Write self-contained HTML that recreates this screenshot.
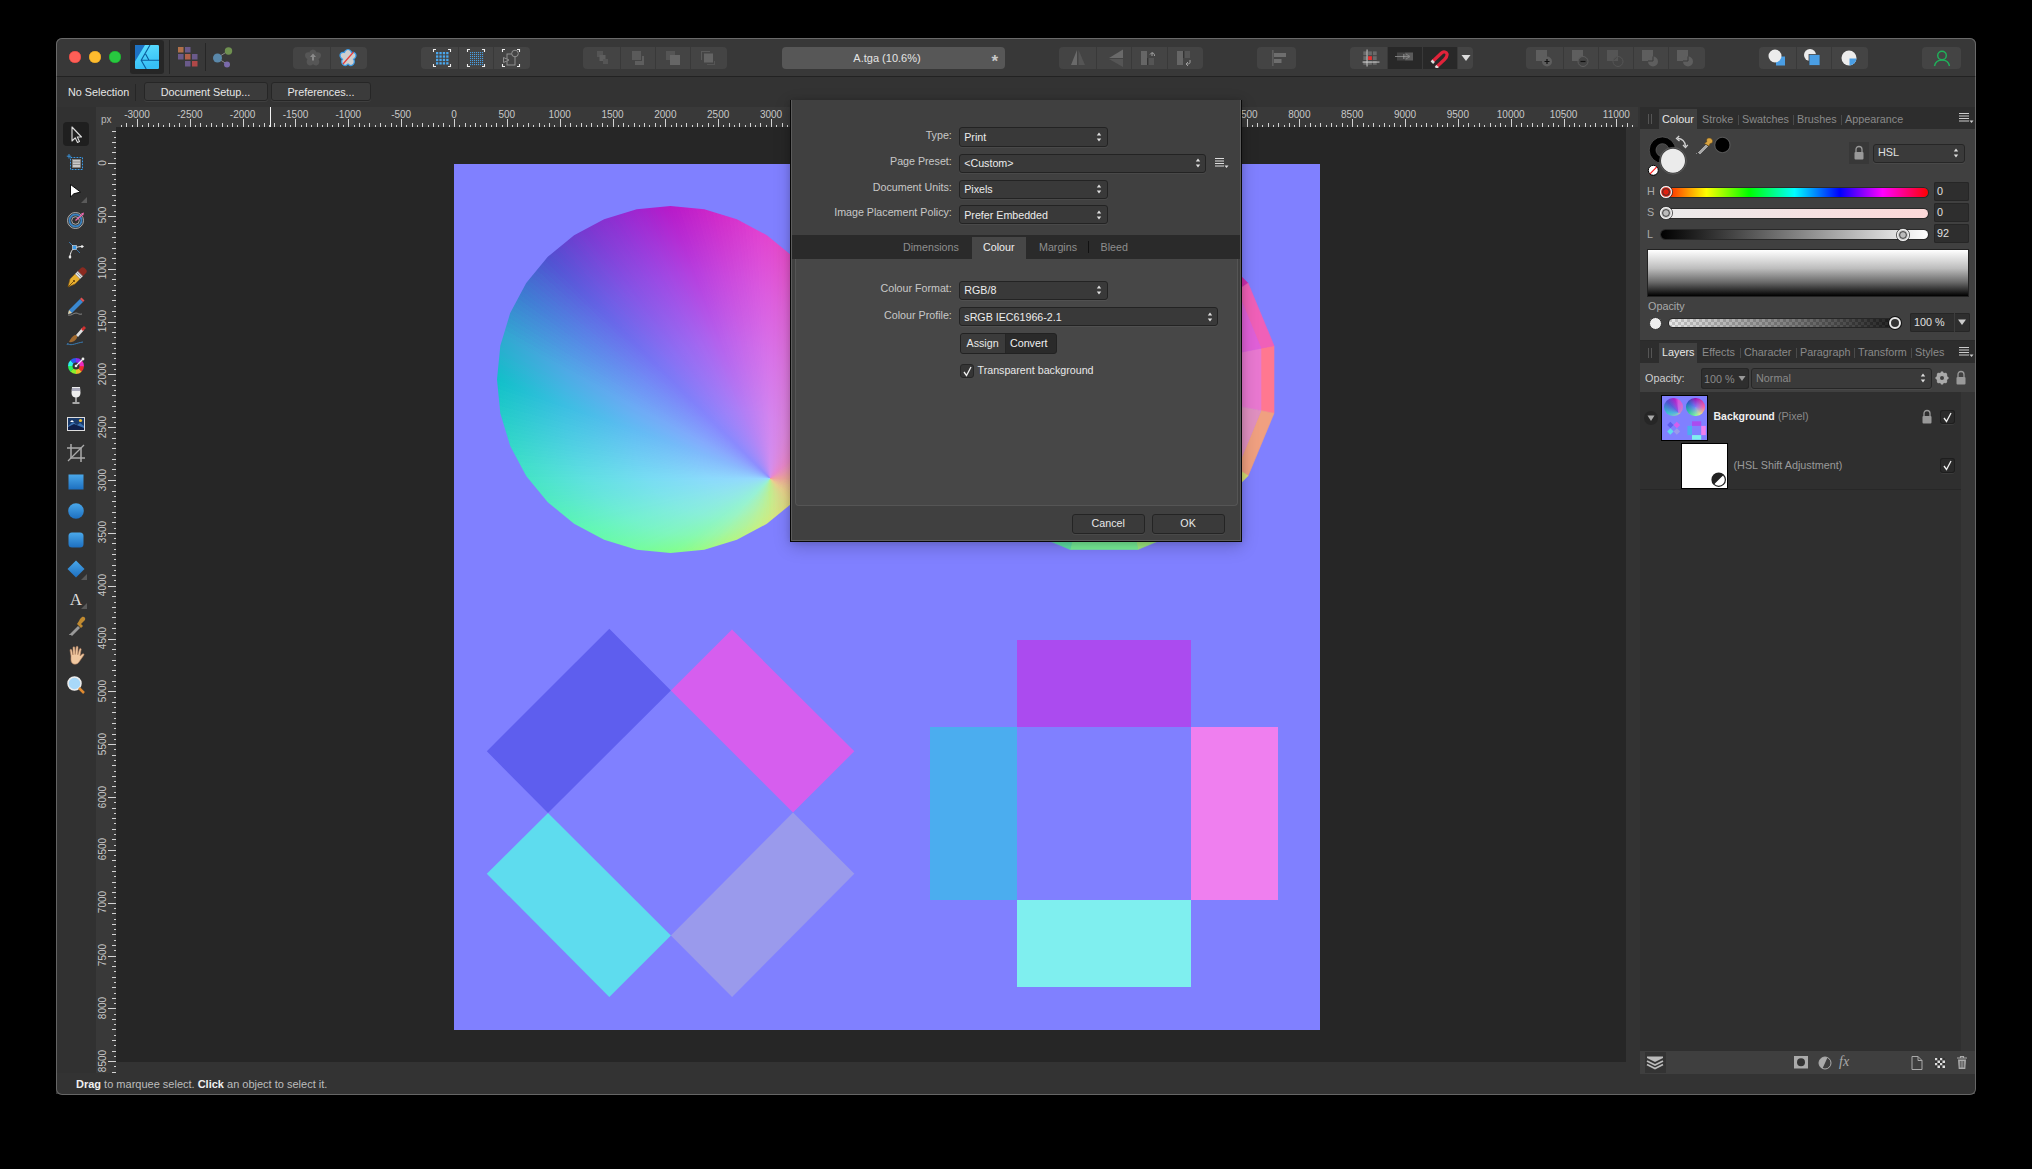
<!DOCTYPE html><html><head><meta charset="utf-8"><style>*{margin:0;padding:0;box-sizing:border-box}
html,body{width:2032px;height:1169px;background:#000;overflow:hidden;font-family:"Liberation Sans",sans-serif;color:#ddd;position:relative}
.a{position:absolute}
#win{position:absolute;left:56px;top:38px;width:1920px;height:1057px;background:#333;border-radius:6px}
#winb{position:absolute;left:56px;top:38px;width:1920px;height:1057px;border-radius:6px;box-shadow:inset 0 0 0 1px rgba(255,255,255,0.25);pointer-events:none;z-index:50}
.t{position:absolute;white-space:nowrap;font-size:11px;line-height:1}
</style></head><body>
<div id="win"></div>
<div class="a" style="left:56px;top:38px;width:1920px;height:38px;background:#383838;border-radius:6px 6px 0 0"></div>
<div class="a" style="left:56px;top:76px;width:1920px;height:1px;background:#222"></div>
<div class="a" style="left:69px;top:51px;width:12px;height:12px;border-radius:6px;background:#fe5f57;box-shadow:inset 0 0 0 0.5px #e0443e"></div>
<div class="a" style="left:89px;top:51px;width:12px;height:12px;border-radius:6px;background:#febc2e;box-shadow:inset 0 0 0 0.5px #dea123"></div>
<div class="a" style="left:109px;top:51px;width:12px;height:12px;border-radius:6px;background:#28c840;box-shadow:inset 0 0 0 0.5px #1aab29"></div>
<div class="a" style="left:130px;top:40px;width:34px;height:34px;background:#262626;border-radius:3px"></div>
<svg class="a" style="left:135px;top:45px" width="24" height="24" viewBox="0 0 24 24"><defs><linearGradient id="ap" x1="0" y1="0" x2="0.3" y2="1"><stop offset="0" stop-color="#5ee0ff"/><stop offset="1" stop-color="#36bff6"/></linearGradient></defs><rect x="0" y="0" width="24" height="24" rx="1.2" fill="url(#ap)"/><path d="M0,0 L10,0 L0,16.5Z" fill="#1e72c4"/><path d="M15,0 L6.2,15.3 L11.2,24 M6.2,15.3 L24,15.3 M10.6,9 L14,15.3" stroke="#0b5c9c" stroke-width="1.1" fill="none"/></svg>
<div class="a" style="left:169px;top:40px;width:1px;height:34px;background:#262626"></div>
<svg class="a" style="left:178px;top:47px" width="22" height="22"><rect x="0" y="0" width="5.5" height="5.5" fill="#b0704a"/><rect x="7" y="0" width="5.5" height="5.5" fill="#6a5a8a"/><rect x="0" y="7" width="5.5" height="5.5" fill="#6a5a8a"/><rect x="7" y="7" width="5.5" height="5.5" fill="#b0604a"/><rect x="14" y="7" width="5.5" height="5.5" fill="#6a5a8a"/><rect x="7" y="14" width="5.5" height="5.5" fill="#6a5a8a"/><rect x="14" y="14" width="5.5" height="5.5" fill="#b04848"/></svg>
<div class="a" style="left:205px;top:43px;width:1px;height:28px;background:#262626"></div>
<svg class="a" style="left:212px;top:46px" width="24" height="24"><line x1="5" y1="12" x2="16" y2="5" stroke="#888" stroke-width="1"/><line x1="5" y1="12" x2="15" y2="18" stroke="#888" stroke-width="1"/><circle cx="5.5" cy="12" r="4.5" fill="#5a88aa"/><circle cx="16.5" cy="5" r="3.7" fill="#6f9050"/><circle cx="15" cy="18.5" r="3" fill="#7a6aaa"/></svg>
<div class="a" style="left:293px;top:47px;width:74px;height:22px;background:#444;border-radius:4px;overflow:hidden">
<div class="a" style="left:37px;top:0;width:1px;height:22px;background:#393939"></div>
</div>
<svg class="a" style="left:300.5px;top:47.5px" width="24" height="20" viewBox="0 0 24 20"><path d="M12,1.5 C14.5,1.5 15.5,4 15.5,4.5 C17,4 19.8,4.5 20,7 C20.2,9.5 18,11 17.5,11.2 C18.5,12.5 19,15.5 16.5,17 C14,18.5 12.5,16.5 12,16 C11.5,16.5 10,18.5 7.5,17 C5,15.5 5.5,12.5 6.5,11.2 C6,11 3.8,9.5 4,7 C4.2,4.5 7,4 8.5,4.5 C8.5,4 9.5,1.5 12,1.5Z" fill="#565656"/><path d="M12,5.5 L9,9 L11,9 L11,12.5 L13,12.5 L13,9 L15,9Z" fill="#8a8a8a"/></svg>
<svg class="a" style="left:336.0px;top:47.5px" width="24" height="20" viewBox="0 0 24 20"><path d="M12,1.5 C14.5,1.5 15.5,4 15.5,4.5 C17,4 19.8,4.5 20,7 C20.2,9.5 18,11 17.5,11.2 C18.5,12.5 19,15.5 16.5,17 C14,18.5 12.5,16.5 12,16 C11.5,16.5 10,18.5 7.5,17 C5,15.5 5.5,12.5 6.5,11.2 C6,11 3.8,9.5 4,7 C4.2,4.5 7,4 8.5,4.5 C8.5,4 9.5,1.5 12,1.5Z" fill="#cfcfcf" stroke="#3a9be8" stroke-width="1.2"/><line x1="7" y1="16" x2="17.5" y2="4" stroke="#e83a3a" stroke-width="1.2"/></svg>
<div class="a" style="left:421px;top:47px;width:109px;height:22px;background:#444;border-radius:4px;overflow:hidden">
<div class="a" style="left:37px;top:0;width:1px;height:22px;background:#393939"></div>
<div class="a" style="left:72px;top:0;width:1px;height:22px;background:#393939"></div>
</div>
<svg class="a" style="left:429.5px;top:47.5px" width="24" height="20" viewBox="0 0 24 20"><path d="M3.5,4.0 L3.5,1.5 L6.0,1.5 M18.0,1.5 L20.5,1.5 L20.5,4.0 M3.5,16.0 L3.5,18.5 L6.0,18.5 M18.0,18.5 L20.5,18.5 L20.5,16.0" stroke="#eee" stroke-width="1.1" fill="none"/><rect x="6.0" y="4.0" width="2.3" height="2.3" fill="#4aa8ee"/><rect x="6.0" y="7.4" width="2.3" height="2.3" fill="#4aa8ee"/><rect x="6.0" y="10.8" width="2.3" height="2.3" fill="#4aa8ee"/><rect x="6.0" y="14.2" width="2.3" height="2.3" fill="#4aa8ee"/><rect x="9.4" y="4.0" width="2.3" height="2.3" fill="#4aa8ee"/><rect x="9.4" y="7.4" width="2.3" height="2.3" fill="#4aa8ee"/><rect x="9.4" y="10.8" width="2.3" height="2.3" fill="#4aa8ee"/><rect x="9.4" y="14.2" width="2.3" height="2.3" fill="#4aa8ee"/><rect x="12.8" y="4.0" width="2.3" height="2.3" fill="#4aa8ee"/><rect x="12.8" y="7.4" width="2.3" height="2.3" fill="#4aa8ee"/><rect x="12.8" y="10.8" width="2.3" height="2.3" fill="#4aa8ee"/><rect x="12.8" y="14.2" width="2.3" height="2.3" fill="#4aa8ee"/><rect x="16.2" y="4.0" width="2.3" height="2.3" fill="#4aa8ee"/><rect x="16.2" y="7.4" width="2.3" height="2.3" fill="#4aa8ee"/><rect x="16.2" y="10.8" width="2.3" height="2.3" fill="#4aa8ee"/><rect x="16.2" y="14.2" width="2.3" height="2.3" fill="#4aa8ee"/></svg>
<svg class="a" style="left:464.0px;top:47.5px" width="24" height="20" viewBox="0 0 24 20"><path d="M3.5,4.0 L3.5,1.5 L6.0,1.5 M18.0,1.5 L20.5,1.5 L20.5,4.0 M3.5,16.0 L3.5,18.5 L6.0,18.5 M18.0,18.5 L20.5,18.5 L20.5,16.0" stroke="#eee" stroke-width="1.1" fill="none"/><rect x="6" y="4" width="1.1" height="1.1" fill="#4a9ee0"/><rect x="6" y="6" width="1.1" height="1.1" fill="#4a9ee0"/><rect x="6" y="8" width="1.1" height="1.1" fill="#4a9ee0"/><rect x="6" y="10" width="1.1" height="1.1" fill="#4a9ee0"/><rect x="6" y="12" width="1.1" height="1.1" fill="#4a9ee0"/><rect x="6" y="14" width="1.1" height="1.1" fill="#4a9ee0"/><rect x="6" y="16" width="1.1" height="1.1" fill="#4a9ee0"/><rect x="8" y="4" width="1.1" height="1.1" fill="#4a9ee0"/><rect x="8" y="6" width="1.1" height="1.1" fill="#4a9ee0"/><rect x="8" y="8" width="1.1" height="1.1" fill="#4a9ee0"/><rect x="8" y="10" width="1.1" height="1.1" fill="#4a9ee0"/><rect x="8" y="12" width="1.1" height="1.1" fill="#4a9ee0"/><rect x="8" y="14" width="1.1" height="1.1" fill="#4a9ee0"/><rect x="8" y="16" width="1.1" height="1.1" fill="#4a9ee0"/><rect x="10" y="4" width="1.1" height="1.1" fill="#4a9ee0"/><rect x="10" y="6" width="1.1" height="1.1" fill="#4a9ee0"/><rect x="10" y="8" width="1.1" height="1.1" fill="#4a9ee0"/><rect x="10" y="10" width="1.1" height="1.1" fill="#4a9ee0"/><rect x="10" y="12" width="1.1" height="1.1" fill="#4a9ee0"/><rect x="10" y="14" width="1.1" height="1.1" fill="#4a9ee0"/><rect x="10" y="16" width="1.1" height="1.1" fill="#4a9ee0"/><rect x="12" y="4" width="1.1" height="1.1" fill="#4a9ee0"/><rect x="12" y="6" width="1.1" height="1.1" fill="#4a9ee0"/><rect x="12" y="8" width="1.1" height="1.1" fill="#4a9ee0"/><rect x="12" y="10" width="1.1" height="1.1" fill="#4a9ee0"/><rect x="12" y="12" width="1.1" height="1.1" fill="#4a9ee0"/><rect x="12" y="14" width="1.1" height="1.1" fill="#4a9ee0"/><rect x="12" y="16" width="1.1" height="1.1" fill="#4a9ee0"/><rect x="14" y="4" width="1.1" height="1.1" fill="#4a9ee0"/><rect x="14" y="6" width="1.1" height="1.1" fill="#4a9ee0"/><rect x="14" y="8" width="1.1" height="1.1" fill="#4a9ee0"/><rect x="14" y="10" width="1.1" height="1.1" fill="#4a9ee0"/><rect x="14" y="12" width="1.1" height="1.1" fill="#4a9ee0"/><rect x="14" y="14" width="1.1" height="1.1" fill="#4a9ee0"/><rect x="14" y="16" width="1.1" height="1.1" fill="#4a9ee0"/><rect x="16" y="4" width="1.1" height="1.1" fill="#4a9ee0"/><rect x="16" y="6" width="1.1" height="1.1" fill="#4a9ee0"/><rect x="16" y="8" width="1.1" height="1.1" fill="#4a9ee0"/><rect x="16" y="10" width="1.1" height="1.1" fill="#4a9ee0"/><rect x="16" y="12" width="1.1" height="1.1" fill="#4a9ee0"/><rect x="16" y="14" width="1.1" height="1.1" fill="#4a9ee0"/><rect x="16" y="16" width="1.1" height="1.1" fill="#4a9ee0"/><rect x="18" y="4" width="1.1" height="1.1" fill="#4a9ee0"/><rect x="18" y="6" width="1.1" height="1.1" fill="#4a9ee0"/><rect x="18" y="8" width="1.1" height="1.1" fill="#4a9ee0"/><rect x="18" y="10" width="1.1" height="1.1" fill="#4a9ee0"/><rect x="18" y="12" width="1.1" height="1.1" fill="#4a9ee0"/><rect x="18" y="14" width="1.1" height="1.1" fill="#4a9ee0"/><rect x="18" y="16" width="1.1" height="1.1" fill="#4a9ee0"/></svg>
<svg class="a" style="left:499.0px;top:47.5px" width="24" height="20" viewBox="0 0 24 20"><path d="M3.5,4.0 L3.5,1.5 L6.0,1.5 M18.0,1.5 L20.5,1.5 L20.5,4.0 M3.5,16.0 L3.5,18.5 L6.0,18.5 M18.0,18.5 L20.5,18.5 L20.5,16.0" stroke="#eee" stroke-width="1.1" fill="none"/><rect x="8" y="6" width="8" height="11" fill="none" stroke="#999" stroke-width="0.9"/><circle cx="16" cy="5.5" r="3.3" fill="#444" stroke="#999" stroke-width="0.9"/><path d="M4.5,9.5 L10,12 L4.5,14.5Z" fill="#444" stroke="#999" stroke-width="0.9"/></svg>
<div class="a" style="left:583px;top:47px;width:144px;height:22px;background:#444;border-radius:4px;overflow:hidden">
<div class="a" style="left:37px;top:0;width:1px;height:22px;background:#393939"></div>
<div class="a" style="left:72px;top:0;width:1px;height:22px;background:#393939"></div>
<div class="a" style="left:107px;top:0;width:1px;height:22px;background:#393939"></div>
</div>
<svg class="a" style="left:589.5px;top:47.5px" width="24" height="20" viewBox="0 0 24 20"><rect x="7" y="3" width="6" height="6" fill="#555"/><rect x="9.5" y="7" width="6" height="6" fill="#5e5e5e"/><rect x="13" y="11" width="5" height="5" fill="#555"/></svg>
<svg class="a" style="left:625.5px;top:47.5px" width="24" height="20" viewBox="0 0 24 20"><rect x="6" y="3" width="9" height="9" fill="#5a5a5a"/><path d="M16,8 L18,8 L18,17 L9,17 L9,13 L16,13Z" fill="#5e5e5e"/></svg>
<svg class="a" style="left:660.5px;top:47.5px" width="24" height="20" viewBox="0 0 24 20"><rect x="5" y="3" width="9" height="9" fill="#555"/><rect x="9" y="7" width="10" height="10" fill="#666"/></svg>
<svg class="a" style="left:696.0px;top:47.5px" width="24" height="20" viewBox="0 0 24 20"><path d="M5,3 L14,3 L14,4 L6,4 L6,12 L5,12Z" fill="#5a5a5a"/><rect x="8" y="5.5" width="9" height="9" fill="#646464"/><path d="M18,13 L19,13 L19,17 L11,17 L11,16 L18,16Z" fill="#555"/></svg>
<div class="a" style="left:782px;top:47px;width:223px;height:22px;background:#575757;border-radius:4px"></div>
<div class="t" style="left:782px;top:52.5px;width:210px;text-align:center;font-size:11px;color:#e4e4e4">A.tga (10.6%)</div>
<div class="t" style="left:991.5px;top:53px;font-size:17px;color:#c8c8c8;font-weight:bold">*</div>
<div class="a" style="left:1059px;top:47px;width:144px;height:22px;background:#444;border-radius:4px;overflow:hidden">
<div class="a" style="left:37px;top:0;width:1px;height:22px;background:#393939"></div>
<div class="a" style="left:72px;top:0;width:1px;height:22px;background:#393939"></div>
<div class="a" style="left:108px;top:0;width:1px;height:22px;background:#393939"></div>
</div>
<svg class="a" style="left:1065.5px;top:47.5px" width="24" height="20" viewBox="0 0 24 20"><path d="M11,2 L11,17 L5,17Z" fill="#6a6a6a"/><path d="M12.5,2 L12.5,17 L19,17Z" fill="#555"/></svg>
<svg class="a" style="left:1101.5px;top:47.5px" width="24" height="20" viewBox="0 0 24 20"><path d="M21,1.5 L7,10 L21,10Z" fill="#6a6a6a"/><path d="M21,11 L7,11 L21,19Z" fill="#555"/></svg>
<svg class="a" style="left:1137.0px;top:47.5px" width="24" height="20" viewBox="0 0 24 20"><rect x="4" y="3" width="6" height="14" fill="#666"/><rect x="10.5" y="10" width="0.8" height="7" fill="#222"/><rect x="11.5" y="10" width="5.5" height="7" fill="#555"/><path d="M13,6.5 L15,4.5 L15,8 M15,5 C17,5 17.5,6 17.5,8" stroke="#aaa" stroke-width="0.9" fill="none"/></svg>
<svg class="a" style="left:1172.5px;top:47.5px" width="24" height="20" viewBox="0 0 24 20"><rect x="4" y="3" width="6" height="14" fill="#666"/><rect x="10.5" y="3" width="0.8" height="7" fill="#222"/><rect x="11.5" y="3" width="5.5" height="7" fill="#555"/><path d="M17,12 L17,14.5 C17,15.5 16,16 14,16 M15,14 L13,16 L15,18" stroke="#aaa" stroke-width="0.9" fill="none"/></svg>
<div class="a" style="left:1257px;top:47px;width:39px;height:22px;background:#444;border-radius:4px;overflow:hidden">
</div>
<svg class="a" style="left:1264.5px;top:47.5px" width="24" height="20" viewBox="0 0 24 20"><rect x="7.5" y="2" width="0.8" height="16" fill="#777"/><rect x="9" y="5" width="12" height="4" fill="#6e6e6e"/><rect x="9" y="11" width="7.5" height="4" fill="#6e6e6e"/></svg>
<div class="a" style="left:1350px;top:47px;width:123px;height:22px;background:#444;border-radius:4px;overflow:hidden">
<div class="a" style="left:37px;top:0;width:35px;height:22px;background:#282828"></div>
<div class="a" style="left:72px;top:0;width:35px;height:22px;background:#282828"></div>
<div class="a" style="left:37px;top:0;width:1px;height:22px;background:#393939"></div>
<div class="a" style="left:72px;top:0;width:1px;height:22px;background:#393939"></div>
<div class="a" style="left:107px;top:0;width:1px;height:22px;background:#393939"></div>
</div>
<svg class="a" style="left:1356.5px;top:47.5px" width="24" height="20" viewBox="0 0 24 20"><rect x="6.3" y="3.4" width="3.8" height="3.8" fill="#6a6a6a"/><rect x="6.3" y="8.2" width="3.8" height="3.8" fill="#6a6a6a"/><rect x="6.3" y="13.0" width="3.8" height="3.8" fill="#6a6a6a"/><rect x="11.1" y="3.4" width="3.8" height="3.8" fill="#6a6a6a"/><rect x="11.1" y="8.2" width="3.8" height="3.8" fill="#e83030"/><rect x="11.1" y="13.0" width="3.8" height="3.8" fill="#6a6a6a"/><rect x="15.899999999999999" y="3.4" width="3.8" height="3.8" fill="#6a6a6a"/><rect x="15.899999999999999" y="8.2" width="3.8" height="3.8" fill="#6a6a6a"/><rect x="15.899999999999999" y="13.0" width="3.8" height="3.8" fill="#6a6a6a"/><rect x="9.6" y="1.5" width="0.9" height="17" fill="#d8d8d8"/><rect x="5.5" y="13.6" width="17" height="0.9" fill="#d8d8d8"/></svg>
<svg class="a" style="left:1392.5px;top:47.5px" width="24" height="20" viewBox="0 0 24 20"><rect x="12" y="4.5" width="8" height="8" fill="#5a5a5a"/><rect x="4" y="4.5" width="8" height="8" fill="#444"/><path d="M2,8.5 L16,8.5 M13,6 L17,8.5 L13,11" stroke="#888" stroke-width="0.9" fill="none"/><rect x="10.5" y="6" width="0.8" height="5" fill="#aaa"/></svg>
<svg class="a" style="left:1427.5px;top:47.5px" width="24" height="20" viewBox="0 0 24 20"><path d="M4.5,13.5 L13.5,5 C15.5,3 18.5,4 19,6 C19.5,8 18,10 16.5,11.5 L8.5,19" stroke="#e0233a" stroke-width="3.2" fill="none" stroke-linecap="butt"/><path d="M3.5,12.5 L6,15" stroke="#ddd" stroke-width="2.5"/><path d="M7.5,18 L10,20" stroke="#ddd" stroke-width="2.5"/></svg>
<svg class="a" style="left:1459.5px;top:47.5px" width="12" height="20" viewBox="0 0 12 20"><path d="M1.5,7 L10.5,7 L6,13Z" fill="#ddd"/></svg>
<div class="a" style="left:1526px;top:47px;width:179px;height:22px;background:#444;border-radius:4px;overflow:hidden">
<div class="a" style="left:37px;top:0;width:1px;height:22px;background:#393939"></div>
<div class="a" style="left:72px;top:0;width:1px;height:22px;background:#393939"></div>
<div class="a" style="left:107px;top:0;width:1px;height:22px;background:#393939"></div>
<div class="a" style="left:142px;top:0;width:1px;height:22px;background:#393939"></div>
</div>
<svg class="a" style="left:1533.0px;top:47.5px" width="24" height="20" viewBox="0 0 24 20"><rect x="3" y="2" width="11" height="11" fill="#5e5e5e"/><circle cx="14" cy="13.5" r="5" fill="#5e5e5e"/><path d="M11.5,13.5 L16.5,13.5 M14,11 L14,16" stroke="#111" stroke-width="1.2"/></svg>
<svg class="a" style="left:1568.5px;top:47.5px" width="24" height="20" viewBox="0 0 24 20"><rect x="3" y="2" width="11" height="11" fill="#5e5e5e"/><circle cx="14" cy="13.5" r="5" fill="#444" stroke="#5e5e5e" stroke-width="1"/><path d="M11.5,13.5 L16.5,13.5" stroke="#111" stroke-width="1.2"/></svg>
<svg class="a" style="left:1604.0px;top:47.5px" width="24" height="20" viewBox="0 0 24 20"><rect x="3" y="2" width="11" height="11" fill="#555"/><circle cx="14" cy="13.5" r="5" fill="#444" stroke="#555" stroke-width="1"/><path d="M14,8.5 L14,13 L9,13" fill="#555"/></svg>
<svg class="a" style="left:1639.0px;top:47.5px" width="24" height="20" viewBox="0 0 24 20"><rect x="3" y="2" width="11" height="11" fill="#5e5e5e"/><circle cx="14" cy="13.5" r="5" fill="#5e5e5e"/><path d="M9,13 L14,13 L14,8.5" stroke="#3a3a3a" stroke-width="1" fill="none"/></svg>
<svg class="a" style="left:1674.0px;top:47.5px" width="24" height="20" viewBox="0 0 24 20"><rect x="3" y="2" width="11" height="11" fill="#5e5e5e"/><circle cx="14" cy="13.5" r="5" fill="#5e5e5e"/><path d="M9,13 L14,13 L14,8.5" stroke="#3a3a3a" stroke-width="1" fill="none"/></svg>
<div class="a" style="left:1759px;top:47px;width:109px;height:22px;background:#444;border-radius:4px;overflow:hidden">
<div class="a" style="left:37px;top:0;width:1px;height:22px;background:#393939"></div>
<div class="a" style="left:72px;top:0;width:1px;height:22px;background:#393939"></div>
</div>
<svg class="a" style="left:1765.5px;top:47.5px" width="24" height="20" viewBox="0 0 24 20"><rect x="10" y="8.5" width="9" height="9" fill="#4a9ee4"/><circle cx="9" cy="8" r="6.5" fill="#ececec"/></svg>
<svg class="a" style="left:1801.0px;top:47.5px" width="24" height="20" viewBox="0 0 24 20"><circle cx="9" cy="7" r="6" fill="#ececec"/><rect x="8" y="6.5" width="11" height="11" fill="#4a9ee4" stroke="#444" stroke-width="0.8"/></svg>
<svg class="a" style="left:1837.0px;top:47.5px" width="24" height="20" viewBox="0 0 24 20"><circle cx="12" cy="10" r="7.5" fill="#ececec"/><path d="M12.5,10.5 L19.5,10.5 A7.5,7.5 0 0 1 12.5,17.5Z" fill="#4a9ee4"/></svg>
<div class="a" style="left:1922px;top:47px;width:39px;height:22px;background:#444;border-radius:4px;overflow:hidden">
</div>
<svg class="a" style="left:1929.5px;top:47.5px" width="24" height="20" viewBox="0 0 24 20"><circle cx="12" cy="7.5" r="4.3" fill="none" stroke="#1fb25a" stroke-width="1.4"/><path d="M4.5,18 C5.5,13.5 8.5,12 12,12 C15.5,12 18.5,13.5 19.5,18" fill="none" stroke="#1fb25a" stroke-width="1.4"/></svg>

<div class="a" style="left:56px;top:77px;width:1920px;height:30px;background:#333"></div>
<div class="t" style="left:68px;top:86.5px;font-size:10.8px;color:#e6e6e6">No Selection</div>
<div class="a" style="left:135px;top:84px;width:1px;height:17px;background:#262626"></div>
<div class="a" style="left:143.5px;top:82px;width:124.0px;height:19px;background:#3b3b3b;border:1px solid #262626;border-radius:3px;box-shadow:0 1px 0 rgba(255,255,255,0.06)"></div>
<div class="t" style="left:143.5px;top:86.9px;width:124.0px;text-align:center;font-size:10.8px;color:#e6e6e6">Document Setup...</div>
<div class="a" style="left:271px;top:82px;width:100px;height:19px;background:#3b3b3b;border:1px solid #262626;border-radius:3px;box-shadow:0 1px 0 rgba(255,255,255,0.06)"></div>
<div class="t" style="left:271px;top:86.9px;width:100px;text-align:center;font-size:10.8px;color:#e6e6e6">Preferences...</div>
<div class="a" style="left:56px;top:107px;width:40px;height:966px;background:#313131"></div>
<div class="a" style="left:63px;top:122px;width:26px;height:24px;background:#1f1f1f;border-radius:4px"></div>
<svg class="a" style="left:63.5px;top:122.0px" width="24" height="24" viewBox="0 0 24 24"><path d="M8,5 L8,19 L11.2,15.8 L13.5,20.5 L15.5,19.5 L13.3,15 L17.5,15Z" fill="none" stroke="#ddd" stroke-width="1.1" stroke-linejoin="round"/></svg>
<svg class="a" style="left:63.5px;top:151.0px" width="24" height="24" viewBox="0 0 24 24"><rect x="6.5" y="6.5" width="12" height="12" fill="none" stroke="#3a9ae8" stroke-width="1" stroke-dasharray="1.8,1.2"/><rect x="8.5" y="8.5" width="8" height="8" fill="#c8c8c8" stroke="#888" stroke-width="0.6"/><path d="M8.5,11 L16.5,11 M8.5,13.5 L16.5,13.5" stroke="#777" stroke-width="0.7"/><path d="M5,3 L5,7.5 M2.8,5.2 L7.2,5.2" stroke="#3a9ae8" stroke-width="0.9"/></svg>
<svg class="a" style="left:63.5px;top:180.0px" width="24" height="24" viewBox="0 0 24 24"><path d="M6.5,4.5 L6.5,17 L9.8,13.8 L16.5,12Z" fill="#fff" stroke="#000" stroke-width="0.9" stroke-linejoin="round"/><path d="M23,17 L23,23 L17,23Z" fill="#5a5a5a"/></svg>
<svg class="a" style="left:63.5px;top:208.0px" width="24" height="24" viewBox="0 0 24 24"><circle cx="11.5" cy="12.5" r="8" fill="none" stroke="#bbb" stroke-width="0.9"/><circle cx="11.5" cy="12.5" r="6" fill="none" stroke="#3a82c0" stroke-width="1.8"/><circle cx="11.5" cy="12.5" r="3.8" fill="none" stroke="#bbb" stroke-width="0.9"/><path d="M11.5,12.5 L19,6" stroke="#f06ab0" stroke-width="1.3"/><path d="M17,5.5 L20,4.5 L19.2,7.5Z" fill="#f06ab0"/></svg>
<svg class="a" style="left:63.5px;top:237.0px" width="24" height="24" viewBox="0 0 24 24"><path d="M6,21 C6,16 8,12 11,11 C13,10 15,9.5 19,9.5" stroke="#eee" stroke-width="1" fill="none"/><path d="M5,5 L16,16" stroke="#3a82c0" stroke-width="0.8"/><rect x="8.5" y="8.5" width="4" height="4" fill="#3a9ae8" stroke="#ddd" stroke-width="0.6"/><path d="M18,8 L20,9.5 L18,11 L16,9.5Z M6,18 L7.5,20 L6,22 L4.5,20Z" fill="#eee"/></svg>
<svg class="a" style="left:63.5px;top:266.0px" width="24" height="24" viewBox="0 0 24 24"><path d="M4,21 L6,13 L11,8 L16,13 L11,18Z" fill="#e8b030" stroke="#8a5a10" stroke-width="0.6"/><path d="M4,21 L9.5,15.5" stroke="#5a3a08" stroke-width="0.8"/><circle cx="10" cy="15" r="1" fill="#5a3a08"/><path d="M11,8 L14,5 L19,10 L16,13Z" fill="#ddd"/><path d="M12.5,6.5 L17.5,11.5 M13.8,5.5 L18.5,10.2" stroke="#777" stroke-width="0.7"/><path d="M14,5 L17,2 C18,1 19.5,1 20.5,2 L22,3.5 C23,4.5 23,6 22,7 L19,10Z" fill="#8a2a20"/></svg>
<svg class="a" style="left:63.5px;top:295.0px" width="24" height="24" viewBox="0 0 24 24"><path d="M4,19 L5,15 L16,4 L19,7 L8,18Z" fill="#3a88d0"/><path d="M16,4 L17.5,2.5 L20.5,5.5 L19,7Z" fill="#e05050"/><path d="M4,19 L5,15 L8,18Z" fill="#e8d0a0"/><path d="M4,20 C8,21 9,18 12,18 C14,18 15,20 18,19" stroke="#999" stroke-width="0.8" fill="none"/></svg>
<svg class="a" style="left:63.5px;top:324.0px" width="24" height="24" viewBox="0 0 24 24"><path d="M6,16 C9,11 12,10 13,12 C14,14 10,19 5,18Z" fill="#a06a30"/><path d="M12,11 L18,4 L20,6 L14,13Z" fill="#e0e0e0"/><path d="M17,5 L20,2 L22,4 L19,7Z" fill="#d03030"/><path d="M4,19 L3,21 M4,20 C8,22 12,19 19,18" stroke="#3a82c0" stroke-width="0.9" fill="none"/></svg>
<svg class="a" style="left:63.5px;top:354.0px" width="24" height="24" viewBox="0 0 24 24"><path d="M12,12 L20.0,12.0 A8,8 0 0 1 17.557266963671978,17.75471840270921Z" fill="hsl(0,85%,55%)"/><path d="M12,12 L17.65685424949238,17.65685424949238 A8,8 0 0 1 11.860380748501733,19.99878156125113Z" fill="hsl(45,85%,55%)"/><path d="M12,12 L12.0,20.0 A8,8 0 0 1 6.2452815972907905,17.557266963671978Z" fill="hsl(90,85%,55%)"/><path d="M12,12 L6.34314575050762,17.65685424949238 A8,8 0 0 1 4.00121843874887,11.860380748501731Z" fill="hsl(135,85%,55%)"/><path d="M12,12 L4.0,12.000000000000002 A8,8 0 0 1 6.442733036328022,6.2452815972907905Z" fill="hsl(180,85%,55%)"/><path d="M12,12 L6.3431457505076185,6.34314575050762 A8,8 0 0 1 12.139619251498265,4.00121843874887Z" fill="hsl(225,85%,55%)"/><path d="M12,12 L11.999999999999998,4.0 A8,8 0 0 1 17.75471840270921,6.442733036328019Z" fill="hsl(270,85%,55%)"/><path d="M12,12 L17.65685424949238,6.3431457505076185 A8,8 0 0 1 19.99878156125113,12.139619251498264Z" fill="hsl(315,85%,55%)"/><circle cx="12" cy="12" r="3.5" fill="#333"/><path d="M12,12 L19,5" stroke="#eee" stroke-width="1.1"/><circle cx="19" cy="5" r="1.4" fill="#eee"/><circle cx="12" cy="12" r="1.3" fill="#eee"/></svg>
<svg class="a" style="left:63.5px;top:383.0px" width="24" height="24" viewBox="0 0 24 24"><path d="M8,4 L16,4 L16.5,10 C16.5,13 14.5,14.5 12,14.5 C9.5,14.5 7.5,13 7.5,10Z" fill="#eee"/><path d="M8,5 L16,5 L16.2,8 L7.8,8Z" fill="#aab"/><rect x="11.4" y="14" width="1.2" height="5" fill="#ddd"/><path d="M8.5,20 L15.5,20" stroke="#ddd" stroke-width="1.4"/></svg>
<svg class="a" style="left:63.5px;top:412.0px" width="24" height="24" viewBox="0 0 24 24"><rect x="3.5" y="5.5" width="17" height="13" fill="#1a3a6a" stroke="#ddd" stroke-width="1"/><path d="M4,14 L9,10 L13,13 L16,11 L20,14 L20,18 L4,18Z" fill="#3a70b0"/><path d="M4,15 L10,12 L20,16 L20,18 L4,18Z" fill="#10204a"/><circle cx="16.5" cy="8.5" r="1.6" fill="#f0c030"/><path d="M6,10 L8,8 L10,10Z" fill="#fff"/></svg>
<svg class="a" style="left:63.5px;top:441.0px" width="24" height="24" viewBox="0 0 24 24"><path d="M7,3 L7,17 L21,17 M3,7 L17,7 L17,21" stroke="#aaa" stroke-width="1.5" fill="none"/><path d="M4,20 L20,4" stroke="#aaa" stroke-width="1.3"/></svg>
<svg class="a" style="left:63.5px;top:470.0px" width="24" height="24" viewBox="0 0 24 24"><defs><linearGradient id="tb" x1="0" y1="0" x2="0" y2="1"><stop offset="0" stop-color="#4aa8ea"/><stop offset="1" stop-color="#1d6fc0"/></linearGradient></defs><rect x="4.5" y="4.5" width="15" height="15" fill="url(#tb)"/></svg>
<svg class="a" style="left:63.5px;top:499.0px" width="24" height="24" viewBox="0 0 24 24"><circle cx="12" cy="12" r="7.8" fill="url(#tb)"/></svg>
<svg class="a" style="left:63.5px;top:528.0px" width="24" height="24" viewBox="0 0 24 24"><rect x="4.5" y="4.5" width="15" height="15" rx="3.5" fill="url(#tb)"/></svg>
<svg class="a" style="left:63.5px;top:557.0px" width="24" height="24" viewBox="0 0 24 24"><path d="M12,3.5 L20.5,12 L12,20.5 L3.5,12Z" fill="url(#tb)"/><path d="M23,17 L23,23 L17,23Z" fill="#5a5a5a"/></svg>
<svg class="a" style="left:63.5px;top:586.0px" width="24" height="24" viewBox="0 0 24 24"><text x="12" y="19" text-anchor="middle" font-family="Liberation Serif" font-size="17" fill="#ddd">A</text><path d="M23,17 L23,23 L17,23Z" fill="#5a5a5a"/></svg>
<svg class="a" style="left:63.5px;top:615.0px" width="24" height="24" viewBox="0 0 24 24"><path d="M6,19 L14,11 L16,13 L8,21Z" fill="#999"/><path d="M5,20 L6,19 L7,20Z" fill="#ccc"/><path d="M13,9 L15,11 L17,13 L19,11 L17,9 L19,7 L21,5 C22,3 20,1 18,2 L16,4 L15,6Z" fill="#c08a30"/></svg>
<svg class="a" style="left:63.5px;top:644.0px" width="24" height="24" viewBox="0 0 24 24"><path d="M7,12 L6,6 C6,5 7.5,5 7.8,6 L9,11 L9,3.5 C9,2.5 10.8,2.5 10.8,3.5 L11.2,10.5 L12.2,3 C12.3,2 14,2 14,3 L13.8,10.8 L15.5,5 C15.8,4 17.3,4.3 17.2,5.3 L16,12 L18.5,10 C19.5,9.2 20.5,10.3 19.8,11.2 L15,18 C13.5,20.5 10,21 8,19 C6.5,17.5 7,14 7,12Z" fill="#f0c8a0" stroke="#b08060" stroke-width="0.6"/></svg>
<svg class="a" style="left:63.5px;top:673.0px" width="24" height="24" viewBox="0 0 24 24"><circle cx="10.5" cy="10.5" r="6.5" fill="#a8d8f8" stroke="#eee" stroke-width="1.5"/><path d="M15,15 L20,20" stroke="#e08a30" stroke-width="2.5"/></svg>
<div class="a" style="left:116px;top:127px;width:1510px;height:935px;background:#262626;overflow:hidden">
<div class="a" style="left:338px;top:37px;width:866px;height:866px;background:#8080ff;overflow:hidden">
<svg class="a" style="left:0;top:0" width="866" height="866"><defs><linearGradient id="f0" gradientUnits="userSpaceOnUse" x1="316.0" y1="314.5" x2="307.6" y2="399.6"><stop offset="0" stop-color="#98ecdf"/><stop offset="0.25" stop-color="#94efdb"/><stop offset="0.5" stop-color="#8ef3cc"/><stop offset="0.75" stop-color="#87f9b1"/><stop offset="1" stop-color="#7fff89"/></linearGradient><linearGradient id="f1" gradientUnits="userSpaceOnUse" x1="316.0" y1="314.5" x2="307.6" y2="399.6"><stop offset="0" stop-color="#98ebe0"/><stop offset="0.25" stop-color="#94eedc"/><stop offset="0.5" stop-color="#8ef3ce"/><stop offset="0.75" stop-color="#86f8b3"/><stop offset="1" stop-color="#7eff8b"/></linearGradient><linearGradient id="f2" gradientUnits="userSpaceOnUse" x1="316.0" y1="314.5" x2="307.6" y2="399.6"><stop offset="0" stop-color="#98eae1"/><stop offset="0.25" stop-color="#94eddd"/><stop offset="0.5" stop-color="#8df2cf"/><stop offset="0.75" stop-color="#85f8b5"/><stop offset="1" stop-color="#7cfe8e"/></linearGradient><linearGradient id="f3" gradientUnits="userSpaceOnUse" x1="316.0" y1="314.5" x2="307.6" y2="399.6"><stop offset="0" stop-color="#98eae2"/><stop offset="0.25" stop-color="#93edde"/><stop offset="0.5" stop-color="#8df2d0"/><stop offset="0.75" stop-color="#84f7b7"/><stop offset="1" stop-color="#7bfe90"/></linearGradient><linearGradient id="f4" gradientUnits="userSpaceOnUse" x1="316.0" y1="314.5" x2="307.6" y2="399.6"><stop offset="0" stop-color="#98e9e3"/><stop offset="0.25" stop-color="#93ecdf"/><stop offset="0.5" stop-color="#8cf1d2"/><stop offset="0.75" stop-color="#83f7b8"/><stop offset="1" stop-color="#79fe92"/></linearGradient><linearGradient id="f5" gradientUnits="userSpaceOnUse" x1="316.0" y1="314.5" x2="307.6" y2="399.6"><stop offset="0" stop-color="#98e9e4"/><stop offset="0.25" stop-color="#93ece0"/><stop offset="0.5" stop-color="#8bf1d3"/><stop offset="0.75" stop-color="#82f7ba"/><stop offset="1" stop-color="#78fd94"/></linearGradient><linearGradient id="f6" gradientUnits="userSpaceOnUse" x1="316.0" y1="314.5" x2="307.6" y2="399.6"><stop offset="0" stop-color="#98e8e5"/><stop offset="0.25" stop-color="#93ebe1"/><stop offset="0.5" stop-color="#8bf0d4"/><stop offset="0.75" stop-color="#81f6bb"/><stop offset="1" stop-color="#76fd97"/></linearGradient><linearGradient id="f7" gradientUnits="userSpaceOnUse" x1="316.0" y1="314.5" x2="307.6" y2="399.6"><stop offset="0" stop-color="#98e7e6"/><stop offset="0.25" stop-color="#93ebe2"/><stop offset="0.5" stop-color="#8af0d5"/><stop offset="0.75" stop-color="#80f6bd"/><stop offset="1" stop-color="#75fd99"/></linearGradient><linearGradient id="f8" gradientUnits="userSpaceOnUse" x1="316.0" y1="314.5" x2="284.5" y2="418.2"><stop offset="0" stop-color="#98e7e7"/><stop offset="0.25" stop-color="#92eae3"/><stop offset="0.5" stop-color="#8aefd6"/><stop offset="0.75" stop-color="#7ff6bf"/><stop offset="1" stop-color="#73fd9b"/></linearGradient><linearGradient id="f9" gradientUnits="userSpaceOnUse" x1="316.0" y1="314.5" x2="284.5" y2="418.2"><stop offset="0" stop-color="#98e6e8"/><stop offset="0.25" stop-color="#92eae4"/><stop offset="0.5" stop-color="#89efd8"/><stop offset="0.75" stop-color="#7ef5c0"/><stop offset="1" stop-color="#72fc9d"/></linearGradient><linearGradient id="f10" gradientUnits="userSpaceOnUse" x1="316.0" y1="314.5" x2="284.5" y2="418.2"><stop offset="0" stop-color="#98e6e9"/><stop offset="0.25" stop-color="#92e9e5"/><stop offset="0.5" stop-color="#88efd9"/><stop offset="0.75" stop-color="#7df5c2"/><stop offset="1" stop-color="#70fca0"/></linearGradient><linearGradient id="f11" gradientUnits="userSpaceOnUse" x1="316.0" y1="314.5" x2="284.5" y2="418.2"><stop offset="0" stop-color="#98e5ea"/><stop offset="0.25" stop-color="#92e9e6"/><stop offset="0.5" stop-color="#88eeda"/><stop offset="0.75" stop-color="#7cf4c3"/><stop offset="1" stop-color="#6ffca1"/></linearGradient><linearGradient id="f12" gradientUnits="userSpaceOnUse" x1="316.0" y1="314.5" x2="284.5" y2="418.2"><stop offset="0" stop-color="#98e5ea"/><stop offset="0.25" stop-color="#91e8e7"/><stop offset="0.5" stop-color="#87eedb"/><stop offset="0.75" stop-color="#7bf4c4"/><stop offset="1" stop-color="#6dfba3"/></linearGradient><linearGradient id="f13" gradientUnits="userSpaceOnUse" x1="316.0" y1="314.5" x2="284.5" y2="418.2"><stop offset="0" stop-color="#98e4eb"/><stop offset="0.25" stop-color="#91e8e8"/><stop offset="0.5" stop-color="#87eddc"/><stop offset="0.75" stop-color="#7af4c6"/><stop offset="1" stop-color="#6cfba4"/></linearGradient><linearGradient id="f14" gradientUnits="userSpaceOnUse" x1="316.0" y1="314.5" x2="284.5" y2="418.2"><stop offset="0" stop-color="#98e4ec"/><stop offset="0.25" stop-color="#91e7e9"/><stop offset="0.5" stop-color="#86eddd"/><stop offset="0.75" stop-color="#79f3c7"/><stop offset="1" stop-color="#6afba6"/></linearGradient><linearGradient id="f15" gradientUnits="userSpaceOnUse" x1="316.0" y1="314.5" x2="284.5" y2="418.2"><stop offset="0" stop-color="#98e3ed"/><stop offset="0.25" stop-color="#91e7e9"/><stop offset="0.5" stop-color="#85ecde"/><stop offset="0.75" stop-color="#78f3c8"/><stop offset="1" stop-color="#69faa7"/></linearGradient><linearGradient id="f16" gradientUnits="userSpaceOnUse" x1="316.0" y1="314.5" x2="252.9" y2="432.5"><stop offset="0" stop-color="#98e3ee"/><stop offset="0.25" stop-color="#90e6ea"/><stop offset="0.5" stop-color="#85ecdf"/><stop offset="0.75" stop-color="#77f2c9"/><stop offset="1" stop-color="#67faa9"/></linearGradient><linearGradient id="f17" gradientUnits="userSpaceOnUse" x1="316.0" y1="314.5" x2="252.9" y2="432.5"><stop offset="0" stop-color="#98e2ee"/><stop offset="0.25" stop-color="#90e6eb"/><stop offset="0.5" stop-color="#84ebe0"/><stop offset="0.75" stop-color="#76f2ca"/><stop offset="1" stop-color="#66f9aa"/></linearGradient><linearGradient id="f18" gradientUnits="userSpaceOnUse" x1="316.0" y1="314.5" x2="252.9" y2="432.5"><stop offset="0" stop-color="#98e2ef"/><stop offset="0.25" stop-color="#90e5ec"/><stop offset="0.5" stop-color="#84ebe1"/><stop offset="0.75" stop-color="#75f2cb"/><stop offset="1" stop-color="#64f9ac"/></linearGradient><linearGradient id="f19" gradientUnits="userSpaceOnUse" x1="316.0" y1="314.5" x2="252.9" y2="432.5"><stop offset="0" stop-color="#98e1f0"/><stop offset="0.25" stop-color="#90e5ed"/><stop offset="0.5" stop-color="#83eae2"/><stop offset="0.75" stop-color="#74f1cd"/><stop offset="1" stop-color="#63f9ad"/></linearGradient><linearGradient id="f20" gradientUnits="userSpaceOnUse" x1="316.0" y1="314.5" x2="252.9" y2="432.5"><stop offset="0" stop-color="#98e1f1"/><stop offset="0.25" stop-color="#90e4ee"/><stop offset="0.5" stop-color="#83eae2"/><stop offset="0.75" stop-color="#73f1ce"/><stop offset="1" stop-color="#61f8af"/></linearGradient><linearGradient id="f21" gradientUnits="userSpaceOnUse" x1="316.0" y1="314.5" x2="252.9" y2="432.5"><stop offset="0" stop-color="#98e0f2"/><stop offset="0.25" stop-color="#8fe4ef"/><stop offset="0.5" stop-color="#82e9e3"/><stop offset="0.75" stop-color="#72f0cf"/><stop offset="1" stop-color="#60f8b0"/></linearGradient><linearGradient id="f22" gradientUnits="userSpaceOnUse" x1="316.0" y1="314.5" x2="252.9" y2="432.5"><stop offset="0" stop-color="#98e0f2"/><stop offset="0.25" stop-color="#8fe3ef"/><stop offset="0.5" stop-color="#81e9e4"/><stop offset="0.75" stop-color="#71efd0"/><stop offset="1" stop-color="#5ef7b2"/></linearGradient><linearGradient id="f23" gradientUnits="userSpaceOnUse" x1="316.0" y1="314.5" x2="252.9" y2="432.5"><stop offset="0" stop-color="#98dff3"/><stop offset="0.25" stop-color="#8fe3f0"/><stop offset="0.5" stop-color="#81e8e5"/><stop offset="0.75" stop-color="#70eed1"/><stop offset="1" stop-color="#5df6b3"/></linearGradient><linearGradient id="f24" gradientUnits="userSpaceOnUse" x1="316.0" y1="314.5" x2="214.0" y2="438.8"><stop offset="0" stop-color="#98dff4"/><stop offset="0.25" stop-color="#8fe2f1"/><stop offset="0.5" stop-color="#80e7e6"/><stop offset="0.75" stop-color="#6fedd2"/><stop offset="1" stop-color="#5bf4b5"/></linearGradient><linearGradient id="f25" gradientUnits="userSpaceOnUse" x1="316.0" y1="314.5" x2="214.0" y2="438.8"><stop offset="0" stop-color="#98def5"/><stop offset="0.25" stop-color="#8ee2f2"/><stop offset="0.5" stop-color="#80e7e7"/><stop offset="0.75" stop-color="#6eedd4"/><stop offset="1" stop-color="#5af3b6"/></linearGradient><linearGradient id="f26" gradientUnits="userSpaceOnUse" x1="316.0" y1="314.5" x2="214.0" y2="438.8"><stop offset="0" stop-color="#98def5"/><stop offset="0.25" stop-color="#8ee1f3"/><stop offset="0.5" stop-color="#7fe6e8"/><stop offset="0.75" stop-color="#6decd5"/><stop offset="1" stop-color="#58f2b8"/></linearGradient><linearGradient id="f27" gradientUnits="userSpaceOnUse" x1="316.0" y1="314.5" x2="214.0" y2="438.8"><stop offset="0" stop-color="#98ddf6"/><stop offset="0.25" stop-color="#8ee0f3"/><stop offset="0.5" stop-color="#7ee5e9"/><stop offset="0.75" stop-color="#6cebd6"/><stop offset="1" stop-color="#57f1b9"/></linearGradient><linearGradient id="f28" gradientUnits="userSpaceOnUse" x1="316.0" y1="314.5" x2="214.0" y2="438.8"><stop offset="0" stop-color="#98ddf7"/><stop offset="0.25" stop-color="#8ee0f4"/><stop offset="0.5" stop-color="#7ee4ea"/><stop offset="0.75" stop-color="#6bead7"/><stop offset="1" stop-color="#55f0bb"/></linearGradient><linearGradient id="f29" gradientUnits="userSpaceOnUse" x1="316.0" y1="314.5" x2="214.0" y2="438.8"><stop offset="0" stop-color="#98dcf8"/><stop offset="0.25" stop-color="#8ddff5"/><stop offset="0.5" stop-color="#7de4eb"/><stop offset="0.75" stop-color="#6ae9d8"/><stop offset="1" stop-color="#54efbc"/></linearGradient><linearGradient id="f30" gradientUnits="userSpaceOnUse" x1="316.0" y1="314.5" x2="214.0" y2="438.8"><stop offset="0" stop-color="#98dcf8"/><stop offset="0.25" stop-color="#8ddff6"/><stop offset="0.5" stop-color="#7de3ec"/><stop offset="0.75" stop-color="#69e8d9"/><stop offset="1" stop-color="#52eebe"/></linearGradient><linearGradient id="f31" gradientUnits="userSpaceOnUse" x1="316.0" y1="314.5" x2="214.0" y2="438.8"><stop offset="0" stop-color="#98dcf9"/><stop offset="0.25" stop-color="#8ddef6"/><stop offset="0.5" stop-color="#7ce2ed"/><stop offset="0.75" stop-color="#68e7da"/><stop offset="1" stop-color="#51edbf"/></linearGradient><linearGradient id="f32" gradientUnits="userSpaceOnUse" x1="316.0" y1="314.5" x2="170.4" y2="434.0"><stop offset="0" stop-color="#98dbfa"/><stop offset="0.25" stop-color="#8ddef7"/><stop offset="0.5" stop-color="#7be2ed"/><stop offset="0.75" stop-color="#67e6db"/><stop offset="1" stop-color="#4febc0"/></linearGradient><linearGradient id="f33" gradientUnits="userSpaceOnUse" x1="316.0" y1="314.5" x2="170.4" y2="434.0"><stop offset="0" stop-color="#98dbfb"/><stop offset="0.25" stop-color="#8dddf8"/><stop offset="0.5" stop-color="#7be1ee"/><stop offset="0.75" stop-color="#66e5dc"/><stop offset="1" stop-color="#4eeac1"/></linearGradient><linearGradient id="f34" gradientUnits="userSpaceOnUse" x1="316.0" y1="314.5" x2="170.4" y2="434.0"><stop offset="0" stop-color="#98dafb"/><stop offset="0.25" stop-color="#8cdcf9"/><stop offset="0.5" stop-color="#7ae0ef"/><stop offset="0.75" stop-color="#65e4dd"/><stop offset="1" stop-color="#4ce9c2"/></linearGradient><linearGradient id="f35" gradientUnits="userSpaceOnUse" x1="316.0" y1="314.5" x2="170.4" y2="434.0"><stop offset="0" stop-color="#98dafc"/><stop offset="0.25" stop-color="#8cdcf9"/><stop offset="0.5" stop-color="#7adff0"/><stop offset="0.75" stop-color="#64e3de"/><stop offset="1" stop-color="#4be8c3"/></linearGradient><linearGradient id="f36" gradientUnits="userSpaceOnUse" x1="316.0" y1="314.5" x2="170.4" y2="434.0"><stop offset="0" stop-color="#98d9fd"/><stop offset="0.25" stop-color="#8cdbfa"/><stop offset="0.5" stop-color="#79dff0"/><stop offset="0.75" stop-color="#63e3de"/><stop offset="1" stop-color="#49e7c3"/></linearGradient><linearGradient id="f37" gradientUnits="userSpaceOnUse" x1="316.0" y1="314.5" x2="170.4" y2="434.0"><stop offset="0" stop-color="#98d9fe"/><stop offset="0.25" stop-color="#8cdbfb"/><stop offset="0.5" stop-color="#79def1"/><stop offset="0.75" stop-color="#62e2df"/><stop offset="1" stop-color="#48e6c4"/></linearGradient><linearGradient id="f38" gradientUnits="userSpaceOnUse" x1="316.0" y1="314.5" x2="170.4" y2="434.0"><stop offset="0" stop-color="#98d8fe"/><stop offset="0.25" stop-color="#8bdafc"/><stop offset="0.5" stop-color="#78ddf2"/><stop offset="0.75" stop-color="#61e1e0"/><stop offset="1" stop-color="#46e5c5"/></linearGradient><linearGradient id="f39" gradientUnits="userSpaceOnUse" x1="316.0" y1="314.5" x2="170.4" y2="434.0"><stop offset="0" stop-color="#98d8ff"/><stop offset="0.25" stop-color="#8bdafc"/><stop offset="0.5" stop-color="#77ddf3"/><stop offset="0.75" stop-color="#60e0e1"/><stop offset="1" stop-color="#45e4c6"/></linearGradient><linearGradient id="f40" gradientUnits="userSpaceOnUse" x1="316.0" y1="314.5" x2="126.1" y2="416.0"><stop offset="0" stop-color="#98d7ff"/><stop offset="0.25" stop-color="#8bd8fc"/><stop offset="0.5" stop-color="#77dbf3"/><stop offset="0.75" stop-color="#5edfe1"/><stop offset="1" stop-color="#43e2c6"/></linearGradient><linearGradient id="f41" gradientUnits="userSpaceOnUse" x1="316.0" y1="314.5" x2="126.1" y2="416.0"><stop offset="0" stop-color="#98d5ff"/><stop offset="0.25" stop-color="#8ad7fc"/><stop offset="0.5" stop-color="#76daf3"/><stop offset="0.75" stop-color="#5ddde1"/><stop offset="1" stop-color="#42e1c7"/></linearGradient><linearGradient id="f42" gradientUnits="userSpaceOnUse" x1="316.0" y1="314.5" x2="126.1" y2="416.0"><stop offset="0" stop-color="#98d4ff"/><stop offset="0.25" stop-color="#8ad6fc"/><stop offset="0.5" stop-color="#75d9f3"/><stop offset="0.75" stop-color="#5cdce2"/><stop offset="1" stop-color="#40e0c8"/></linearGradient><linearGradient id="f43" gradientUnits="userSpaceOnUse" x1="316.0" y1="314.5" x2="126.1" y2="416.0"><stop offset="0" stop-color="#97d3ff"/><stop offset="0.25" stop-color="#8ad4fc"/><stop offset="0.5" stop-color="#74d7f3"/><stop offset="0.75" stop-color="#5bdbe2"/><stop offset="1" stop-color="#3edfc8"/></linearGradient><linearGradient id="f44" gradientUnits="userSpaceOnUse" x1="316.0" y1="314.5" x2="126.1" y2="416.0"><stop offset="0" stop-color="#97d1ff"/><stop offset="0.25" stop-color="#89d3fc"/><stop offset="0.5" stop-color="#73d6f3"/><stop offset="0.75" stop-color="#59d9e2"/><stop offset="1" stop-color="#3cddc8"/></linearGradient><linearGradient id="f45" gradientUnits="userSpaceOnUse" x1="316.0" y1="314.5" x2="126.1" y2="416.0"><stop offset="0" stop-color="#97d0ff"/><stop offset="0.25" stop-color="#89d2fc"/><stop offset="0.5" stop-color="#72d5f3"/><stop offset="0.75" stop-color="#58d8e2"/><stop offset="1" stop-color="#3adcc8"/></linearGradient><linearGradient id="f46" gradientUnits="userSpaceOnUse" x1="316.0" y1="314.5" x2="126.1" y2="416.0"><stop offset="0" stop-color="#97cfff"/><stop offset="0.25" stop-color="#88d0fc"/><stop offset="0.5" stop-color="#71d3f3"/><stop offset="0.75" stop-color="#56d7e2"/><stop offset="1" stop-color="#37dac8"/></linearGradient><linearGradient id="f47" gradientUnits="userSpaceOnUse" x1="316.0" y1="314.5" x2="126.1" y2="416.0"><stop offset="0" stop-color="#97cdff"/><stop offset="0.25" stop-color="#88cffc"/><stop offset="0.5" stop-color="#70d2f3"/><stop offset="0.75" stop-color="#55d5e2"/><stop offset="1" stop-color="#35d9c8"/></linearGradient><linearGradient id="f48" gradientUnits="userSpaceOnUse" x1="316.0" y1="314.5" x2="85.6" y2="384.4"><stop offset="0" stop-color="#97ccff"/><stop offset="0.25" stop-color="#87cefc"/><stop offset="0.5" stop-color="#70d1f3"/><stop offset="0.75" stop-color="#53d4e2"/><stop offset="1" stop-color="#33d7c8"/></linearGradient><linearGradient id="f49" gradientUnits="userSpaceOnUse" x1="316.0" y1="314.5" x2="85.6" y2="384.4"><stop offset="0" stop-color="#97cbff"/><stop offset="0.25" stop-color="#87ccfc"/><stop offset="0.5" stop-color="#6fcff3"/><stop offset="0.75" stop-color="#51d2e2"/><stop offset="1" stop-color="#31d6c8"/></linearGradient><linearGradient id="f50" gradientUnits="userSpaceOnUse" x1="316.0" y1="314.5" x2="85.6" y2="384.4"><stop offset="0" stop-color="#96c9ff"/><stop offset="0.25" stop-color="#86cbfc"/><stop offset="0.5" stop-color="#6ecef3"/><stop offset="0.75" stop-color="#50d1e2"/><stop offset="1" stop-color="#2ed4c8"/></linearGradient><linearGradient id="f51" gradientUnits="userSpaceOnUse" x1="316.0" y1="314.5" x2="85.6" y2="384.4"><stop offset="0" stop-color="#96c8ff"/><stop offset="0.25" stop-color="#86cafc"/><stop offset="0.5" stop-color="#6dccf3"/><stop offset="0.75" stop-color="#4ecfe2"/><stop offset="1" stop-color="#2cd3c8"/></linearGradient><linearGradient id="f52" gradientUnits="userSpaceOnUse" x1="316.0" y1="314.5" x2="85.6" y2="384.4"><stop offset="0" stop-color="#96c7ff"/><stop offset="0.25" stop-color="#85c8fc"/><stop offset="0.5" stop-color="#6ccbf3"/><stop offset="0.75" stop-color="#4dcee2"/><stop offset="1" stop-color="#2ad1c8"/></linearGradient><linearGradient id="f53" gradientUnits="userSpaceOnUse" x1="316.0" y1="314.5" x2="85.6" y2="384.4"><stop offset="0" stop-color="#96c6ff"/><stop offset="0.25" stop-color="#85c7fc"/><stop offset="0.5" stop-color="#6bcaf3"/><stop offset="0.75" stop-color="#4bcce2"/><stop offset="1" stop-color="#28d0c8"/></linearGradient><linearGradient id="f54" gradientUnits="userSpaceOnUse" x1="316.0" y1="314.5" x2="85.6" y2="384.4"><stop offset="0" stop-color="#96c4ff"/><stop offset="0.25" stop-color="#85c6fc"/><stop offset="0.5" stop-color="#6ac8f3"/><stop offset="0.75" stop-color="#4acbe2"/><stop offset="1" stop-color="#25cec8"/></linearGradient><linearGradient id="f55" gradientUnits="userSpaceOnUse" x1="316.0" y1="314.5" x2="85.6" y2="384.4"><stop offset="0" stop-color="#96c3ff"/><stop offset="0.25" stop-color="#84c5fc"/><stop offset="0.5" stop-color="#69c7f3"/><stop offset="0.75" stop-color="#48cae2"/><stop offset="1" stop-color="#23cdc8"/></linearGradient><linearGradient id="f56" gradientUnits="userSpaceOnUse" x1="316.0" y1="314.5" x2="53.7" y2="340.3"><stop offset="0" stop-color="#96c2ff"/><stop offset="0.25" stop-color="#84c3fc"/><stop offset="0.5" stop-color="#68c6f3"/><stop offset="0.75" stop-color="#46c8e2"/><stop offset="1" stop-color="#21cbc8"/></linearGradient><linearGradient id="f57" gradientUnits="userSpaceOnUse" x1="316.0" y1="314.5" x2="53.7" y2="340.3"><stop offset="0" stop-color="#95c1ff"/><stop offset="0.25" stop-color="#83c2fc"/><stop offset="0.5" stop-color="#67c4f3"/><stop offset="0.75" stop-color="#45c7e2"/><stop offset="1" stop-color="#1fcac8"/></linearGradient><linearGradient id="f58" gradientUnits="userSpaceOnUse" x1="316.0" y1="314.5" x2="53.7" y2="340.3"><stop offset="0" stop-color="#95bfff"/><stop offset="0.25" stop-color="#83c1fc"/><stop offset="0.5" stop-color="#66c3f3"/><stop offset="0.75" stop-color="#43c5e2"/><stop offset="1" stop-color="#1cc8c8"/></linearGradient><linearGradient id="f59" gradientUnits="userSpaceOnUse" x1="316.0" y1="314.5" x2="53.7" y2="340.3"><stop offset="0" stop-color="#95beff"/><stop offset="0.25" stop-color="#82bffc"/><stop offset="0.5" stop-color="#65c1f3"/><stop offset="0.75" stop-color="#42c4e2"/><stop offset="1" stop-color="#1ac7c8"/></linearGradient><linearGradient id="f60" gradientUnits="userSpaceOnUse" x1="316.0" y1="314.5" x2="53.7" y2="340.3"><stop offset="0" stop-color="#95bdff"/><stop offset="0.25" stop-color="#82befc"/><stop offset="0.5" stop-color="#64c0f3"/><stop offset="0.75" stop-color="#40c2e2"/><stop offset="1" stop-color="#18c5c8"/></linearGradient><linearGradient id="f61" gradientUnits="userSpaceOnUse" x1="316.0" y1="314.5" x2="53.7" y2="340.3"><stop offset="0" stop-color="#95bbff"/><stop offset="0.25" stop-color="#81bdfc"/><stop offset="0.5" stop-color="#63bff3"/><stop offset="0.75" stop-color="#3fc1e2"/><stop offset="1" stop-color="#16c4c8"/></linearGradient><linearGradient id="f62" gradientUnits="userSpaceOnUse" x1="316.0" y1="314.5" x2="53.7" y2="340.3"><stop offset="0" stop-color="#95baff"/><stop offset="0.25" stop-color="#81bbfc"/><stop offset="0.5" stop-color="#62bdf3"/><stop offset="0.75" stop-color="#3dc0e2"/><stop offset="1" stop-color="#13c2c8"/></linearGradient><linearGradient id="f63" gradientUnits="userSpaceOnUse" x1="316.0" y1="314.5" x2="53.7" y2="340.3"><stop offset="0" stop-color="#95b9ff"/><stop offset="0.25" stop-color="#80bafc"/><stop offset="0.5" stop-color="#61bcf3"/><stop offset="0.75" stop-color="#3bbee2"/><stop offset="1" stop-color="#11c1c8"/></linearGradient><linearGradient id="f64" gradientUnits="userSpaceOnUse" x1="316.0" y1="314.5" x2="34.4" y2="286.8"><stop offset="0" stop-color="#94b8ff"/><stop offset="0.25" stop-color="#80b9fc"/><stop offset="0.5" stop-color="#61baf3"/><stop offset="0.75" stop-color="#3cbde2"/><stop offset="1" stop-color="#11bfc8"/></linearGradient><linearGradient id="f65" gradientUnits="userSpaceOnUse" x1="316.0" y1="314.5" x2="34.4" y2="286.8"><stop offset="0" stop-color="#94b6ff"/><stop offset="0.25" stop-color="#81b7fc"/><stop offset="0.5" stop-color="#62b9f3"/><stop offset="0.75" stop-color="#3ebbe2"/><stop offset="1" stop-color="#14bdc9"/></linearGradient><linearGradient id="f66" gradientUnits="userSpaceOnUse" x1="316.0" y1="314.5" x2="34.4" y2="286.8"><stop offset="0" stop-color="#94b5ff"/><stop offset="0.25" stop-color="#81b6fc"/><stop offset="0.5" stop-color="#63b7f3"/><stop offset="0.75" stop-color="#40b9e3"/><stop offset="1" stop-color="#17baca"/></linearGradient><linearGradient id="f67" gradientUnits="userSpaceOnUse" x1="316.0" y1="314.5" x2="34.4" y2="286.8"><stop offset="0" stop-color="#94b4ff"/><stop offset="0.25" stop-color="#81b4fd"/><stop offset="0.5" stop-color="#64b5f4"/><stop offset="0.75" stop-color="#42b7e3"/><stop offset="1" stop-color="#1ab8cb"/></linearGradient><linearGradient id="f68" gradientUnits="userSpaceOnUse" x1="316.0" y1="314.5" x2="34.4" y2="286.8"><stop offset="0" stop-color="#94b3ff"/><stop offset="0.25" stop-color="#82b3fd"/><stop offset="0.5" stop-color="#65b4f4"/><stop offset="0.75" stop-color="#44b5e4"/><stop offset="1" stop-color="#1eb6cb"/></linearGradient><linearGradient id="f69" gradientUnits="userSpaceOnUse" x1="316.0" y1="314.5" x2="34.4" y2="286.8"><stop offset="0" stop-color="#94b1ff"/><stop offset="0.25" stop-color="#82b2fd"/><stop offset="0.5" stop-color="#67b2f4"/><stop offset="0.75" stop-color="#46b3e4"/><stop offset="1" stop-color="#21b4cc"/></linearGradient><linearGradient id="f70" gradientUnits="userSpaceOnUse" x1="316.0" y1="314.5" x2="34.4" y2="286.8"><stop offset="0" stop-color="#94b0ff"/><stop offset="0.25" stop-color="#82b0fd"/><stop offset="0.5" stop-color="#68b1f4"/><stop offset="0.75" stop-color="#48b1e4"/><stop offset="1" stop-color="#24b1cd"/></linearGradient><linearGradient id="f71" gradientUnits="userSpaceOnUse" x1="316.0" y1="314.5" x2="34.4" y2="286.8"><stop offset="0" stop-color="#93afff"/><stop offset="0.25" stop-color="#83affd"/><stop offset="0.5" stop-color="#69aff4"/><stop offset="0.75" stop-color="#4aafe5"/><stop offset="1" stop-color="#27afce"/></linearGradient><linearGradient id="f72" gradientUnits="userSpaceOnUse" x1="316.0" y1="314.5" x2="30.6" y2="227.9"><stop offset="0" stop-color="#93aeff"/><stop offset="0.25" stop-color="#83adfd"/><stop offset="0.5" stop-color="#6aadf4"/><stop offset="0.75" stop-color="#4cade5"/><stop offset="1" stop-color="#29adce"/></linearGradient><linearGradient id="f73" gradientUnits="userSpaceOnUse" x1="316.0" y1="314.5" x2="30.6" y2="227.9"><stop offset="0" stop-color="#93acff"/><stop offset="0.25" stop-color="#83acfd"/><stop offset="0.5" stop-color="#6bacf5"/><stop offset="0.75" stop-color="#4eabe6"/><stop offset="1" stop-color="#2cabcf"/></linearGradient><linearGradient id="f74" gradientUnits="userSpaceOnUse" x1="316.0" y1="314.5" x2="30.6" y2="227.9"><stop offset="0" stop-color="#93abff"/><stop offset="0.25" stop-color="#84abfd"/><stop offset="0.5" stop-color="#6caaf5"/><stop offset="0.75" stop-color="#50a9e6"/><stop offset="1" stop-color="#2fa8d0"/></linearGradient><linearGradient id="f75" gradientUnits="userSpaceOnUse" x1="316.0" y1="314.5" x2="30.6" y2="227.9"><stop offset="0" stop-color="#93aaff"/><stop offset="0.25" stop-color="#84a9fd"/><stop offset="0.5" stop-color="#6ca8f5"/><stop offset="0.75" stop-color="#50a6e6"/><stop offset="1" stop-color="#31a5d0"/></linearGradient><linearGradient id="f76" gradientUnits="userSpaceOnUse" x1="316.0" y1="314.5" x2="30.6" y2="227.9"><stop offset="0" stop-color="#93a8ff"/><stop offset="0.25" stop-color="#84a7fd"/><stop offset="0.5" stop-color="#6da5f5"/><stop offset="0.75" stop-color="#51a3e6"/><stop offset="1" stop-color="#32a0d0"/></linearGradient><linearGradient id="f77" gradientUnits="userSpaceOnUse" x1="316.0" y1="314.5" x2="30.6" y2="227.9"><stop offset="0" stop-color="#93a7ff"/><stop offset="0.25" stop-color="#84a6fd"/><stop offset="0.5" stop-color="#6da3f5"/><stop offset="0.75" stop-color="#52a0e6"/><stop offset="1" stop-color="#339cd0"/></linearGradient><linearGradient id="f78" gradientUnits="userSpaceOnUse" x1="316.0" y1="314.5" x2="30.6" y2="227.9"><stop offset="0" stop-color="#92a6ff"/><stop offset="0.25" stop-color="#84a4fd"/><stop offset="0.5" stop-color="#6ea1f5"/><stop offset="0.75" stop-color="#539de6"/><stop offset="1" stop-color="#3498d0"/></linearGradient><linearGradient id="f79" gradientUnits="userSpaceOnUse" x1="316.0" y1="314.5" x2="30.6" y2="227.9"><stop offset="0" stop-color="#92a5ff"/><stop offset="0.25" stop-color="#84a2fd"/><stop offset="0.5" stop-color="#6e9ef5"/><stop offset="0.75" stop-color="#5399e6"/><stop offset="1" stop-color="#3594d0"/></linearGradient><linearGradient id="f80" gradientUnits="userSpaceOnUse" x1="316.0" y1="314.5" x2="43.8" y2="169.0"><stop offset="0" stop-color="#92a3ff"/><stop offset="0.25" stop-color="#84a0fd"/><stop offset="0.5" stop-color="#6e9cf5"/><stop offset="0.75" stop-color="#5496e6"/><stop offset="1" stop-color="#3790d0"/></linearGradient><linearGradient id="f81" gradientUnits="userSpaceOnUse" x1="316.0" y1="314.5" x2="43.8" y2="169.0"><stop offset="0" stop-color="#92a2ff"/><stop offset="0.25" stop-color="#849ffd"/><stop offset="0.5" stop-color="#6f99f5"/><stop offset="0.75" stop-color="#5593e6"/><stop offset="1" stop-color="#388cd0"/></linearGradient><linearGradient id="f82" gradientUnits="userSpaceOnUse" x1="316.0" y1="314.5" x2="43.8" y2="169.0"><stop offset="0" stop-color="#92a1ff"/><stop offset="0.25" stop-color="#849dfd"/><stop offset="0.5" stop-color="#6f97f5"/><stop offset="0.75" stop-color="#5590e6"/><stop offset="1" stop-color="#3988d0"/></linearGradient><linearGradient id="f83" gradientUnits="userSpaceOnUse" x1="316.0" y1="314.5" x2="43.8" y2="169.0"><stop offset="0" stop-color="#92a0ff"/><stop offset="0.25" stop-color="#849bfd"/><stop offset="0.5" stop-color="#6f95f5"/><stop offset="0.75" stop-color="#568de6"/><stop offset="1" stop-color="#3a84d0"/></linearGradient><linearGradient id="f84" gradientUnits="userSpaceOnUse" x1="316.0" y1="314.5" x2="43.8" y2="169.0"><stop offset="0" stop-color="#929eff"/><stop offset="0.25" stop-color="#849afd"/><stop offset="0.5" stop-color="#7092f5"/><stop offset="0.75" stop-color="#5789e6"/><stop offset="1" stop-color="#3b7fd0"/></linearGradient><linearGradient id="f85" gradientUnits="userSpaceOnUse" x1="316.0" y1="314.5" x2="43.8" y2="169.0"><stop offset="0" stop-color="#919dff"/><stop offset="0.25" stop-color="#8498fd"/><stop offset="0.5" stop-color="#7090f5"/><stop offset="0.75" stop-color="#5886e6"/><stop offset="1" stop-color="#3c7bd0"/></linearGradient><linearGradient id="f86" gradientUnits="userSpaceOnUse" x1="316.0" y1="314.5" x2="43.8" y2="169.0"><stop offset="0" stop-color="#919cff"/><stop offset="0.25" stop-color="#8596fd"/><stop offset="0.5" stop-color="#718ef5"/><stop offset="0.75" stop-color="#5983e6"/><stop offset="1" stop-color="#3e77d0"/></linearGradient><linearGradient id="f87" gradientUnits="userSpaceOnUse" x1="316.0" y1="314.5" x2="43.8" y2="169.0"><stop offset="0" stop-color="#919bff"/><stop offset="0.25" stop-color="#8595fd"/><stop offset="0.5" stop-color="#718bf5"/><stop offset="0.75" stop-color="#5a80e6"/><stop offset="1" stop-color="#4073d0"/></linearGradient><linearGradient id="f88" gradientUnits="userSpaceOnUse" x1="316.0" y1="314.5" x2="73.3" y2="115.3"><stop offset="0" stop-color="#9199ff"/><stop offset="0.25" stop-color="#8593fd"/><stop offset="0.5" stop-color="#7289f5"/><stop offset="0.75" stop-color="#5b7de6"/><stop offset="1" stop-color="#426fd0"/></linearGradient><linearGradient id="f89" gradientUnits="userSpaceOnUse" x1="316.0" y1="314.5" x2="73.3" y2="115.3"><stop offset="0" stop-color="#9198ff"/><stop offset="0.25" stop-color="#8591fd"/><stop offset="0.5" stop-color="#7386f5"/><stop offset="0.75" stop-color="#5d79e6"/><stop offset="1" stop-color="#446bd0"/></linearGradient><linearGradient id="f90" gradientUnits="userSpaceOnUse" x1="316.0" y1="314.5" x2="73.3" y2="115.3"><stop offset="0" stop-color="#9197ff"/><stop offset="0.25" stop-color="#8590fd"/><stop offset="0.5" stop-color="#7384f5"/><stop offset="0.75" stop-color="#5e76e6"/><stop offset="1" stop-color="#4667d0"/></linearGradient><linearGradient id="f91" gradientUnits="userSpaceOnUse" x1="316.0" y1="314.5" x2="73.3" y2="115.3"><stop offset="0" stop-color="#9196ff"/><stop offset="0.25" stop-color="#858efd"/><stop offset="0.5" stop-color="#7482f5"/><stop offset="0.75" stop-color="#5f73e6"/><stop offset="1" stop-color="#4863d0"/></linearGradient><linearGradient id="f92" gradientUnits="userSpaceOnUse" x1="316.0" y1="314.5" x2="73.3" y2="115.3"><stop offset="0" stop-color="#9094ff"/><stop offset="0.25" stop-color="#868cfd"/><stop offset="0.5" stop-color="#757ff5"/><stop offset="0.75" stop-color="#6070e6"/><stop offset="1" stop-color="#495ed0"/></linearGradient><linearGradient id="f93" gradientUnits="userSpaceOnUse" x1="316.0" y1="314.5" x2="73.3" y2="115.3"><stop offset="0" stop-color="#9093ff"/><stop offset="0.25" stop-color="#868afd"/><stop offset="0.5" stop-color="#757df5"/><stop offset="0.75" stop-color="#626de6"/><stop offset="1" stop-color="#4b5ad0"/></linearGradient><linearGradient id="f94" gradientUnits="userSpaceOnUse" x1="316.0" y1="314.5" x2="73.3" y2="115.3"><stop offset="0" stop-color="#9092ff"/><stop offset="0.25" stop-color="#8689fd"/><stop offset="0.5" stop-color="#767bf5"/><stop offset="0.75" stop-color="#6369e6"/><stop offset="1" stop-color="#4d56d0"/></linearGradient><linearGradient id="f95" gradientUnits="userSpaceOnUse" x1="316.0" y1="314.5" x2="73.3" y2="115.3"><stop offset="0" stop-color="#9091ff"/><stop offset="0.25" stop-color="#8687fd"/><stop offset="0.5" stop-color="#7778f5"/><stop offset="0.75" stop-color="#6466e6"/><stop offset="1" stop-color="#4f52d0"/></linearGradient><linearGradient id="f96" gradientUnits="userSpaceOnUse" x1="316.0" y1="314.5" x2="116.9" y2="71.8"><stop offset="0" stop-color="#9090ff"/><stop offset="0.25" stop-color="#8786fd"/><stop offset="0.5" stop-color="#7876f5"/><stop offset="0.75" stop-color="#6664e6"/><stop offset="1" stop-color="#524fd0"/></linearGradient><linearGradient id="f97" gradientUnits="userSpaceOnUse" x1="316.0" y1="314.5" x2="116.9" y2="71.8"><stop offset="0" stop-color="#9290ff"/><stop offset="0.25" stop-color="#8886fc"/><stop offset="0.5" stop-color="#7a76f4"/><stop offset="0.75" stop-color="#6962e6"/><stop offset="1" stop-color="#564dd0"/></linearGradient><linearGradient id="f98" gradientUnits="userSpaceOnUse" x1="316.0" y1="314.5" x2="116.9" y2="71.8"><stop offset="0" stop-color="#9390fe"/><stop offset="0.25" stop-color="#8a85fc"/><stop offset="0.5" stop-color="#7c75f4"/><stop offset="0.75" stop-color="#6c61e6"/><stop offset="1" stop-color="#594ad0"/></linearGradient><linearGradient id="f99" gradientUnits="userSpaceOnUse" x1="316.0" y1="314.5" x2="116.9" y2="71.8"><stop offset="0" stop-color="#9490fe"/><stop offset="0.25" stop-color="#8b85fc"/><stop offset="0.5" stop-color="#7e74f4"/><stop offset="0.75" stop-color="#6f5fe6"/><stop offset="1" stop-color="#5d48d0"/></linearGradient><linearGradient id="f100" gradientUnits="userSpaceOnUse" x1="316.0" y1="314.5" x2="116.9" y2="71.8"><stop offset="0" stop-color="#9590fe"/><stop offset="0.25" stop-color="#8d85fc"/><stop offset="0.5" stop-color="#8073f4"/><stop offset="0.75" stop-color="#725ee6"/><stop offset="1" stop-color="#6146d0"/></linearGradient><linearGradient id="f101" gradientUnits="userSpaceOnUse" x1="316.0" y1="314.5" x2="116.9" y2="71.8"><stop offset="0" stop-color="#9690fe"/><stop offset="0.25" stop-color="#8e84fb"/><stop offset="0.5" stop-color="#8372f4"/><stop offset="0.75" stop-color="#755ce5"/><stop offset="1" stop-color="#6544d0"/></linearGradient><linearGradient id="f102" gradientUnits="userSpaceOnUse" x1="316.0" y1="314.5" x2="116.9" y2="71.8"><stop offset="0" stop-color="#9790fd"/><stop offset="0.25" stop-color="#9084fb"/><stop offset="0.5" stop-color="#8571f3"/><stop offset="0.75" stop-color="#775be5"/><stop offset="1" stop-color="#6841d0"/></linearGradient><linearGradient id="f103" gradientUnits="userSpaceOnUse" x1="316.0" y1="314.5" x2="116.9" y2="71.8"><stop offset="0" stop-color="#9890fd"/><stop offset="0.25" stop-color="#9184fb"/><stop offset="0.5" stop-color="#8770f3"/><stop offset="0.75" stop-color="#7a59e5"/><stop offset="1" stop-color="#6c3fd0"/></linearGradient><linearGradient id="f104" gradientUnits="userSpaceOnUse" x1="316.0" y1="314.5" x2="170.6" y2="42.5"><stop offset="0" stop-color="#9990fd"/><stop offset="0.25" stop-color="#9383fb"/><stop offset="0.5" stop-color="#896ff3"/><stop offset="0.75" stop-color="#7d58e5"/><stop offset="1" stop-color="#703dd0"/></linearGradient><linearGradient id="f105" gradientUnits="userSpaceOnUse" x1="316.0" y1="314.5" x2="170.6" y2="42.5"><stop offset="0" stop-color="#9a90fd"/><stop offset="0.25" stop-color="#9483fa"/><stop offset="0.5" stop-color="#8b6ff3"/><stop offset="0.75" stop-color="#8056e5"/><stop offset="1" stop-color="#743bd0"/></linearGradient><linearGradient id="f106" gradientUnits="userSpaceOnUse" x1="316.0" y1="314.5" x2="170.6" y2="42.5"><stop offset="0" stop-color="#9c90fc"/><stop offset="0.25" stop-color="#9683fa"/><stop offset="0.5" stop-color="#8d6ef3"/><stop offset="0.75" stop-color="#8355e5"/><stop offset="1" stop-color="#7738d0"/></linearGradient><linearGradient id="f107" gradientUnits="userSpaceOnUse" x1="316.0" y1="314.5" x2="170.6" y2="42.5"><stop offset="0" stop-color="#9d90fc"/><stop offset="0.25" stop-color="#9782fa"/><stop offset="0.5" stop-color="#8f6df2"/><stop offset="0.75" stop-color="#8553e5"/><stop offset="1" stop-color="#7a37d0"/></linearGradient><linearGradient id="f108" gradientUnits="userSpaceOnUse" x1="316.0" y1="314.5" x2="170.6" y2="42.5"><stop offset="0" stop-color="#9e90fc"/><stop offset="0.25" stop-color="#9982fa"/><stop offset="0.5" stop-color="#916cf2"/><stop offset="0.75" stop-color="#8852e5"/><stop offset="1" stop-color="#7e35d0"/></linearGradient><linearGradient id="f109" gradientUnits="userSpaceOnUse" x1="316.0" y1="314.5" x2="170.6" y2="42.5"><stop offset="0" stop-color="#9f90fc"/><stop offset="0.25" stop-color="#9a82f9"/><stop offset="0.5" stop-color="#936cf2"/><stop offset="0.75" stop-color="#8a51e4"/><stop offset="1" stop-color="#8134d0"/></linearGradient><linearGradient id="f110" gradientUnits="userSpaceOnUse" x1="316.0" y1="314.5" x2="170.6" y2="42.5"><stop offset="0" stop-color="#a090fb"/><stop offset="0.25" stop-color="#9c82f9"/><stop offset="0.5" stop-color="#956bf2"/><stop offset="0.75" stop-color="#8d50e4"/><stop offset="1" stop-color="#8432d0"/></linearGradient><linearGradient id="f111" gradientUnits="userSpaceOnUse" x1="316.0" y1="314.5" x2="170.6" y2="42.5"><stop offset="0" stop-color="#a190fb"/><stop offset="0.25" stop-color="#9d81f9"/><stop offset="0.5" stop-color="#976bf2"/><stop offset="0.75" stop-color="#8f4fe4"/><stop offset="1" stop-color="#8731d0"/></linearGradient><linearGradient id="f112" gradientUnits="userSpaceOnUse" x1="316.0" y1="314.5" x2="229.5" y2="29.4"><stop offset="0" stop-color="#a290fb"/><stop offset="0.25" stop-color="#9e81f9"/><stop offset="0.5" stop-color="#996af1"/><stop offset="0.75" stop-color="#914ee4"/><stop offset="1" stop-color="#892fd0"/></linearGradient><linearGradient id="f113" gradientUnits="userSpaceOnUse" x1="316.0" y1="314.5" x2="229.5" y2="29.4"><stop offset="0" stop-color="#a390fa"/><stop offset="0.25" stop-color="#a081f8"/><stop offset="0.5" stop-color="#9a69f1"/><stop offset="0.75" stop-color="#944de4"/><stop offset="1" stop-color="#8c2ed0"/></linearGradient><linearGradient id="f114" gradientUnits="userSpaceOnUse" x1="316.0" y1="314.5" x2="229.5" y2="29.4"><stop offset="0" stop-color="#a490fa"/><stop offset="0.25" stop-color="#a181f8"/><stop offset="0.5" stop-color="#9c69f1"/><stop offset="0.75" stop-color="#964ce4"/><stop offset="1" stop-color="#8f2cd0"/></linearGradient><linearGradient id="f115" gradientUnits="userSpaceOnUse" x1="316.0" y1="314.5" x2="229.5" y2="29.4"><stop offset="0" stop-color="#a690fa"/><stop offset="0.25" stop-color="#a380f8"/><stop offset="0.5" stop-color="#9e68f1"/><stop offset="0.75" stop-color="#994be4"/><stop offset="1" stop-color="#922bd0"/></linearGradient><linearGradient id="f116" gradientUnits="userSpaceOnUse" x1="316.0" y1="314.5" x2="229.5" y2="29.4"><stop offset="0" stop-color="#a790fa"/><stop offset="0.25" stop-color="#a480f8"/><stop offset="0.5" stop-color="#a068f1"/><stop offset="0.75" stop-color="#9b4ae4"/><stop offset="1" stop-color="#9629d0"/></linearGradient><linearGradient id="f117" gradientUnits="userSpaceOnUse" x1="316.0" y1="314.5" x2="229.5" y2="29.4"><stop offset="0" stop-color="#a890f9"/><stop offset="0.25" stop-color="#a580f7"/><stop offset="0.5" stop-color="#a267f0"/><stop offset="0.75" stop-color="#9d49e3"/><stop offset="1" stop-color="#9928d0"/></linearGradient><linearGradient id="f118" gradientUnits="userSpaceOnUse" x1="316.0" y1="314.5" x2="229.5" y2="29.4"><stop offset="0" stop-color="#a990f9"/><stop offset="0.25" stop-color="#a780f7"/><stop offset="0.5" stop-color="#a467f0"/><stop offset="0.75" stop-color="#a048e3"/><stop offset="1" stop-color="#9c26cf"/></linearGradient><linearGradient id="f119" gradientUnits="userSpaceOnUse" x1="316.0" y1="314.5" x2="229.5" y2="29.4"><stop offset="0" stop-color="#aa90f9"/><stop offset="0.25" stop-color="#a87ff7"/><stop offset="0.5" stop-color="#a666f0"/><stop offset="0.75" stop-color="#a247e2"/><stop offset="1" stop-color="#9f25ce"/></linearGradient><linearGradient id="f120" gradientUnits="userSpaceOnUse" x1="316.0" y1="314.5" x2="288.3" y2="33.3"><stop offset="0" stop-color="#ab90f9"/><stop offset="0.25" stop-color="#aa7ff7"/><stop offset="0.5" stop-color="#a765ef"/><stop offset="0.75" stop-color="#a546e2"/><stop offset="1" stop-color="#a123ce"/></linearGradient><linearGradient id="f121" gradientUnits="userSpaceOnUse" x1="316.0" y1="314.5" x2="288.3" y2="33.3"><stop offset="0" stop-color="#ac90f8"/><stop offset="0.25" stop-color="#ab7ff6"/><stop offset="0.5" stop-color="#a965ef"/><stop offset="0.75" stop-color="#a745e1"/><stop offset="1" stop-color="#a422cd"/></linearGradient><linearGradient id="f122" gradientUnits="userSpaceOnUse" x1="316.0" y1="314.5" x2="288.3" y2="33.3"><stop offset="0" stop-color="#ad90f8"/><stop offset="0.25" stop-color="#ac7ff6"/><stop offset="0.5" stop-color="#ab64ef"/><stop offset="0.75" stop-color="#a944e1"/><stop offset="1" stop-color="#a720cc"/></linearGradient><linearGradient id="f123" gradientUnits="userSpaceOnUse" x1="316.0" y1="314.5" x2="288.3" y2="33.3"><stop offset="0" stop-color="#ae90f8"/><stop offset="0.25" stop-color="#ae7ff6"/><stop offset="0.5" stop-color="#ad64ee"/><stop offset="0.75" stop-color="#ac43e0"/><stop offset="1" stop-color="#aa1fcb"/></linearGradient><linearGradient id="f124" gradientUnits="userSpaceOnUse" x1="316.0" y1="314.5" x2="288.3" y2="33.3"><stop offset="0" stop-color="#b090f8"/><stop offset="0.25" stop-color="#af7ef5"/><stop offset="0.5" stop-color="#af63ee"/><stop offset="0.75" stop-color="#ae42e0"/><stop offset="1" stop-color="#ae1dcb"/></linearGradient><linearGradient id="f125" gradientUnits="userSpaceOnUse" x1="316.0" y1="314.5" x2="288.3" y2="33.3"><stop offset="0" stop-color="#b190f7"/><stop offset="0.25" stop-color="#b17ef5"/><stop offset="0.5" stop-color="#b162ed"/><stop offset="0.75" stop-color="#b141df"/><stop offset="1" stop-color="#b11cca"/></linearGradient><linearGradient id="f126" gradientUnits="userSpaceOnUse" x1="316.0" y1="314.5" x2="288.3" y2="33.3"><stop offset="0" stop-color="#b290f7"/><stop offset="0.25" stop-color="#b27ef5"/><stop offset="0.5" stop-color="#b362ed"/><stop offset="0.75" stop-color="#b340df"/><stop offset="1" stop-color="#b41ac9"/></linearGradient><linearGradient id="f127" gradientUnits="userSpaceOnUse" x1="316.0" y1="314.5" x2="288.3" y2="33.3"><stop offset="0" stop-color="#b390f7"/><stop offset="0.25" stop-color="#b47ef5"/><stop offset="0.5" stop-color="#b461ed"/><stop offset="0.75" stop-color="#b53fde"/><stop offset="1" stop-color="#b719c8"/></linearGradient><linearGradient id="f128" gradientUnits="userSpaceOnUse" x1="316.0" y1="314.5" x2="341.8" y2="52.7"><stop offset="0" stop-color="#b490f7"/><stop offset="0.25" stop-color="#b57ef4"/><stop offset="0.5" stop-color="#b661ec"/><stop offset="0.75" stop-color="#b83fde"/><stop offset="1" stop-color="#b919c8"/></linearGradient><linearGradient id="f129" gradientUnits="userSpaceOnUse" x1="316.0" y1="314.5" x2="341.8" y2="52.7"><stop offset="0" stop-color="#b590f6"/><stop offset="0.25" stop-color="#b67ef4"/><stop offset="0.5" stop-color="#b862ec"/><stop offset="0.75" stop-color="#b940de"/><stop offset="1" stop-color="#bb1ac8"/></linearGradient><linearGradient id="f130" gradientUnits="userSpaceOnUse" x1="316.0" y1="314.5" x2="341.8" y2="52.7"><stop offset="0" stop-color="#b690f6"/><stop offset="0.25" stop-color="#b77ef4"/><stop offset="0.5" stop-color="#b962ec"/><stop offset="0.75" stop-color="#bb41de"/><stop offset="1" stop-color="#be1cc8"/></linearGradient><linearGradient id="f131" gradientUnits="userSpaceOnUse" x1="316.0" y1="314.5" x2="341.8" y2="52.7"><stop offset="0" stop-color="#b790f6"/><stop offset="0.25" stop-color="#b97ef4"/><stop offset="0.5" stop-color="#bb63ec"/><stop offset="0.75" stop-color="#bd42dd"/><stop offset="1" stop-color="#c01dc8"/></linearGradient><linearGradient id="f132" gradientUnits="userSpaceOnUse" x1="316.0" y1="314.5" x2="341.8" y2="52.7"><stop offset="0" stop-color="#b990f5"/><stop offset="0.25" stop-color="#ba7ff3"/><stop offset="0.5" stop-color="#bc64ec"/><stop offset="0.75" stop-color="#bf43dd"/><stop offset="1" stop-color="#c21fc8"/></linearGradient><linearGradient id="f133" gradientUnits="userSpaceOnUse" x1="316.0" y1="314.5" x2="341.8" y2="52.7"><stop offset="0" stop-color="#ba90f5"/><stop offset="0.25" stop-color="#bb7ff3"/><stop offset="0.5" stop-color="#be64eb"/><stop offset="0.75" stop-color="#c144dd"/><stop offset="1" stop-color="#c420c8"/></linearGradient><linearGradient id="f134" gradientUnits="userSpaceOnUse" x1="316.0" y1="314.5" x2="341.8" y2="52.7"><stop offset="0" stop-color="#bb90f5"/><stop offset="0.25" stop-color="#bd7ff3"/><stop offset="0.5" stop-color="#c065eb"/><stop offset="0.75" stop-color="#c345dd"/><stop offset="1" stop-color="#c722c8"/></linearGradient><linearGradient id="f135" gradientUnits="userSpaceOnUse" x1="316.0" y1="314.5" x2="341.8" y2="52.7"><stop offset="0" stop-color="#bc90f5"/><stop offset="0.25" stop-color="#be7ff3"/><stop offset="0.5" stop-color="#c165eb"/><stop offset="0.75" stop-color="#c546dd"/><stop offset="1" stop-color="#c923c8"/></linearGradient><linearGradient id="f136" gradientUnits="userSpaceOnUse" x1="316.0" y1="314.5" x2="385.7" y2="84.7"><stop offset="0" stop-color="#bd90f4"/><stop offset="0.25" stop-color="#bf7ff2"/><stop offset="0.5" stop-color="#c366eb"/><stop offset="0.75" stop-color="#c747dd"/><stop offset="1" stop-color="#cb25c8"/></linearGradient><linearGradient id="f137" gradientUnits="userSpaceOnUse" x1="316.0" y1="314.5" x2="385.7" y2="84.7"><stop offset="0" stop-color="#be90f4"/><stop offset="0.25" stop-color="#c180f2"/><stop offset="0.5" stop-color="#c467eb"/><stop offset="0.75" stop-color="#c948dd"/><stop offset="1" stop-color="#cd26c8"/></linearGradient><linearGradient id="f138" gradientUnits="userSpaceOnUse" x1="316.0" y1="314.5" x2="385.7" y2="84.7"><stop offset="0" stop-color="#bf90f4"/><stop offset="0.25" stop-color="#c280f2"/><stop offset="0.5" stop-color="#c667ea"/><stop offset="0.75" stop-color="#ca49dd"/><stop offset="1" stop-color="#d028c8"/></linearGradient><linearGradient id="f139" gradientUnits="userSpaceOnUse" x1="316.0" y1="314.5" x2="385.7" y2="84.7"><stop offset="0" stop-color="#c190f4"/><stop offset="0.25" stop-color="#c380f2"/><stop offset="0.5" stop-color="#c768ea"/><stop offset="0.75" stop-color="#cc4bdd"/><stop offset="1" stop-color="#d12ac9"/></linearGradient><linearGradient id="f140" gradientUnits="userSpaceOnUse" x1="316.0" y1="314.5" x2="385.7" y2="84.7"><stop offset="0" stop-color="#c290f3"/><stop offset="0.25" stop-color="#c481f1"/><stop offset="0.5" stop-color="#c869ea"/><stop offset="0.75" stop-color="#cd4cdd"/><stop offset="1" stop-color="#d32cc9"/></linearGradient><linearGradient id="f141" gradientUnits="userSpaceOnUse" x1="316.0" y1="314.5" x2="385.7" y2="84.7"><stop offset="0" stop-color="#c390f3"/><stop offset="0.25" stop-color="#c681f1"/><stop offset="0.5" stop-color="#ca6aea"/><stop offset="0.75" stop-color="#cf4edd"/><stop offset="1" stop-color="#d42eca"/></linearGradient><linearGradient id="f142" gradientUnits="userSpaceOnUse" x1="316.0" y1="314.5" x2="385.7" y2="84.7"><stop offset="0" stop-color="#c490f3"/><stop offset="0.25" stop-color="#c781f1"/><stop offset="0.5" stop-color="#cb6bea"/><stop offset="0.75" stop-color="#d04fde"/><stop offset="1" stop-color="#d631cb"/></linearGradient><linearGradient id="f143" gradientUnits="userSpaceOnUse" x1="316.0" y1="314.5" x2="385.7" y2="84.7"><stop offset="0" stop-color="#c590f3"/><stop offset="0.25" stop-color="#c882f1"/><stop offset="0.5" stop-color="#cc6bea"/><stop offset="0.75" stop-color="#d151de"/><stop offset="1" stop-color="#d733cc"/></linearGradient><linearGradient id="f144" gradientUnits="userSpaceOnUse" x1="316.0" y1="314.5" x2="417.2" y2="125.2"><stop offset="0" stop-color="#c690f2"/><stop offset="0.25" stop-color="#c982f0"/><stop offset="0.5" stop-color="#ce6cea"/><stop offset="0.75" stop-color="#d352de"/><stop offset="1" stop-color="#d935cc"/></linearGradient><linearGradient id="f145" gradientUnits="userSpaceOnUse" x1="316.0" y1="314.5" x2="417.2" y2="125.2"><stop offset="0" stop-color="#c890f2"/><stop offset="0.25" stop-color="#ca82f0"/><stop offset="0.5" stop-color="#cf6dea"/><stop offset="0.75" stop-color="#d454de"/><stop offset="1" stop-color="#da37cd"/></linearGradient><linearGradient id="f146" gradientUnits="userSpaceOnUse" x1="316.0" y1="314.5" x2="417.2" y2="125.2"><stop offset="0" stop-color="#c990f2"/><stop offset="0.25" stop-color="#cc83f0"/><stop offset="0.5" stop-color="#d06eea"/><stop offset="0.75" stop-color="#d655df"/><stop offset="1" stop-color="#dc3ace"/></linearGradient><linearGradient id="f147" gradientUnits="userSpaceOnUse" x1="316.0" y1="314.5" x2="417.2" y2="125.2"><stop offset="0" stop-color="#ca90f1"/><stop offset="0.25" stop-color="#cd83f0"/><stop offset="0.5" stop-color="#d16fea"/><stop offset="0.75" stop-color="#d757df"/><stop offset="1" stop-color="#dd3ccf"/></linearGradient><linearGradient id="f148" gradientUnits="userSpaceOnUse" x1="316.0" y1="314.5" x2="417.2" y2="125.2"><stop offset="0" stop-color="#cb90f1"/><stop offset="0.25" stop-color="#ce83f0"/><stop offset="0.5" stop-color="#d370ea"/><stop offset="0.75" stop-color="#d858df"/><stop offset="1" stop-color="#df3ecf"/></linearGradient><linearGradient id="f149" gradientUnits="userSpaceOnUse" x1="316.0" y1="314.5" x2="417.2" y2="125.2"><stop offset="0" stop-color="#cc90f1"/><stop offset="0.25" stop-color="#cf84ef"/><stop offset="0.5" stop-color="#d471ea"/><stop offset="0.75" stop-color="#da5adf"/><stop offset="1" stop-color="#e040d0"/></linearGradient><linearGradient id="f150" gradientUnits="userSpaceOnUse" x1="316.0" y1="314.5" x2="417.2" y2="125.2"><stop offset="0" stop-color="#cd90f1"/><stop offset="0.25" stop-color="#d084ef"/><stop offset="0.5" stop-color="#d571e9"/><stop offset="0.75" stop-color="#db5bdf"/><stop offset="1" stop-color="#e142cf"/></linearGradient><linearGradient id="f151" gradientUnits="userSpaceOnUse" x1="316.0" y1="314.5" x2="417.2" y2="125.2"><stop offset="0" stop-color="#cf90f0"/><stop offset="0.25" stop-color="#d284ef"/><stop offset="0.5" stop-color="#d672e9"/><stop offset="0.75" stop-color="#dc5cde"/><stop offset="1" stop-color="#e243ce"/></linearGradient><linearGradient id="f152" gradientUnits="userSpaceOnUse" x1="316.0" y1="314.5" x2="435.1" y2="169.4"><stop offset="0" stop-color="#d090f0"/><stop offset="0.25" stop-color="#d384ee"/><stop offset="0.5" stop-color="#d772e9"/><stop offset="0.75" stop-color="#dc5dde"/><stop offset="1" stop-color="#e245ce"/></linearGradient><linearGradient id="f153" gradientUnits="userSpaceOnUse" x1="316.0" y1="314.5" x2="435.1" y2="169.4"><stop offset="0" stop-color="#d090f0"/><stop offset="0.25" stop-color="#d385ee"/><stop offset="0.5" stop-color="#d873e8"/><stop offset="0.75" stop-color="#dd5edd"/><stop offset="1" stop-color="#e346cd"/></linearGradient><linearGradient id="f154" gradientUnits="userSpaceOnUse" x1="316.0" y1="314.5" x2="435.1" y2="169.4"><stop offset="0" stop-color="#d190ef"/><stop offset="0.25" stop-color="#d485ed"/><stop offset="0.5" stop-color="#d873e7"/><stop offset="0.75" stop-color="#de5fdc"/><stop offset="1" stop-color="#e448cc"/></linearGradient><linearGradient id="f155" gradientUnits="userSpaceOnUse" x1="316.0" y1="314.5" x2="435.1" y2="169.4"><stop offset="0" stop-color="#d190ee"/><stop offset="0.25" stop-color="#d485ed"/><stop offset="0.5" stop-color="#d974e7"/><stop offset="0.75" stop-color="#de60dc"/><stop offset="1" stop-color="#e549cb"/></linearGradient><linearGradient id="f156" gradientUnits="userSpaceOnUse" x1="316.0" y1="314.5" x2="435.1" y2="169.4"><stop offset="0" stop-color="#d28fee"/><stop offset="0.25" stop-color="#d585ec"/><stop offset="0.5" stop-color="#d974e6"/><stop offset="0.75" stop-color="#df61db"/><stop offset="1" stop-color="#e54bcb"/></linearGradient><linearGradient id="f157" gradientUnits="userSpaceOnUse" x1="316.0" y1="314.5" x2="435.1" y2="169.4"><stop offset="0" stop-color="#d28fed"/><stop offset="0.25" stop-color="#d585eb"/><stop offset="0.5" stop-color="#da75e5"/><stop offset="0.75" stop-color="#e062da"/><stop offset="1" stop-color="#e64cca"/></linearGradient><linearGradient id="f158" gradientUnits="userSpaceOnUse" x1="316.0" y1="314.5" x2="435.1" y2="169.4"><stop offset="0" stop-color="#d38fed"/><stop offset="0.25" stop-color="#d685eb"/><stop offset="0.5" stop-color="#db75e5"/><stop offset="0.75" stop-color="#e063da"/><stop offset="1" stop-color="#e74ec9"/></linearGradient><linearGradient id="f159" gradientUnits="userSpaceOnUse" x1="316.0" y1="314.5" x2="435.1" y2="169.4"><stop offset="0" stop-color="#d38fec"/><stop offset="0.25" stop-color="#d685ea"/><stop offset="0.5" stop-color="#db76e4"/><stop offset="0.75" stop-color="#e164d9"/><stop offset="1" stop-color="#e84fc8"/></linearGradient><linearGradient id="f160" gradientUnits="userSpaceOnUse" x1="316.0" y1="314.5" x2="439.8" y2="212.9"><stop offset="0" stop-color="#d48feb"/><stop offset="0.25" stop-color="#d785ea"/><stop offset="0.5" stop-color="#dc76e3"/><stop offset="0.75" stop-color="#e265d8"/><stop offset="1" stop-color="#e851c7"/></linearGradient><linearGradient id="f161" gradientUnits="userSpaceOnUse" x1="316.0" y1="314.5" x2="439.8" y2="212.9"><stop offset="0" stop-color="#d48feb"/><stop offset="0.25" stop-color="#d785e9"/><stop offset="0.5" stop-color="#dc77e2"/><stop offset="0.75" stop-color="#e266d6"/><stop offset="1" stop-color="#e952c5"/></linearGradient><linearGradient id="f162" gradientUnits="userSpaceOnUse" x1="316.0" y1="314.5" x2="439.8" y2="212.9"><stop offset="0" stop-color="#d48fea"/><stop offset="0.25" stop-color="#d885e8"/><stop offset="0.5" stop-color="#dd77e1"/><stop offset="0.75" stop-color="#e367d5"/><stop offset="1" stop-color="#ea54c2"/></linearGradient><linearGradient id="f163" gradientUnits="userSpaceOnUse" x1="316.0" y1="314.5" x2="439.8" y2="212.9"><stop offset="0" stop-color="#d58eea"/><stop offset="0.25" stop-color="#d886e8"/><stop offset="0.5" stop-color="#dd78e1"/><stop offset="0.75" stop-color="#e468d4"/><stop offset="1" stop-color="#eb55c0"/></linearGradient><linearGradient id="f164" gradientUnits="userSpaceOnUse" x1="316.0" y1="314.5" x2="439.8" y2="212.9"><stop offset="0" stop-color="#d58ee9"/><stop offset="0.25" stop-color="#d986e7"/><stop offset="0.5" stop-color="#de78e0"/><stop offset="0.75" stop-color="#e469d2"/><stop offset="1" stop-color="#eb57be"/></linearGradient><linearGradient id="f165" gradientUnits="userSpaceOnUse" x1="316.0" y1="314.5" x2="439.8" y2="212.9"><stop offset="0" stop-color="#d68ee8"/><stop offset="0.25" stop-color="#d986e6"/><stop offset="0.5" stop-color="#df79df"/><stop offset="0.75" stop-color="#e56ad1"/><stop offset="1" stop-color="#ec58bc"/></linearGradient><linearGradient id="f166" gradientUnits="userSpaceOnUse" x1="316.0" y1="314.5" x2="439.8" y2="212.9"><stop offset="0" stop-color="#d68ee8"/><stop offset="0.25" stop-color="#da86e5"/><stop offset="0.5" stop-color="#df79de"/><stop offset="0.75" stop-color="#e66bcf"/><stop offset="1" stop-color="#ed5ab9"/></linearGradient><linearGradient id="f167" gradientUnits="userSpaceOnUse" x1="316.0" y1="314.5" x2="439.8" y2="212.9"><stop offset="0" stop-color="#d78ee7"/><stop offset="0.25" stop-color="#da86e5"/><stop offset="0.5" stop-color="#e07add"/><stop offset="0.75" stop-color="#e66cce"/><stop offset="1" stop-color="#ee5bb7"/></linearGradient><linearGradient id="f168" gradientUnits="userSpaceOnUse" x1="316.0" y1="314.5" x2="433.4" y2="251.7"><stop offset="0" stop-color="#d78ee6"/><stop offset="0.25" stop-color="#db86e4"/><stop offset="0.5" stop-color="#e07adc"/><stop offset="0.75" stop-color="#e76ccc"/><stop offset="1" stop-color="#ee5db5"/></linearGradient><linearGradient id="f169" gradientUnits="userSpaceOnUse" x1="316.0" y1="314.5" x2="433.4" y2="251.7"><stop offset="0" stop-color="#d88de6"/><stop offset="0.25" stop-color="#db86e3"/><stop offset="0.5" stop-color="#e17bdb"/><stop offset="0.75" stop-color="#e86dcb"/><stop offset="1" stop-color="#ef5eb3"/></linearGradient><linearGradient id="f170" gradientUnits="userSpaceOnUse" x1="316.0" y1="314.5" x2="433.4" y2="251.7"><stop offset="0" stop-color="#d88de5"/><stop offset="0.25" stop-color="#dc86e3"/><stop offset="0.5" stop-color="#e17bda"/><stop offset="0.75" stop-color="#e86ec9"/><stop offset="1" stop-color="#f060b0"/></linearGradient><linearGradient id="f171" gradientUnits="userSpaceOnUse" x1="316.0" y1="314.5" x2="433.4" y2="251.7"><stop offset="0" stop-color="#d98de4"/><stop offset="0.25" stop-color="#dc86e2"/><stop offset="0.5" stop-color="#e27cd9"/><stop offset="0.75" stop-color="#e96fc7"/><stop offset="1" stop-color="#f161ae"/></linearGradient><linearGradient id="f172" gradientUnits="userSpaceOnUse" x1="316.0" y1="314.5" x2="433.4" y2="251.7"><stop offset="0" stop-color="#d98de4"/><stop offset="0.25" stop-color="#dd86e1"/><stop offset="0.5" stop-color="#e37cd7"/><stop offset="0.75" stop-color="#ea70c5"/><stop offset="1" stop-color="#f163aa"/></linearGradient><linearGradient id="f173" gradientUnits="userSpaceOnUse" x1="316.0" y1="314.5" x2="433.4" y2="251.7"><stop offset="0" stop-color="#da8de3"/><stop offset="0.25" stop-color="#dd87e0"/><stop offset="0.5" stop-color="#e37dd6"/><stop offset="0.75" stop-color="#ea71c3"/><stop offset="1" stop-color="#f264a7"/></linearGradient><linearGradient id="f174" gradientUnits="userSpaceOnUse" x1="316.0" y1="314.5" x2="433.4" y2="251.7"><stop offset="0" stop-color="#da8de2"/><stop offset="0.25" stop-color="#de87e0"/><stop offset="0.5" stop-color="#e47dd5"/><stop offset="0.75" stop-color="#eb72c2"/><stop offset="1" stop-color="#f366a4"/></linearGradient><linearGradient id="f175" gradientUnits="userSpaceOnUse" x1="316.0" y1="314.5" x2="433.4" y2="251.7"><stop offset="0" stop-color="#db8ce2"/><stop offset="0.25" stop-color="#df87df"/><stop offset="0.5" stop-color="#e47ed4"/><stop offset="0.75" stop-color="#ec73c0"/><stop offset="1" stop-color="#f467a1"/></linearGradient><linearGradient id="f176" gradientUnits="userSpaceOnUse" x1="316.0" y1="314.5" x2="419.1" y2="283.2"><stop offset="0" stop-color="#db8ce1"/><stop offset="0.25" stop-color="#df87de"/><stop offset="0.5" stop-color="#e57ed3"/><stop offset="0.75" stop-color="#ec74be"/><stop offset="1" stop-color="#f4699f"/></linearGradient><linearGradient id="f177" gradientUnits="userSpaceOnUse" x1="316.0" y1="314.5" x2="419.1" y2="283.2"><stop offset="0" stop-color="#dc8ce0"/><stop offset="0.25" stop-color="#e087dd"/><stop offset="0.5" stop-color="#e67fd1"/><stop offset="0.75" stop-color="#ed75bc"/><stop offset="1" stop-color="#f56a9c"/></linearGradient><linearGradient id="f178" gradientUnits="userSpaceOnUse" x1="316.0" y1="314.5" x2="419.1" y2="283.2"><stop offset="0" stop-color="#dc8ce0"/><stop offset="0.25" stop-color="#e087dc"/><stop offset="0.5" stop-color="#e67fd0"/><stop offset="0.75" stop-color="#ee76ba"/><stop offset="1" stop-color="#f66c99"/></linearGradient><linearGradient id="f179" gradientUnits="userSpaceOnUse" x1="316.0" y1="314.5" x2="419.1" y2="283.2"><stop offset="0" stop-color="#dd8cdf"/><stop offset="0.25" stop-color="#e187dc"/><stop offset="0.5" stop-color="#e780cf"/><stop offset="0.75" stop-color="#ee77b8"/><stop offset="1" stop-color="#f76d96"/></linearGradient><linearGradient id="f180" gradientUnits="userSpaceOnUse" x1="316.0" y1="314.5" x2="419.1" y2="283.2"><stop offset="0" stop-color="#dd8cde"/><stop offset="0.25" stop-color="#e187db"/><stop offset="0.5" stop-color="#e780ce"/><stop offset="0.75" stop-color="#ef78b6"/><stop offset="1" stop-color="#f76f92"/></linearGradient><linearGradient id="f181" gradientUnits="userSpaceOnUse" x1="316.0" y1="314.5" x2="419.1" y2="283.2"><stop offset="0" stop-color="#de8bde"/><stop offset="0.25" stop-color="#e287da"/><stop offset="0.5" stop-color="#e881cd"/><stop offset="0.75" stop-color="#f079b4"/><stop offset="1" stop-color="#f87090"/></linearGradient><linearGradient id="f182" gradientUnits="userSpaceOnUse" x1="316.0" y1="314.5" x2="419.1" y2="283.2"><stop offset="0" stop-color="#de8bdd"/><stop offset="0.25" stop-color="#e287d9"/><stop offset="0.5" stop-color="#e881cc"/><stop offset="0.75" stop-color="#f07ab3"/><stop offset="1" stop-color="#f8728e"/></linearGradient><linearGradient id="f183" gradientUnits="userSpaceOnUse" x1="316.0" y1="314.5" x2="419.1" y2="283.2"><stop offset="0" stop-color="#df8bdc"/><stop offset="0.25" stop-color="#e387d8"/><stop offset="0.5" stop-color="#e982cb"/><stop offset="0.75" stop-color="#f07bb2"/><stop offset="1" stop-color="#f8738d"/></linearGradient><linearGradient id="f184" gradientUnits="userSpaceOnUse" x1="316.0" y1="314.5" x2="400.5" y2="306.2"><stop offset="0" stop-color="#df8bdb"/><stop offset="0.25" stop-color="#e387d8"/><stop offset="0.5" stop-color="#e982ca"/><stop offset="0.75" stop-color="#f07cb1"/><stop offset="1" stop-color="#f8758b"/></linearGradient><linearGradient id="f185" gradientUnits="userSpaceOnUse" x1="316.0" y1="314.5" x2="400.5" y2="306.2"><stop offset="0" stop-color="#e08bdb"/><stop offset="0.25" stop-color="#e488d7"/><stop offset="0.5" stop-color="#e983c9"/><stop offset="0.75" stop-color="#f07db0"/><stop offset="1" stop-color="#f8768a"/></linearGradient><linearGradient id="f186" gradientUnits="userSpaceOnUse" x1="316.0" y1="314.5" x2="400.5" y2="306.2"><stop offset="0" stop-color="#e08bda"/><stop offset="0.25" stop-color="#e488d6"/><stop offset="0.5" stop-color="#ea83c8"/><stop offset="0.75" stop-color="#f07eaf"/><stop offset="1" stop-color="#f87888"/></linearGradient><linearGradient id="f187" gradientUnits="userSpaceOnUse" x1="316.0" y1="314.5" x2="400.5" y2="306.2"><stop offset="0" stop-color="#e18ad9"/><stop offset="0.25" stop-color="#e588d5"/><stop offset="0.5" stop-color="#ea84c7"/><stop offset="0.75" stop-color="#f17fad"/><stop offset="1" stop-color="#f87987"/></linearGradient><linearGradient id="f188" gradientUnits="userSpaceOnUse" x1="316.0" y1="314.5" x2="400.5" y2="306.2"><stop offset="0" stop-color="#e28ad9"/><stop offset="0.25" stop-color="#e588d5"/><stop offset="0.5" stop-color="#ea84c6"/><stop offset="0.75" stop-color="#f180ac"/><stop offset="1" stop-color="#f87b85"/></linearGradient><linearGradient id="f189" gradientUnits="userSpaceOnUse" x1="316.0" y1="314.5" x2="400.5" y2="306.2"><stop offset="0" stop-color="#e28ad8"/><stop offset="0.25" stop-color="#e688d4"/><stop offset="0.5" stop-color="#eb85c5"/><stop offset="0.75" stop-color="#f181ab"/><stop offset="1" stop-color="#f87c84"/></linearGradient><linearGradient id="f190" gradientUnits="userSpaceOnUse" x1="316.0" y1="314.5" x2="400.5" y2="306.2"><stop offset="0" stop-color="#e38ad7"/><stop offset="0.25" stop-color="#e688d3"/><stop offset="0.5" stop-color="#eb85c4"/><stop offset="0.75" stop-color="#f182aa"/><stop offset="1" stop-color="#f87e82"/></linearGradient><linearGradient id="f191" gradientUnits="userSpaceOnUse" x1="316.0" y1="314.5" x2="400.5" y2="306.2"><stop offset="0" stop-color="#e489d6"/><stop offset="0.25" stop-color="#e788d2"/><stop offset="0.5" stop-color="#ec85c3"/><stop offset="0.75" stop-color="#f183a9"/><stop offset="1" stop-color="#f87f81"/></linearGradient><linearGradient id="f192" gradientUnits="userSpaceOnUse" x1="316.0" y1="314.5" x2="381.2" y2="320.9"><stop offset="0" stop-color="#e489d5"/><stop offset="0.25" stop-color="#e788d1"/><stop offset="0.5" stop-color="#ec86c3"/><stop offset="0.75" stop-color="#f284a8"/><stop offset="1" stop-color="#f88180"/></linearGradient><linearGradient id="f193" gradientUnits="userSpaceOnUse" x1="316.0" y1="314.5" x2="381.2" y2="320.9"><stop offset="0" stop-color="#e589d4"/><stop offset="0.25" stop-color="#e888d0"/><stop offset="0.5" stop-color="#ec87c2"/><stop offset="0.75" stop-color="#f285a8"/><stop offset="1" stop-color="#f88380"/></linearGradient><linearGradient id="f194" gradientUnits="userSpaceOnUse" x1="316.0" y1="314.5" x2="381.2" y2="320.9"><stop offset="0" stop-color="#e589d3"/><stop offset="0.25" stop-color="#e888cf"/><stop offset="0.5" stop-color="#ed88c1"/><stop offset="0.75" stop-color="#f287a7"/><stop offset="1" stop-color="#f88680"/></linearGradient><linearGradient id="f195" gradientUnits="userSpaceOnUse" x1="316.0" y1="314.5" x2="381.2" y2="320.9"><stop offset="0" stop-color="#e689d3"/><stop offset="0.25" stop-color="#e989cf"/><stop offset="0.5" stop-color="#ed88c1"/><stop offset="0.75" stop-color="#f288a7"/><stop offset="1" stop-color="#f88880"/></linearGradient><linearGradient id="f196" gradientUnits="userSpaceOnUse" x1="316.0" y1="314.5" x2="381.2" y2="320.9"><stop offset="0" stop-color="#e788d2"/><stop offset="0.25" stop-color="#e989ce"/><stop offset="0.5" stop-color="#ee89c0"/><stop offset="0.75" stop-color="#f28aa6"/><stop offset="1" stop-color="#f88a80"/></linearGradient><linearGradient id="f197" gradientUnits="userSpaceOnUse" x1="316.0" y1="314.5" x2="381.2" y2="320.9"><stop offset="0" stop-color="#e888d1"/><stop offset="0.25" stop-color="#ea89cd"/><stop offset="0.5" stop-color="#ee8abf"/><stop offset="0.75" stop-color="#f38ba6"/><stop offset="1" stop-color="#f88c80"/></linearGradient><linearGradient id="f198" gradientUnits="userSpaceOnUse" x1="316.0" y1="314.5" x2="381.2" y2="320.9"><stop offset="0" stop-color="#e888cf"/><stop offset="0.25" stop-color="#eb89cc"/><stop offset="0.5" stop-color="#ee8bbe"/><stop offset="0.75" stop-color="#f38da5"/><stop offset="1" stop-color="#f88f80"/></linearGradient><linearGradient id="f199" gradientUnits="userSpaceOnUse" x1="316.0" y1="314.5" x2="381.2" y2="320.9"><stop offset="0" stop-color="#e889ce"/><stop offset="0.25" stop-color="#eb8aca"/><stop offset="0.5" stop-color="#ef8cbd"/><stop offset="0.75" stop-color="#f38ea4"/><stop offset="1" stop-color="#f89180"/></linearGradient><linearGradient id="f200" gradientUnits="userSpaceOnUse" x1="316.0" y1="314.5" x2="364.1" y2="329.1"><stop offset="0" stop-color="#e98acc"/><stop offset="0.25" stop-color="#eb8bc8"/><stop offset="0.5" stop-color="#ef8ebb"/><stop offset="0.75" stop-color="#f390a4"/><stop offset="1" stop-color="#f89380"/></linearGradient><linearGradient id="f201" gradientUnits="userSpaceOnUse" x1="316.0" y1="314.5" x2="364.1" y2="329.1"><stop offset="0" stop-color="#e98bca"/><stop offset="0.25" stop-color="#eb8cc7"/><stop offset="0.5" stop-color="#ef8fba"/><stop offset="0.75" stop-color="#f392a3"/><stop offset="1" stop-color="#f89580"/></linearGradient><linearGradient id="f202" gradientUnits="userSpaceOnUse" x1="316.0" y1="314.5" x2="364.1" y2="329.1"><stop offset="0" stop-color="#e98cc9"/><stop offset="0.25" stop-color="#eb8dc5"/><stop offset="0.5" stop-color="#ef90b9"/><stop offset="0.75" stop-color="#f394a2"/><stop offset="1" stop-color="#f89880"/></linearGradient><linearGradient id="f203" gradientUnits="userSpaceOnUse" x1="316.0" y1="314.5" x2="364.1" y2="329.1"><stop offset="0" stop-color="#e98cc7"/><stop offset="0.25" stop-color="#ec8fc4"/><stop offset="0.5" stop-color="#ef92b8"/><stop offset="0.75" stop-color="#f396a1"/><stop offset="1" stop-color="#f79a80"/></linearGradient><linearGradient id="f204" gradientUnits="userSpaceOnUse" x1="316.0" y1="314.5" x2="364.1" y2="329.1"><stop offset="0" stop-color="#ea8dc5"/><stop offset="0.25" stop-color="#ec90c2"/><stop offset="0.5" stop-color="#ef94b6"/><stop offset="0.75" stop-color="#f298a0"/><stop offset="1" stop-color="#f79e80"/></linearGradient><linearGradient id="f205" gradientUnits="userSpaceOnUse" x1="316.0" y1="314.5" x2="364.1" y2="329.1"><stop offset="0" stop-color="#ea8ec3"/><stop offset="0.25" stop-color="#ec91c0"/><stop offset="0.5" stop-color="#ef96b4"/><stop offset="0.75" stop-color="#f29b9f"/><stop offset="1" stop-color="#f6a180"/></linearGradient><linearGradient id="f206" gradientUnits="userSpaceOnUse" x1="316.0" y1="314.5" x2="364.1" y2="329.1"><stop offset="0" stop-color="#eb90c1"/><stop offset="0.25" stop-color="#ec93be"/><stop offset="0.5" stop-color="#ef97b3"/><stop offset="0.75" stop-color="#f29d9e"/><stop offset="1" stop-color="#f5a480"/></linearGradient><linearGradient id="f207" gradientUnits="userSpaceOnUse" x1="316.0" y1="314.5" x2="364.1" y2="329.1"><stop offset="0" stop-color="#eb91be"/><stop offset="0.25" stop-color="#ec94bb"/><stop offset="0.5" stop-color="#ef99b1"/><stop offset="0.75" stop-color="#f1a09d"/><stop offset="1" stop-color="#f4a780"/></linearGradient><linearGradient id="f208" gradientUnits="userSpaceOnUse" x1="316.0" y1="314.5" x2="351.1" y2="333.3"><stop offset="0" stop-color="#eb92bc"/><stop offset="0.25" stop-color="#ed96b9"/><stop offset="0.5" stop-color="#ef9baf"/><stop offset="0.75" stop-color="#f1a29c"/><stop offset="1" stop-color="#f4a980"/></linearGradient><linearGradient id="f209" gradientUnits="userSpaceOnUse" x1="316.0" y1="314.5" x2="351.1" y2="333.3"><stop offset="0" stop-color="#ec93ba"/><stop offset="0.25" stop-color="#ed97b7"/><stop offset="0.5" stop-color="#ef9dad"/><stop offset="0.75" stop-color="#f1a49b"/><stop offset="1" stop-color="#f3ac80"/></linearGradient><linearGradient id="f210" gradientUnits="userSpaceOnUse" x1="316.0" y1="314.5" x2="351.1" y2="333.3"><stop offset="0" stop-color="#ec95b7"/><stop offset="0.25" stop-color="#ed99b4"/><stop offset="0.5" stop-color="#ef9fab"/><stop offset="0.75" stop-color="#f0a79a"/><stop offset="1" stop-color="#f2af80"/></linearGradient><linearGradient id="f211" gradientUnits="userSpaceOnUse" x1="316.0" y1="314.5" x2="351.1" y2="333.3"><stop offset="0" stop-color="#ed96b4"/><stop offset="0.25" stop-color="#ed9ab2"/><stop offset="0.5" stop-color="#efa1a9"/><stop offset="0.75" stop-color="#f0a998"/><stop offset="1" stop-color="#f1b280"/></linearGradient><linearGradient id="f212" gradientUnits="userSpaceOnUse" x1="316.0" y1="314.5" x2="351.1" y2="333.3"><stop offset="0" stop-color="#ed98b1"/><stop offset="0.25" stop-color="#ee9cae"/><stop offset="0.5" stop-color="#efa3a6"/><stop offset="0.75" stop-color="#f0ac97"/><stop offset="1" stop-color="#f1b680"/></linearGradient><linearGradient id="f213" gradientUnits="userSpaceOnUse" x1="316.0" y1="314.5" x2="351.1" y2="333.3"><stop offset="0" stop-color="#ee99ad"/><stop offset="0.25" stop-color="#ee9eab"/><stop offset="0.5" stop-color="#efa6a3"/><stop offset="0.75" stop-color="#efaf95"/><stop offset="1" stop-color="#f0b980"/></linearGradient><linearGradient id="f214" gradientUnits="userSpaceOnUse" x1="316.0" y1="314.5" x2="351.1" y2="333.3"><stop offset="0" stop-color="#ee9ba9"/><stop offset="0.25" stop-color="#efa0a7"/><stop offset="0.5" stop-color="#efa8a0"/><stop offset="0.75" stop-color="#efb193"/><stop offset="1" stop-color="#efbc80"/></linearGradient><linearGradient id="f215" gradientUnits="userSpaceOnUse" x1="316.0" y1="314.5" x2="351.1" y2="333.3"><stop offset="0" stop-color="#ef9ea5"/><stop offset="0.25" stop-color="#efa3a3"/><stop offset="0.5" stop-color="#efab9d"/><stop offset="0.75" stop-color="#efb491"/><stop offset="1" stop-color="#eebf80"/></linearGradient><linearGradient id="f216" gradientUnits="userSpaceOnUse" x1="316.0" y1="314.5" x2="342.7" y2="336.4"><stop offset="0" stop-color="#f0a0a0"/><stop offset="0.25" stop-color="#f0a59f"/><stop offset="0.5" stop-color="#efad99"/><stop offset="0.75" stop-color="#eeb78f"/><stop offset="1" stop-color="#eec180"/></linearGradient><linearGradient id="f217" gradientUnits="userSpaceOnUse" x1="316.0" y1="314.5" x2="342.7" y2="336.4"><stop offset="0" stop-color="#efa59e"/><stop offset="0.25" stop-color="#efaa9d"/><stop offset="0.5" stop-color="#eeb198"/><stop offset="0.75" stop-color="#eeba8e"/><stop offset="1" stop-color="#edc480"/></linearGradient><linearGradient id="f218" gradientUnits="userSpaceOnUse" x1="316.0" y1="314.5" x2="342.7" y2="336.4"><stop offset="0" stop-color="#eeaa9d"/><stop offset="0.25" stop-color="#eeaf9b"/><stop offset="0.5" stop-color="#edb696"/><stop offset="0.75" stop-color="#edbe8d"/><stop offset="1" stop-color="#ecc780"/></linearGradient><linearGradient id="f219" gradientUnits="userSpaceOnUse" x1="316.0" y1="314.5" x2="342.7" y2="336.4"><stop offset="0" stop-color="#edb09b"/><stop offset="0.25" stop-color="#edb499"/><stop offset="0.5" stop-color="#edba95"/><stop offset="0.75" stop-color="#ecc28c"/><stop offset="1" stop-color="#ebca80"/></linearGradient><linearGradient id="f220" gradientUnits="userSpaceOnUse" x1="316.0" y1="314.5" x2="342.7" y2="336.4"><stop offset="0" stop-color="#ecb798"/><stop offset="0.25" stop-color="#ecba97"/><stop offset="0.5" stop-color="#ecc093"/><stop offset="0.75" stop-color="#ebc68b"/><stop offset="1" stop-color="#ebce80"/></linearGradient><linearGradient id="f221" gradientUnits="userSpaceOnUse" x1="316.0" y1="314.5" x2="342.7" y2="336.4"><stop offset="0" stop-color="#ebbe96"/><stop offset="0.25" stop-color="#ebc195"/><stop offset="0.5" stop-color="#ebc591"/><stop offset="0.75" stop-color="#eaca8a"/><stop offset="1" stop-color="#ead180"/></linearGradient><linearGradient id="f222" gradientUnits="userSpaceOnUse" x1="316.0" y1="314.5" x2="342.7" y2="336.4"><stop offset="0" stop-color="#eac594"/><stop offset="0.25" stop-color="#eac793"/><stop offset="0.5" stop-color="#eacb8f"/><stop offset="0.75" stop-color="#e9cf89"/><stop offset="1" stop-color="#e9d480"/></linearGradient><linearGradient id="f223" gradientUnits="userSpaceOnUse" x1="316.0" y1="314.5" x2="342.7" y2="336.4"><stop offset="0" stop-color="#e9cd91"/><stop offset="0.25" stop-color="#e9ce90"/><stop offset="0.5" stop-color="#e8d18d"/><stop offset="0.75" stop-color="#e8d388"/><stop offset="1" stop-color="#e8d780"/></linearGradient><linearGradient id="f224" gradientUnits="userSpaceOnUse" x1="316.0" y1="314.5" x2="338.0" y2="341.3"><stop offset="0" stop-color="#e4d390"/><stop offset="0.25" stop-color="#e4d48f"/><stop offset="0.5" stop-color="#e5d58d"/><stop offset="0.75" stop-color="#e6d788"/><stop offset="1" stop-color="#e7d980"/></linearGradient><linearGradient id="f225" gradientUnits="userSpaceOnUse" x1="316.0" y1="314.5" x2="338.0" y2="341.3"><stop offset="0" stop-color="#dcd890"/><stop offset="0.25" stop-color="#ddd88f"/><stop offset="0.5" stop-color="#dfd98d"/><stop offset="0.75" stop-color="#e1da88"/><stop offset="1" stop-color="#e4db80"/></linearGradient><linearGradient id="f226" gradientUnits="userSpaceOnUse" x1="316.0" y1="314.5" x2="338.0" y2="341.3"><stop offset="0" stop-color="#d5dd90"/><stop offset="0.25" stop-color="#d6dd8f"/><stop offset="0.5" stop-color="#d9dd8d"/><stop offset="0.75" stop-color="#dddd88"/><stop offset="1" stop-color="#e1de80"/></linearGradient><linearGradient id="f227" gradientUnits="userSpaceOnUse" x1="316.0" y1="314.5" x2="338.0" y2="341.3"><stop offset="0" stop-color="#cee290"/><stop offset="0.25" stop-color="#d0e18f"/><stop offset="0.5" stop-color="#d4e18d"/><stop offset="0.75" stop-color="#d8e088"/><stop offset="1" stop-color="#dee080"/></linearGradient><linearGradient id="f228" gradientUnits="userSpaceOnUse" x1="316.0" y1="314.5" x2="338.0" y2="341.3"><stop offset="0" stop-color="#c7e690"/><stop offset="0.25" stop-color="#cae58f"/><stop offset="0.5" stop-color="#cfe48d"/><stop offset="0.75" stop-color="#d4e388"/><stop offset="1" stop-color="#dae280"/></linearGradient><linearGradient id="f229" gradientUnits="userSpaceOnUse" x1="316.0" y1="314.5" x2="338.0" y2="341.3"><stop offset="0" stop-color="#c1ea90"/><stop offset="0.25" stop-color="#c5e98f"/><stop offset="0.5" stop-color="#cae88d"/><stop offset="0.75" stop-color="#d0e688"/><stop offset="1" stop-color="#d7e480"/></linearGradient><linearGradient id="f230" gradientUnits="userSpaceOnUse" x1="316.0" y1="314.5" x2="338.0" y2="341.3"><stop offset="0" stop-color="#bced90"/><stop offset="0.25" stop-color="#c0ec8f"/><stop offset="0.5" stop-color="#c6eb8d"/><stop offset="0.75" stop-color="#cde988"/><stop offset="1" stop-color="#d4e780"/></linearGradient><linearGradient id="f231" gradientUnits="userSpaceOnUse" x1="316.0" y1="314.5" x2="338.0" y2="341.3"><stop offset="0" stop-color="#b7f091"/><stop offset="0.25" stop-color="#bbef90"/><stop offset="0.5" stop-color="#c2ed8d"/><stop offset="0.75" stop-color="#c9eb88"/><stop offset="1" stop-color="#d1e980"/></linearGradient><linearGradient id="f232" gradientUnits="userSpaceOnUse" x1="316.0" y1="314.5" x2="334.9" y2="349.8"><stop offset="0" stop-color="#b4f098"/><stop offset="0.25" stop-color="#b8ef97"/><stop offset="0.5" stop-color="#bfee93"/><stop offset="0.75" stop-color="#c6ed8b"/><stop offset="1" stop-color="#cfeb80"/></linearGradient><linearGradient id="f233" gradientUnits="userSpaceOnUse" x1="316.0" y1="314.5" x2="334.9" y2="349.8"><stop offset="0" stop-color="#b2f09e"/><stop offset="0.25" stop-color="#b6f09d"/><stop offset="0.5" stop-color="#bcef98"/><stop offset="0.75" stop-color="#c3ee8e"/><stop offset="1" stop-color="#cced80"/></linearGradient><linearGradient id="f234" gradientUnits="userSpaceOnUse" x1="316.0" y1="314.5" x2="334.9" y2="349.8"><stop offset="0" stop-color="#aff0a4"/><stop offset="0.25" stop-color="#b3f0a3"/><stop offset="0.5" stop-color="#b9f09c"/><stop offset="0.75" stop-color="#c0f091"/><stop offset="1" stop-color="#c9f080"/></linearGradient><linearGradient id="f235" gradientUnits="userSpaceOnUse" x1="316.0" y1="314.5" x2="334.9" y2="349.8"><stop offset="0" stop-color="#adf0aa"/><stop offset="0.25" stop-color="#b0f0a8"/><stop offset="0.5" stop-color="#b6f0a1"/><stop offset="0.75" stop-color="#bdf094"/><stop offset="1" stop-color="#c6f180"/></linearGradient><linearGradient id="f236" gradientUnits="userSpaceOnUse" x1="316.0" y1="314.5" x2="334.9" y2="349.8"><stop offset="0" stop-color="#aaf0af"/><stop offset="0.25" stop-color="#aef0ac"/><stop offset="0.5" stop-color="#b4f1a4"/><stop offset="0.75" stop-color="#bbf196"/><stop offset="1" stop-color="#c2f180"/></linearGradient><linearGradient id="f237" gradientUnits="userSpaceOnUse" x1="316.0" y1="314.5" x2="334.9" y2="349.8"><stop offset="0" stop-color="#a9f0b3"/><stop offset="0.25" stop-color="#acf0b0"/><stop offset="0.5" stop-color="#b2f1a8"/><stop offset="0.75" stop-color="#b8f198"/><stop offset="1" stop-color="#bff280"/></linearGradient><linearGradient id="f238" gradientUnits="userSpaceOnUse" x1="316.0" y1="314.5" x2="334.9" y2="349.8"><stop offset="0" stop-color="#a7f0b7"/><stop offset="0.25" stop-color="#aaf0b4"/><stop offset="0.5" stop-color="#aff1ab"/><stop offset="0.75" stop-color="#b6f29a"/><stop offset="1" stop-color="#bcf380"/></linearGradient><linearGradient id="f239" gradientUnits="userSpaceOnUse" x1="316.0" y1="314.5" x2="334.9" y2="349.8"><stop offset="0" stop-color="#a5f0ba"/><stop offset="0.25" stop-color="#a8f1b7"/><stop offset="0.5" stop-color="#adf1ae"/><stop offset="0.75" stop-color="#b3f29b"/><stop offset="1" stop-color="#b9f480"/></linearGradient><linearGradient id="f240" gradientUnits="userSpaceOnUse" x1="316.0" y1="314.5" x2="330.7" y2="363.0"><stop offset="0" stop-color="#a4f0be"/><stop offset="0.25" stop-color="#a7f1bb"/><stop offset="0.5" stop-color="#abf2b0"/><stop offset="0.75" stop-color="#b0f39d"/><stop offset="1" stop-color="#b7f480"/></linearGradient><linearGradient id="f241" gradientUnits="userSpaceOnUse" x1="316.0" y1="314.5" x2="330.7" y2="363.0"><stop offset="0" stop-color="#a2f0c1"/><stop offset="0.25" stop-color="#a5f1be"/><stop offset="0.5" stop-color="#a9f2b3"/><stop offset="0.75" stop-color="#aef39f"/><stop offset="1" stop-color="#b4f580"/></linearGradient><linearGradient id="f242" gradientUnits="userSpaceOnUse" x1="316.0" y1="314.5" x2="330.7" y2="363.0"><stop offset="0" stop-color="#a1f0c5"/><stop offset="0.25" stop-color="#a3f1c2"/><stop offset="0.5" stop-color="#a7f2b6"/><stop offset="0.75" stop-color="#abf4a0"/><stop offset="1" stop-color="#b1f680"/></linearGradient><linearGradient id="f243" gradientUnits="userSpaceOnUse" x1="316.0" y1="314.5" x2="330.7" y2="363.0"><stop offset="0" stop-color="#9ff0c8"/><stop offset="0.25" stop-color="#a1f1c4"/><stop offset="0.5" stop-color="#a5f3b8"/><stop offset="0.75" stop-color="#a9f4a2"/><stop offset="1" stop-color="#aef780"/></linearGradient><linearGradient id="f244" gradientUnits="userSpaceOnUse" x1="316.0" y1="314.5" x2="330.7" y2="363.0"><stop offset="0" stop-color="#9ef0cb"/><stop offset="0.25" stop-color="#a0f1c7"/><stop offset="0.5" stop-color="#a3f3ba"/><stop offset="0.75" stop-color="#a6f5a3"/><stop offset="1" stop-color="#aaf780"/></linearGradient><linearGradient id="f245" gradientUnits="userSpaceOnUse" x1="316.0" y1="314.5" x2="330.7" y2="363.0"><stop offset="0" stop-color="#9df0cd"/><stop offset="0.25" stop-color="#9ef1ca"/><stop offset="0.5" stop-color="#a1f3bd"/><stop offset="0.75" stop-color="#a4f6a4"/><stop offset="1" stop-color="#a7f880"/></linearGradient><linearGradient id="f246" gradientUnits="userSpaceOnUse" x1="316.0" y1="314.5" x2="330.7" y2="363.0"><stop offset="0" stop-color="#9cf0d0"/><stop offset="0.25" stop-color="#9df1cc"/><stop offset="0.5" stop-color="#9ff3bf"/><stop offset="0.75" stop-color="#a1f6a6"/><stop offset="1" stop-color="#a4f981"/></linearGradient><linearGradient id="f247" gradientUnits="userSpaceOnUse" x1="316.0" y1="314.5" x2="330.7" y2="363.0"><stop offset="0" stop-color="#9bf0d2"/><stop offset="0.25" stop-color="#9bf1ce"/><stop offset="0.5" stop-color="#9df4c1"/><stop offset="0.75" stop-color="#9ef6a7"/><stop offset="1" stop-color="#a0f982"/></linearGradient><linearGradient id="f248" gradientUnits="userSpaceOnUse" x1="316.0" y1="314.5" x2="322.5" y2="380.2"><stop offset="0" stop-color="#9af0d4"/><stop offset="0.25" stop-color="#9af2d1"/><stop offset="0.5" stop-color="#9bf4c3"/><stop offset="0.75" stop-color="#9bf7a9"/><stop offset="1" stop-color="#9cfa82"/></linearGradient><linearGradient id="f249" gradientUnits="userSpaceOnUse" x1="316.0" y1="314.5" x2="322.5" y2="380.2"><stop offset="0" stop-color="#98f0d7"/><stop offset="0.25" stop-color="#98f2d3"/><stop offset="0.5" stop-color="#98f4c5"/><stop offset="0.75" stop-color="#98f7aa"/><stop offset="1" stop-color="#98fb83"/></linearGradient><linearGradient id="f250" gradientUnits="userSpaceOnUse" x1="316.0" y1="314.5" x2="322.5" y2="380.2"><stop offset="0" stop-color="#98f0d9"/><stop offset="0.25" stop-color="#97f1d5"/><stop offset="0.5" stop-color="#97f4c6"/><stop offset="0.75" stop-color="#96f8ac"/><stop offset="1" stop-color="#95fb84"/></linearGradient><linearGradient id="f251" gradientUnits="userSpaceOnUse" x1="316.0" y1="314.5" x2="322.5" y2="380.2"><stop offset="0" stop-color="#98efda"/><stop offset="0.25" stop-color="#97f1d6"/><stop offset="0.5" stop-color="#95f4c7"/><stop offset="0.75" stop-color="#93f8ad"/><stop offset="1" stop-color="#91fc85"/></linearGradient><linearGradient id="f252" gradientUnits="userSpaceOnUse" x1="316.0" y1="314.5" x2="322.5" y2="380.2"><stop offset="0" stop-color="#98eedb"/><stop offset="0.25" stop-color="#96f0d7"/><stop offset="0.5" stop-color="#94f4c8"/><stop offset="0.75" stop-color="#91f8ae"/><stop offset="1" stop-color="#8dfd85"/></linearGradient><linearGradient id="f253" gradientUnits="userSpaceOnUse" x1="316.0" y1="314.5" x2="322.5" y2="380.2"><stop offset="0" stop-color="#98eddc"/><stop offset="0.25" stop-color="#96f0d8"/><stop offset="0.5" stop-color="#92f4c9"/><stop offset="0.75" stop-color="#8ef8ae"/><stop offset="1" stop-color="#89fd86"/></linearGradient><linearGradient id="f254" gradientUnits="userSpaceOnUse" x1="316.0" y1="314.5" x2="322.5" y2="380.2"><stop offset="0" stop-color="#98eddd"/><stop offset="0.25" stop-color="#95efd9"/><stop offset="0.5" stop-color="#91f4ca"/><stop offset="0.75" stop-color="#8cf8af"/><stop offset="1" stop-color="#86fe87"/></linearGradient><linearGradient id="f255" gradientUnits="userSpaceOnUse" x1="316.0" y1="314.5" x2="322.5" y2="380.2"><stop offset="0" stop-color="#98ecde"/><stop offset="0.25" stop-color="#95efda"/><stop offset="0.5" stop-color="#8ff3cb"/><stop offset="0.75" stop-color="#89f9b0"/><stop offset="1" stop-color="#82ff88"/></linearGradient></defs><path d="M216.5,389.0L182.7,385.7L150.1,375.8L120.1,359.8L93.8,338.2L72.2,311.9L56.2,281.9L46.3,249.3L43.0,215.5L46.3,181.7L56.2,149.1L72.2,119.1L93.8,92.8L120.1,71.2L150.1,55.2L182.7,45.3L216.5,42.0L250.3,45.3L282.9,55.2L312.9,71.2L339.2,92.8L360.8,119.1L376.8,149.1L386.7,181.7L390.0,215.5L386.7,249.3L376.8,281.9L360.8,311.9L339.2,338.2L312.9,359.8L282.9,375.8L250.3,385.7Z" fill="#8c88f0"/><path d="M316.0,314.5L216.8,390.6L211.9,390.1Z" fill="url(#f0)" shape-rendering="crispEdges"/><path d="M316.0,314.5L212.6,390.2L207.6,389.7Z" fill="url(#f1)" shape-rendering="crispEdges"/><path d="M316.0,314.5L208.3,389.8L203.3,389.3Z" fill="url(#f2)" shape-rendering="crispEdges"/><path d="M316.0,314.5L204.0,389.4L199.1,388.9Z" fill="url(#f3)" shape-rendering="crispEdges"/><path d="M316.0,314.5L199.8,389.0L194.8,388.5Z" fill="url(#f4)" shape-rendering="crispEdges"/><path d="M316.0,314.5L195.5,388.5L190.5,388.0Z" fill="url(#f5)" shape-rendering="crispEdges"/><path d="M316.0,314.5L191.2,388.1L186.3,387.6Z" fill="url(#f6)" shape-rendering="crispEdges"/><path d="M316.0,314.5L187.0,387.7L182.0,387.2Z" fill="url(#f7)" shape-rendering="crispEdges"/><path d="M316.0,314.5L182.7,387.3L177.9,385.9Z" fill="url(#f8)" shape-rendering="crispEdges"/><path d="M316.0,314.5L178.6,386.1L173.8,384.6Z" fill="url(#f9)" shape-rendering="crispEdges"/><path d="M316.0,314.5L174.5,384.8L169.7,383.4Z" fill="url(#f10)" shape-rendering="crispEdges"/><path d="M316.0,314.5L170.4,383.6L165.6,382.2Z" fill="url(#f11)" shape-rendering="crispEdges"/><path d="M316.0,314.5L166.3,382.4L161.5,380.9Z" fill="url(#f12)" shape-rendering="crispEdges"/><path d="M316.0,314.5L162.1,381.1L157.4,379.7Z" fill="url(#f13)" shape-rendering="crispEdges"/><path d="M316.0,314.5L158.0,379.9L153.3,378.4Z" fill="url(#f14)" shape-rendering="crispEdges"/><path d="M316.0,314.5L153.9,378.6L149.2,377.2Z" fill="url(#f15)" shape-rendering="crispEdges"/><path d="M316.0,314.5L149.8,377.4L145.4,375.1Z" fill="url(#f16)" shape-rendering="crispEdges"/><path d="M316.0,314.5L146.0,375.4L141.6,373.1Z" fill="url(#f17)" shape-rendering="crispEdges"/><path d="M316.0,314.5L142.2,373.4L137.8,371.0Z" fill="url(#f18)" shape-rendering="crispEdges"/><path d="M316.0,314.5L138.4,371.4L134.0,369.0Z" fill="url(#f19)" shape-rendering="crispEdges"/><path d="M316.0,314.5L134.7,369.3L130.3,367.0Z" fill="url(#f20)" shape-rendering="crispEdges"/><path d="M316.0,314.5L130.9,367.3L126.5,365.0Z" fill="url(#f21)" shape-rendering="crispEdges"/><path d="M316.0,314.5L127.1,365.3L122.7,362.9Z" fill="url(#f22)" shape-rendering="crispEdges"/><path d="M316.0,314.5L123.3,363.3L118.9,360.9Z" fill="url(#f23)" shape-rendering="crispEdges"/><path d="M316.0,314.5L119.5,361.3L115.6,358.1Z" fill="url(#f24)" shape-rendering="crispEdges"/><path d="M316.0,314.5L116.2,358.6L112.3,355.4Z" fill="url(#f25)" shape-rendering="crispEdges"/><path d="M316.0,314.5L112.9,355.9L109.0,352.7Z" fill="url(#f26)" shape-rendering="crispEdges"/><path d="M316.0,314.5L109.5,353.1L105.7,350.0Z" fill="url(#f27)" shape-rendering="crispEdges"/><path d="M316.0,314.5L106.2,350.4L102.4,347.3Z" fill="url(#f28)" shape-rendering="crispEdges"/><path d="M316.0,314.5L102.9,347.7L99.0,344.5Z" fill="url(#f29)" shape-rendering="crispEdges"/><path d="M316.0,314.5L99.6,345.0L95.7,341.8Z" fill="url(#f30)" shape-rendering="crispEdges"/><path d="M316.0,314.5L96.3,342.3L92.4,339.1Z" fill="url(#f31)" shape-rendering="crispEdges"/><path d="M316.0,314.5L92.9,339.6L89.7,335.7Z" fill="url(#f32)" shape-rendering="crispEdges"/><path d="M316.0,314.5L90.2,336.3L87.0,332.4Z" fill="url(#f33)" shape-rendering="crispEdges"/><path d="M316.0,314.5L87.5,333.0L84.3,329.1Z" fill="url(#f34)" shape-rendering="crispEdges"/><path d="M316.0,314.5L84.7,329.6L81.6,325.8Z" fill="url(#f35)" shape-rendering="crispEdges"/><path d="M316.0,314.5L82.0,326.3L78.9,322.5Z" fill="url(#f36)" shape-rendering="crispEdges"/><path d="M316.0,314.5L79.3,323.0L76.1,319.1Z" fill="url(#f37)" shape-rendering="crispEdges"/><path d="M316.0,314.5L76.6,319.7L73.4,315.8Z" fill="url(#f38)" shape-rendering="crispEdges"/><path d="M316.0,314.5L73.9,316.4L70.7,312.5Z" fill="url(#f39)" shape-rendering="crispEdges"/><path d="M316.0,314.5L71.1,313.1L68.7,308.7Z" fill="url(#f40)" shape-rendering="crispEdges"/><path d="M316.0,314.5L69.1,309.3L66.7,304.9Z" fill="url(#f41)" shape-rendering="crispEdges"/><path d="M316.0,314.5L67.0,305.5L64.7,301.1Z" fill="url(#f42)" shape-rendering="crispEdges"/><path d="M316.0,314.5L65.0,301.7L62.7,297.3Z" fill="url(#f43)" shape-rendering="crispEdges"/><path d="M316.0,314.5L63.0,298.0L60.6,293.6Z" fill="url(#f44)" shape-rendering="crispEdges"/><path d="M316.0,314.5L61.0,294.2L58.6,289.8Z" fill="url(#f45)" shape-rendering="crispEdges"/><path d="M316.0,314.5L58.9,290.4L56.6,286.0Z" fill="url(#f46)" shape-rendering="crispEdges"/><path d="M316.0,314.5L56.9,286.6L54.6,282.2Z" fill="url(#f47)" shape-rendering="crispEdges"/><path d="M316.0,314.5L54.8,282.8L53.4,278.1Z" fill="url(#f48)" shape-rendering="crispEdges"/><path d="M316.0,314.5L53.6,278.7L52.1,274.0Z" fill="url(#f49)" shape-rendering="crispEdges"/><path d="M316.0,314.5L52.3,274.6L50.9,269.9Z" fill="url(#f50)" shape-rendering="crispEdges"/><path d="M316.0,314.5L51.1,270.5L49.6,265.7Z" fill="url(#f51)" shape-rendering="crispEdges"/><path d="M316.0,314.5L49.8,266.4L48.4,261.6Z" fill="url(#f52)" shape-rendering="crispEdges"/><path d="M316.0,314.5L48.6,262.3L47.2,257.5Z" fill="url(#f53)" shape-rendering="crispEdges"/><path d="M316.0,314.5L47.4,258.2L45.9,253.4Z" fill="url(#f54)" shape-rendering="crispEdges"/><path d="M316.0,314.5L46.1,254.1L44.7,249.3Z" fill="url(#f55)" shape-rendering="crispEdges"/><path d="M316.0,314.5L44.8,250.0L44.3,245.0Z" fill="url(#f56)" shape-rendering="crispEdges"/><path d="M316.0,314.5L44.4,245.7L43.9,240.8Z" fill="url(#f57)" shape-rendering="crispEdges"/><path d="M316.0,314.5L44.0,241.5L43.5,236.5Z" fill="url(#f58)" shape-rendering="crispEdges"/><path d="M316.0,314.5L43.5,237.2L43.0,232.2Z" fill="url(#f59)" shape-rendering="crispEdges"/><path d="M316.0,314.5L43.1,232.9L42.6,228.0Z" fill="url(#f60)" shape-rendering="crispEdges"/><path d="M316.0,314.5L42.7,228.7L42.2,223.7Z" fill="url(#f61)" shape-rendering="crispEdges"/><path d="M316.0,314.5L42.3,224.4L41.8,219.4Z" fill="url(#f62)" shape-rendering="crispEdges"/><path d="M316.0,314.5L41.9,220.1L41.4,215.2Z" fill="url(#f63)" shape-rendering="crispEdges"/><path d="M316.0,314.5L41.4,215.8L41.9,210.9Z" fill="url(#f64)" shape-rendering="crispEdges"/><path d="M316.0,314.5L41.8,211.6L42.3,206.6Z" fill="url(#f65)" shape-rendering="crispEdges"/><path d="M316.0,314.5L42.2,207.3L42.7,202.3Z" fill="url(#f66)" shape-rendering="crispEdges"/><path d="M316.0,314.5L42.6,203.0L43.1,198.1Z" fill="url(#f67)" shape-rendering="crispEdges"/><path d="M316.0,314.5L43.0,198.8L43.5,193.8Z" fill="url(#f68)" shape-rendering="crispEdges"/><path d="M316.0,314.5L43.5,194.5L44.0,189.5Z" fill="url(#f69)" shape-rendering="crispEdges"/><path d="M316.0,314.5L43.9,190.2L44.4,185.3Z" fill="url(#f70)" shape-rendering="crispEdges"/><path d="M316.0,314.5L44.3,186.0L44.8,181.0Z" fill="url(#f71)" shape-rendering="crispEdges"/><path d="M316.0,314.5L44.7,181.7L46.1,176.9Z" fill="url(#f72)" shape-rendering="crispEdges"/><path d="M316.0,314.5L45.9,177.6L47.4,172.8Z" fill="url(#f73)" shape-rendering="crispEdges"/><path d="M316.0,314.5L47.2,173.5L48.6,168.7Z" fill="url(#f74)" shape-rendering="crispEdges"/><path d="M316.0,314.5L48.4,169.4L49.8,164.6Z" fill="url(#f75)" shape-rendering="crispEdges"/><path d="M316.0,314.5L49.6,165.3L51.1,160.5Z" fill="url(#f76)" shape-rendering="crispEdges"/><path d="M316.0,314.5L50.9,161.1L52.3,156.4Z" fill="url(#f77)" shape-rendering="crispEdges"/><path d="M316.0,314.5L52.1,157.0L53.6,152.3Z" fill="url(#f78)" shape-rendering="crispEdges"/><path d="M316.0,314.5L53.4,152.9L54.8,148.2Z" fill="url(#f79)" shape-rendering="crispEdges"/><path d="M316.0,314.5L54.6,148.8L56.9,144.4Z" fill="url(#f80)" shape-rendering="crispEdges"/><path d="M316.0,314.5L56.6,145.0L58.9,140.6Z" fill="url(#f81)" shape-rendering="crispEdges"/><path d="M316.0,314.5L58.6,141.2L61.0,136.8Z" fill="url(#f82)" shape-rendering="crispEdges"/><path d="M316.0,314.5L60.6,137.4L63.0,133.0Z" fill="url(#f83)" shape-rendering="crispEdges"/><path d="M316.0,314.5L62.7,133.7L65.0,129.3Z" fill="url(#f84)" shape-rendering="crispEdges"/><path d="M316.0,314.5L64.7,129.9L67.0,125.5Z" fill="url(#f85)" shape-rendering="crispEdges"/><path d="M316.0,314.5L66.7,126.1L69.1,121.7Z" fill="url(#f86)" shape-rendering="crispEdges"/><path d="M316.0,314.5L68.7,122.3L71.1,117.9Z" fill="url(#f87)" shape-rendering="crispEdges"/><path d="M316.0,314.5L70.7,118.5L73.9,114.6Z" fill="url(#f88)" shape-rendering="crispEdges"/><path d="M316.0,314.5L73.4,115.2L76.6,111.3Z" fill="url(#f89)" shape-rendering="crispEdges"/><path d="M316.0,314.5L76.1,111.9L79.3,108.0Z" fill="url(#f90)" shape-rendering="crispEdges"/><path d="M316.0,314.5L78.9,108.5L82.0,104.7Z" fill="url(#f91)" shape-rendering="crispEdges"/><path d="M316.0,314.5L81.6,105.2L84.7,101.4Z" fill="url(#f92)" shape-rendering="crispEdges"/><path d="M316.0,314.5L84.3,101.9L87.5,98.0Z" fill="url(#f93)" shape-rendering="crispEdges"/><path d="M316.0,314.5L87.0,98.6L90.2,94.7Z" fill="url(#f94)" shape-rendering="crispEdges"/><path d="M316.0,314.5L89.7,95.3L92.9,91.4Z" fill="url(#f95)" shape-rendering="crispEdges"/><path d="M316.0,314.5L92.4,91.9L96.3,88.7Z" fill="url(#f96)" shape-rendering="crispEdges"/><path d="M316.0,314.5L95.7,89.2L99.6,86.0Z" fill="url(#f97)" shape-rendering="crispEdges"/><path d="M316.0,314.5L99.0,86.5L102.9,83.3Z" fill="url(#f98)" shape-rendering="crispEdges"/><path d="M316.0,314.5L102.4,83.7L106.2,80.6Z" fill="url(#f99)" shape-rendering="crispEdges"/><path d="M316.0,314.5L105.7,81.0L109.5,77.9Z" fill="url(#f100)" shape-rendering="crispEdges"/><path d="M316.0,314.5L109.0,78.3L112.9,75.1Z" fill="url(#f101)" shape-rendering="crispEdges"/><path d="M316.0,314.5L112.3,75.6L116.2,72.4Z" fill="url(#f102)" shape-rendering="crispEdges"/><path d="M316.0,314.5L115.6,72.9L119.5,69.7Z" fill="url(#f103)" shape-rendering="crispEdges"/><path d="M316.0,314.5L118.9,70.1L123.3,67.7Z" fill="url(#f104)" shape-rendering="crispEdges"/><path d="M316.0,314.5L122.7,68.1L127.1,65.7Z" fill="url(#f105)" shape-rendering="crispEdges"/><path d="M316.0,314.5L126.5,66.0L130.9,63.7Z" fill="url(#f106)" shape-rendering="crispEdges"/><path d="M316.0,314.5L130.3,64.0L134.7,61.7Z" fill="url(#f107)" shape-rendering="crispEdges"/><path d="M316.0,314.5L134.0,62.0L138.4,59.6Z" fill="url(#f108)" shape-rendering="crispEdges"/><path d="M316.0,314.5L137.8,60.0L142.2,57.6Z" fill="url(#f109)" shape-rendering="crispEdges"/><path d="M316.0,314.5L141.6,57.9L146.0,55.6Z" fill="url(#f110)" shape-rendering="crispEdges"/><path d="M316.0,314.5L145.4,55.9L149.8,53.6Z" fill="url(#f111)" shape-rendering="crispEdges"/><path d="M316.0,314.5L149.2,53.8L153.9,52.4Z" fill="url(#f112)" shape-rendering="crispEdges"/><path d="M316.0,314.5L153.3,52.6L158.0,51.1Z" fill="url(#f113)" shape-rendering="crispEdges"/><path d="M316.0,314.5L157.4,51.3L162.1,49.9Z" fill="url(#f114)" shape-rendering="crispEdges"/><path d="M316.0,314.5L161.5,50.1L166.3,48.6Z" fill="url(#f115)" shape-rendering="crispEdges"/><path d="M316.0,314.5L165.6,48.8L170.4,47.4Z" fill="url(#f116)" shape-rendering="crispEdges"/><path d="M316.0,314.5L169.7,47.6L174.5,46.2Z" fill="url(#f117)" shape-rendering="crispEdges"/><path d="M316.0,314.5L173.8,46.4L178.6,44.9Z" fill="url(#f118)" shape-rendering="crispEdges"/><path d="M316.0,314.5L177.9,45.1L182.7,43.7Z" fill="url(#f119)" shape-rendering="crispEdges"/><path d="M316.0,314.5L182.0,43.8L187.0,43.3Z" fill="url(#f120)" shape-rendering="crispEdges"/><path d="M316.0,314.5L186.3,43.4L191.2,42.9Z" fill="url(#f121)" shape-rendering="crispEdges"/><path d="M316.0,314.5L190.5,43.0L195.5,42.5Z" fill="url(#f122)" shape-rendering="crispEdges"/><path d="M316.0,314.5L194.8,42.5L199.8,42.0Z" fill="url(#f123)" shape-rendering="crispEdges"/><path d="M316.0,314.5L199.1,42.1L204.0,41.6Z" fill="url(#f124)" shape-rendering="crispEdges"/><path d="M316.0,314.5L203.3,41.7L208.3,41.2Z" fill="url(#f125)" shape-rendering="crispEdges"/><path d="M316.0,314.5L207.6,41.3L212.6,40.8Z" fill="url(#f126)" shape-rendering="crispEdges"/><path d="M316.0,314.5L211.9,40.9L216.8,40.4Z" fill="url(#f127)" shape-rendering="crispEdges"/><path d="M316.0,314.5L216.2,40.4L221.1,40.9Z" fill="url(#f128)" shape-rendering="crispEdges"/><path d="M316.0,314.5L220.4,40.8L225.4,41.3Z" fill="url(#f129)" shape-rendering="crispEdges"/><path d="M316.0,314.5L224.7,41.2L229.7,41.7Z" fill="url(#f130)" shape-rendering="crispEdges"/><path d="M316.0,314.5L229.0,41.6L233.9,42.1Z" fill="url(#f131)" shape-rendering="crispEdges"/><path d="M316.0,314.5L233.2,42.0L238.2,42.5Z" fill="url(#f132)" shape-rendering="crispEdges"/><path d="M316.0,314.5L237.5,42.5L242.5,43.0Z" fill="url(#f133)" shape-rendering="crispEdges"/><path d="M316.0,314.5L241.8,42.9L246.7,43.4Z" fill="url(#f134)" shape-rendering="crispEdges"/><path d="M316.0,314.5L246.0,43.3L251.0,43.8Z" fill="url(#f135)" shape-rendering="crispEdges"/><path d="M316.0,314.5L250.3,43.7L255.1,45.1Z" fill="url(#f136)" shape-rendering="crispEdges"/><path d="M316.0,314.5L254.4,44.9L259.2,46.4Z" fill="url(#f137)" shape-rendering="crispEdges"/><path d="M316.0,314.5L258.5,46.2L263.3,47.6Z" fill="url(#f138)" shape-rendering="crispEdges"/><path d="M316.0,314.5L262.6,47.4L267.4,48.8Z" fill="url(#f139)" shape-rendering="crispEdges"/><path d="M316.0,314.5L266.7,48.6L271.5,50.1Z" fill="url(#f140)" shape-rendering="crispEdges"/><path d="M316.0,314.5L270.9,49.9L275.6,51.3Z" fill="url(#f141)" shape-rendering="crispEdges"/><path d="M316.0,314.5L275.0,51.1L279.7,52.6Z" fill="url(#f142)" shape-rendering="crispEdges"/><path d="M316.0,314.5L279.1,52.4L283.8,53.8Z" fill="url(#f143)" shape-rendering="crispEdges"/><path d="M316.0,314.5L283.2,53.6L287.6,55.9Z" fill="url(#f144)" shape-rendering="crispEdges"/><path d="M316.0,314.5L287.0,55.6L291.4,57.9Z" fill="url(#f145)" shape-rendering="crispEdges"/><path d="M316.0,314.5L290.8,57.6L295.2,60.0Z" fill="url(#f146)" shape-rendering="crispEdges"/><path d="M316.0,314.5L294.6,59.6L299.0,62.0Z" fill="url(#f147)" shape-rendering="crispEdges"/><path d="M316.0,314.5L298.3,61.7L302.7,64.0Z" fill="url(#f148)" shape-rendering="crispEdges"/><path d="M316.0,314.5L302.1,63.7L306.5,66.0Z" fill="url(#f149)" shape-rendering="crispEdges"/><path d="M316.0,314.5L305.9,65.7L310.3,68.1Z" fill="url(#f150)" shape-rendering="crispEdges"/><path d="M316.0,314.5L309.7,67.7L314.1,70.1Z" fill="url(#f151)" shape-rendering="crispEdges"/><path d="M316.0,314.5L313.5,69.7L317.4,72.9Z" fill="url(#f152)" shape-rendering="crispEdges"/><path d="M316.0,314.5L316.8,72.4L320.7,75.6Z" fill="url(#f153)" shape-rendering="crispEdges"/><path d="M316.0,314.5L320.1,75.1L324.0,78.3Z" fill="url(#f154)" shape-rendering="crispEdges"/><path d="M316.0,314.5L323.5,77.9L327.3,81.0Z" fill="url(#f155)" shape-rendering="crispEdges"/><path d="M316.0,314.5L326.8,80.6L330.6,83.7Z" fill="url(#f156)" shape-rendering="crispEdges"/><path d="M316.0,314.5L330.1,83.3L334.0,86.5Z" fill="url(#f157)" shape-rendering="crispEdges"/><path d="M316.0,314.5L333.4,86.0L337.3,89.2Z" fill="url(#f158)" shape-rendering="crispEdges"/><path d="M316.0,314.5L336.7,88.7L340.6,91.9Z" fill="url(#f159)" shape-rendering="crispEdges"/><path d="M316.0,314.5L340.1,91.4L343.3,95.3Z" fill="url(#f160)" shape-rendering="crispEdges"/><path d="M316.0,314.5L342.8,94.7L346.0,98.6Z" fill="url(#f161)" shape-rendering="crispEdges"/><path d="M316.0,314.5L345.5,98.0L348.7,101.9Z" fill="url(#f162)" shape-rendering="crispEdges"/><path d="M316.0,314.5L348.3,101.4L351.4,105.2Z" fill="url(#f163)" shape-rendering="crispEdges"/><path d="M316.0,314.5L351.0,104.7L354.1,108.5Z" fill="url(#f164)" shape-rendering="crispEdges"/><path d="M316.0,314.5L353.7,108.0L356.9,111.9Z" fill="url(#f165)" shape-rendering="crispEdges"/><path d="M316.0,314.5L356.4,111.3L359.6,115.2Z" fill="url(#f166)" shape-rendering="crispEdges"/><path d="M316.0,314.5L359.1,114.6L362.3,118.5Z" fill="url(#f167)" shape-rendering="crispEdges"/><path d="M316.0,314.5L361.9,117.9L364.3,122.3Z" fill="url(#f168)" shape-rendering="crispEdges"/><path d="M316.0,314.5L363.9,121.7L366.3,126.1Z" fill="url(#f169)" shape-rendering="crispEdges"/><path d="M316.0,314.5L366.0,125.5L368.3,129.9Z" fill="url(#f170)" shape-rendering="crispEdges"/><path d="M316.0,314.5L368.0,129.3L370.3,133.7Z" fill="url(#f171)" shape-rendering="crispEdges"/><path d="M316.0,314.5L370.0,133.0L372.4,137.4Z" fill="url(#f172)" shape-rendering="crispEdges"/><path d="M316.0,314.5L372.0,136.8L374.4,141.2Z" fill="url(#f173)" shape-rendering="crispEdges"/><path d="M316.0,314.5L374.1,140.6L376.4,145.0Z" fill="url(#f174)" shape-rendering="crispEdges"/><path d="M316.0,314.5L376.1,144.4L378.4,148.8Z" fill="url(#f175)" shape-rendering="crispEdges"/><path d="M316.0,314.5L378.2,148.2L379.6,152.9Z" fill="url(#f176)" shape-rendering="crispEdges"/><path d="M316.0,314.5L379.4,152.3L380.9,157.0Z" fill="url(#f177)" shape-rendering="crispEdges"/><path d="M316.0,314.5L380.7,156.4L382.1,161.1Z" fill="url(#f178)" shape-rendering="crispEdges"/><path d="M316.0,314.5L381.9,160.5L383.4,165.3Z" fill="url(#f179)" shape-rendering="crispEdges"/><path d="M316.0,314.5L383.2,164.6L384.6,169.4Z" fill="url(#f180)" shape-rendering="crispEdges"/><path d="M316.0,314.5L384.4,168.7L385.8,173.5Z" fill="url(#f181)" shape-rendering="crispEdges"/><path d="M316.0,314.5L385.6,172.8L387.1,177.6Z" fill="url(#f182)" shape-rendering="crispEdges"/><path d="M316.0,314.5L386.9,176.9L388.3,181.7Z" fill="url(#f183)" shape-rendering="crispEdges"/><path d="M316.0,314.5L388.2,181.0L388.7,186.0Z" fill="url(#f184)" shape-rendering="crispEdges"/><path d="M316.0,314.5L388.6,185.3L389.1,190.2Z" fill="url(#f185)" shape-rendering="crispEdges"/><path d="M316.0,314.5L389.0,189.5L389.5,194.5Z" fill="url(#f186)" shape-rendering="crispEdges"/><path d="M316.0,314.5L389.5,193.8L390.0,198.8Z" fill="url(#f187)" shape-rendering="crispEdges"/><path d="M316.0,314.5L389.9,198.1L390.4,203.0Z" fill="url(#f188)" shape-rendering="crispEdges"/><path d="M316.0,314.5L390.3,202.3L390.8,207.3Z" fill="url(#f189)" shape-rendering="crispEdges"/><path d="M316.0,314.5L390.7,206.6L391.2,211.6Z" fill="url(#f190)" shape-rendering="crispEdges"/><path d="M316.0,314.5L391.1,210.9L391.6,215.8Z" fill="url(#f191)" shape-rendering="crispEdges"/><path d="M316.0,314.5L391.6,215.2L391.1,220.1Z" fill="url(#f192)" shape-rendering="crispEdges"/><path d="M316.0,314.5L391.2,219.4L390.7,224.4Z" fill="url(#f193)" shape-rendering="crispEdges"/><path d="M316.0,314.5L390.8,223.7L390.3,228.7Z" fill="url(#f194)" shape-rendering="crispEdges"/><path d="M316.0,314.5L390.4,228.0L389.9,232.9Z" fill="url(#f195)" shape-rendering="crispEdges"/><path d="M316.0,314.5L390.0,232.2L389.5,237.2Z" fill="url(#f196)" shape-rendering="crispEdges"/><path d="M316.0,314.5L389.5,236.5L389.0,241.5Z" fill="url(#f197)" shape-rendering="crispEdges"/><path d="M316.0,314.5L389.1,240.8L388.6,245.7Z" fill="url(#f198)" shape-rendering="crispEdges"/><path d="M316.0,314.5L388.7,245.0L388.2,250.0Z" fill="url(#f199)" shape-rendering="crispEdges"/><path d="M316.0,314.5L388.3,249.3L386.9,254.1Z" fill="url(#f200)" shape-rendering="crispEdges"/><path d="M316.0,314.5L387.1,253.4L385.6,258.2Z" fill="url(#f201)" shape-rendering="crispEdges"/><path d="M316.0,314.5L385.8,257.5L384.4,262.3Z" fill="url(#f202)" shape-rendering="crispEdges"/><path d="M316.0,314.5L384.6,261.6L383.2,266.4Z" fill="url(#f203)" shape-rendering="crispEdges"/><path d="M316.0,314.5L383.4,265.7L381.9,270.5Z" fill="url(#f204)" shape-rendering="crispEdges"/><path d="M316.0,314.5L382.1,269.9L380.7,274.6Z" fill="url(#f205)" shape-rendering="crispEdges"/><path d="M316.0,314.5L380.9,274.0L379.4,278.7Z" fill="url(#f206)" shape-rendering="crispEdges"/><path d="M316.0,314.5L379.6,278.1L378.2,282.8Z" fill="url(#f207)" shape-rendering="crispEdges"/><path d="M316.0,314.5L378.4,282.2L376.1,286.6Z" fill="url(#f208)" shape-rendering="crispEdges"/><path d="M316.0,314.5L376.4,286.0L374.1,290.4Z" fill="url(#f209)" shape-rendering="crispEdges"/><path d="M316.0,314.5L374.4,289.8L372.0,294.2Z" fill="url(#f210)" shape-rendering="crispEdges"/><path d="M316.0,314.5L372.4,293.6L370.0,298.0Z" fill="url(#f211)" shape-rendering="crispEdges"/><path d="M316.0,314.5L370.3,297.3L368.0,301.7Z" fill="url(#f212)" shape-rendering="crispEdges"/><path d="M316.0,314.5L368.3,301.1L366.0,305.5Z" fill="url(#f213)" shape-rendering="crispEdges"/><path d="M316.0,314.5L366.3,304.9L363.9,309.3Z" fill="url(#f214)" shape-rendering="crispEdges"/><path d="M316.0,314.5L364.3,308.7L361.9,313.1Z" fill="url(#f215)" shape-rendering="crispEdges"/><path d="M316.0,314.5L362.3,312.5L359.1,316.4Z" fill="url(#f216)" shape-rendering="crispEdges"/><path d="M316.0,314.5L359.6,315.8L356.4,319.7Z" fill="url(#f217)" shape-rendering="crispEdges"/><path d="M316.0,314.5L356.9,319.1L353.7,323.0Z" fill="url(#f218)" shape-rendering="crispEdges"/><path d="M316.0,314.5L354.1,322.5L351.0,326.3Z" fill="url(#f219)" shape-rendering="crispEdges"/><path d="M316.0,314.5L351.4,325.8L348.3,329.6Z" fill="url(#f220)" shape-rendering="crispEdges"/><path d="M316.0,314.5L348.7,329.1L345.5,333.0Z" fill="url(#f221)" shape-rendering="crispEdges"/><path d="M316.0,314.5L346.0,332.4L342.8,336.3Z" fill="url(#f222)" shape-rendering="crispEdges"/><path d="M316.0,314.5L343.3,335.7L340.1,339.6Z" fill="url(#f223)" shape-rendering="crispEdges"/><path d="M316.0,314.5L340.6,339.1L336.7,342.3Z" fill="url(#f224)" shape-rendering="crispEdges"/><path d="M316.0,314.5L337.3,341.8L333.4,345.0Z" fill="url(#f225)" shape-rendering="crispEdges"/><path d="M316.0,314.5L334.0,344.5L330.1,347.7Z" fill="url(#f226)" shape-rendering="crispEdges"/><path d="M316.0,314.5L330.6,347.3L326.8,350.4Z" fill="url(#f227)" shape-rendering="crispEdges"/><path d="M316.0,314.5L327.3,350.0L323.5,353.1Z" fill="url(#f228)" shape-rendering="crispEdges"/><path d="M316.0,314.5L324.0,352.7L320.1,355.9Z" fill="url(#f229)" shape-rendering="crispEdges"/><path d="M316.0,314.5L320.7,355.4L316.8,358.6Z" fill="url(#f230)" shape-rendering="crispEdges"/><path d="M316.0,314.5L317.4,358.1L313.5,361.3Z" fill="url(#f231)" shape-rendering="crispEdges"/><path d="M316.0,314.5L314.1,360.9L309.7,363.3Z" fill="url(#f232)" shape-rendering="crispEdges"/><path d="M316.0,314.5L310.3,362.9L305.9,365.3Z" fill="url(#f233)" shape-rendering="crispEdges"/><path d="M316.0,314.5L306.5,365.0L302.1,367.3Z" fill="url(#f234)" shape-rendering="crispEdges"/><path d="M316.0,314.5L302.7,367.0L298.3,369.3Z" fill="url(#f235)" shape-rendering="crispEdges"/><path d="M316.0,314.5L299.0,369.0L294.6,371.4Z" fill="url(#f236)" shape-rendering="crispEdges"/><path d="M316.0,314.5L295.2,371.0L290.8,373.4Z" fill="url(#f237)" shape-rendering="crispEdges"/><path d="M316.0,314.5L291.4,373.1L287.0,375.4Z" fill="url(#f238)" shape-rendering="crispEdges"/><path d="M316.0,314.5L287.6,375.1L283.2,377.4Z" fill="url(#f239)" shape-rendering="crispEdges"/><path d="M316.0,314.5L283.8,377.2L279.1,378.6Z" fill="url(#f240)" shape-rendering="crispEdges"/><path d="M316.0,314.5L279.7,378.4L275.0,379.9Z" fill="url(#f241)" shape-rendering="crispEdges"/><path d="M316.0,314.5L275.6,379.7L270.9,381.1Z" fill="url(#f242)" shape-rendering="crispEdges"/><path d="M316.0,314.5L271.5,380.9L266.7,382.4Z" fill="url(#f243)" shape-rendering="crispEdges"/><path d="M316.0,314.5L267.4,382.2L262.6,383.6Z" fill="url(#f244)" shape-rendering="crispEdges"/><path d="M316.0,314.5L263.3,383.4L258.5,384.8Z" fill="url(#f245)" shape-rendering="crispEdges"/><path d="M316.0,314.5L259.2,384.6L254.4,386.1Z" fill="url(#f246)" shape-rendering="crispEdges"/><path d="M316.0,314.5L255.1,385.9L250.3,387.3Z" fill="url(#f247)" shape-rendering="crispEdges"/><path d="M316.0,314.5L251.0,387.2L246.0,387.7Z" fill="url(#f248)" shape-rendering="crispEdges"/><path d="M316.0,314.5L246.7,387.6L241.8,388.1Z" fill="url(#f249)" shape-rendering="crispEdges"/><path d="M316.0,314.5L242.5,388.0L237.5,388.5Z" fill="url(#f250)" shape-rendering="crispEdges"/><path d="M316.0,314.5L238.2,388.5L233.2,389.0Z" fill="url(#f251)" shape-rendering="crispEdges"/><path d="M316.0,314.5L233.9,388.9L229.0,389.4Z" fill="url(#f252)" shape-rendering="crispEdges"/><path d="M316.0,314.5L229.7,389.3L224.7,389.8Z" fill="url(#f253)" shape-rendering="crispEdges"/><path d="M316.0,314.5L225.4,389.7L220.4,390.2Z" fill="url(#f254)" shape-rendering="crispEdges"/><path d="M316.0,314.5L221.1,390.1L216.2,390.6Z" fill="url(#f255)" shape-rendering="crispEdges"/><path d="M39.0,38.0H394.0V393.0H39.0ZM216.5,389.0L182.7,385.7L150.1,375.8L120.1,359.8L93.8,338.2L72.2,311.9L56.2,281.9L46.3,249.3L43.0,215.5L46.3,181.7L56.2,149.1L72.2,119.1L93.8,92.8L120.1,71.2L150.1,55.2L182.7,45.3L216.5,42.0L250.3,45.3L282.9,55.2L312.9,71.2L339.2,92.8L360.8,119.1L376.8,149.1L386.7,181.7L390.0,215.5L386.7,249.3L376.8,281.9L360.8,311.9L339.2,338.2L312.9,359.8L282.9,375.8L250.3,385.7Z" fill="#8080ff" fill-rule="evenodd"/></svg>
<svg class="a" style="left:0;top:0" width="866" height="866"><path d="M820.0,181.7 L820.0,249.3 L807.0,246.7 L807.0,184.3Z" fill="rgb(255, 120, 144)" stroke="rgb(255, 120, 144)" stroke-width="0.6"/><path d="M807.0,184.3 L807.0,246.7 L770.2,239.4 L770.2,191.6Z" fill="rgb(232, 120, 208)" stroke="rgb(232, 120, 208)" stroke-width="0.6"/><path d="M770.2,191.6 L770.2,239.4 L715.0,228.4 L715.0,202.6Z" fill="rgb(198, 128, 234)" stroke="rgb(198, 128, 234)" stroke-width="0.6"/><path d="M715.0,202.6 L715.0,228.4 L650.0,215.5 L650.0,215.5Z" fill="rgb(152, 128, 253)" stroke="rgb(152, 128, 253)" stroke-width="0.6"/><path d="M820.0,249.3 L794.1,311.8 L783.1,304.5 L807.0,246.7Z" fill="rgb(240, 160, 128)" stroke="rgb(240, 160, 128)" stroke-width="0.6"/><path d="M807.0,246.7 L783.1,304.5 L751.9,283.6 L770.2,239.4Z" fill="rgb(224, 144, 192)" stroke="rgb(224, 144, 192)" stroke-width="0.6"/><path d="M770.2,239.4 L751.9,283.6 L705.1,252.3 L715.0,228.4Z" fill="rgb(193, 155, 234)" stroke="rgb(193, 155, 234)" stroke-width="0.6"/><path d="M715.0,228.4 L705.1,252.3 L650.0,215.5 L650.0,215.5Z" fill="rgb(150, 137, 253)" stroke="rgb(150, 137, 253)" stroke-width="0.6"/><path d="M794.1,311.8 L746.3,359.6 L739.0,348.6 L783.1,304.5Z" fill="rgb(216, 224, 112)" stroke="rgb(216, 224, 112)" stroke-width="0.6"/><path d="M783.1,304.5 L739.0,348.6 L718.1,317.4 L751.9,283.6Z" fill="rgb(202, 202, 198)" stroke="rgb(202, 202, 198)" stroke-width="0.6"/><path d="M751.9,283.6 L718.1,317.4 L686.8,270.6 L705.1,252.3Z" fill="rgb(178, 178, 234)" stroke="rgb(178, 178, 234)" stroke-width="0.6"/><path d="M705.1,252.3 L686.8,270.6 L650.0,215.5 L650.0,215.5Z" fill="rgb(145, 145, 253)" stroke="rgb(145, 145, 253)" stroke-width="0.6"/><path d="M746.3,359.6 L683.8,385.5 L681.2,372.5 L739.0,348.6Z" fill="rgb(160, 236, 128)" stroke="rgb(160, 236, 128)" stroke-width="0.6"/><path d="M739.0,348.6 L681.2,372.5 L673.9,335.7 L718.1,317.4Z" fill="rgb(168, 225, 198)" stroke="rgb(168, 225, 198)" stroke-width="0.6"/><path d="M718.1,317.4 L673.9,335.7 L662.9,280.5 L686.8,270.6Z" fill="rgb(155, 193, 234)" stroke="rgb(155, 193, 234)" stroke-width="0.6"/><path d="M686.8,270.6 L662.9,280.5 L650.0,215.5 L650.0,215.5Z" fill="rgb(137, 150, 253)" stroke="rgb(137, 150, 253)" stroke-width="0.6"/><path d="M683.8,385.5 L616.2,385.5 L618.8,372.5 L681.2,372.5Z" fill="rgb(120, 240, 152)" stroke="rgb(120, 240, 152)" stroke-width="0.6"/><path d="M681.2,372.5 L618.8,372.5 L626.1,335.7 L673.9,335.7Z" fill="rgb(128, 234, 198)" stroke="rgb(128, 234, 198)" stroke-width="0.6"/><path d="M673.9,335.7 L626.1,335.7 L637.1,280.5 L662.9,280.5Z" fill="rgb(128, 198, 234)" stroke="rgb(128, 198, 234)" stroke-width="0.6"/><path d="M662.9,280.5 L637.1,280.5 L650.0,215.5 L650.0,215.5Z" fill="rgb(128, 152, 253)" stroke="rgb(128, 152, 253)" stroke-width="0.6"/><path d="M616.2,385.5 L553.7,359.6 L561.0,348.6 L618.8,372.5Z" fill="rgb(96, 228, 168)" stroke="rgb(96, 228, 168)" stroke-width="0.6"/><path d="M618.8,372.5 L561.0,348.6 L581.9,317.4 L626.1,335.7Z" fill="rgb(87, 225, 198)" stroke="rgb(87, 225, 198)" stroke-width="0.6"/><path d="M626.1,335.7 L581.9,317.4 L613.2,270.6 L637.1,280.5Z" fill="rgb(100, 193, 234)" stroke="rgb(100, 193, 234)" stroke-width="0.6"/><path d="M637.1,280.5 L613.2,270.6 L650.0,215.5 L650.0,215.5Z" fill="rgb(118, 150, 253)" stroke="rgb(118, 150, 253)" stroke-width="0.6"/><path d="M553.7,359.6 L505.9,311.8 L516.9,304.5 L561.0,348.6Z" fill="rgb(39, 216, 152)" stroke="rgb(39, 216, 152)" stroke-width="0.6"/><path d="M561.0,348.6 L516.9,304.5 L548.1,283.6 L581.9,317.4Z" fill="rgb(53, 202, 198)" stroke="rgb(53, 202, 198)" stroke-width="0.6"/><path d="M581.9,317.4 L548.1,283.6 L594.9,252.3 L613.2,270.6Z" fill="rgb(77, 178, 234)" stroke="rgb(77, 178, 234)" stroke-width="0.6"/><path d="M613.2,270.6 L594.9,252.3 L650.0,215.5 L650.0,215.5Z" fill="rgb(110, 145, 253)" stroke="rgb(110, 145, 253)" stroke-width="0.6"/><path d="M505.9,311.8 L480.0,249.3 L493.0,246.7 L516.9,304.5Z" fill="rgb(12, 175, 152)" stroke="rgb(12, 175, 152)" stroke-width="0.6"/><path d="M516.9,304.5 L493.0,246.7 L529.8,239.4 L548.1,283.6Z" fill="rgb(30, 168, 198)" stroke="rgb(30, 168, 198)" stroke-width="0.6"/><path d="M548.1,283.6 L529.8,239.4 L585.0,228.4 L594.9,252.3Z" fill="rgb(62, 155, 234)" stroke="rgb(62, 155, 234)" stroke-width="0.6"/><path d="M594.9,252.3 L585.0,228.4 L650.0,215.5 L650.0,215.5Z" fill="rgb(105, 137, 253)" stroke="rgb(105, 137, 253)" stroke-width="0.6"/><path d="M480.0,249.3 L480.0,181.7 L493.0,184.3 L493.0,246.7Z" fill="rgb(2, 128, 152)" stroke="rgb(2, 128, 152)" stroke-width="0.6"/><path d="M493.0,246.7 L493.0,184.3 L529.8,191.6 L529.8,239.4Z" fill="rgb(21, 128, 198)" stroke="rgb(21, 128, 198)" stroke-width="0.6"/><path d="M529.8,239.4 L529.8,191.6 L585.0,202.6 L585.0,228.4Z" fill="rgb(57, 128, 234)" stroke="rgb(57, 128, 234)" stroke-width="0.6"/><path d="M585.0,228.4 L585.0,202.6 L650.0,215.5 L650.0,215.5Z" fill="rgb(103, 128, 253)" stroke="rgb(103, 128, 253)" stroke-width="0.6"/><path d="M480.0,181.7 L505.9,119.2 L516.9,126.5 L493.0,184.3Z" fill="rgb(12, 80, 152)" stroke="rgb(12, 80, 152)" stroke-width="0.6"/><path d="M493.0,184.3 L516.9,126.5 L548.1,147.4 L529.8,191.6Z" fill="rgb(30, 87, 198)" stroke="rgb(30, 87, 198)" stroke-width="0.6"/><path d="M529.8,191.6 L548.1,147.4 L594.9,178.7 L585.0,202.6Z" fill="rgb(62, 100, 234)" stroke="rgb(62, 100, 234)" stroke-width="0.6"/><path d="M585.0,202.6 L594.9,178.7 L650.0,215.5 L650.0,215.5Z" fill="rgb(105, 118, 253)" stroke="rgb(105, 118, 253)" stroke-width="0.6"/><path d="M505.9,119.2 L553.7,71.4 L561.0,82.4 L516.9,126.5Z" fill="rgb(39, 39, 152)" stroke="rgb(39, 39, 152)" stroke-width="0.6"/><path d="M516.9,126.5 L561.0,82.4 L581.9,113.6 L548.1,147.4Z" fill="rgb(53, 53, 198)" stroke="rgb(53, 53, 198)" stroke-width="0.6"/><path d="M548.1,147.4 L581.9,113.6 L613.2,160.4 L594.9,178.7Z" fill="rgb(77, 77, 234)" stroke="rgb(77, 77, 234)" stroke-width="0.6"/><path d="M594.9,178.7 L613.2,160.4 L650.0,215.5 L650.0,215.5Z" fill="rgb(110, 110, 253)" stroke="rgb(110, 110, 253)" stroke-width="0.6"/><path d="M553.7,71.4 L616.2,45.5 L618.8,58.5 L561.0,82.4Z" fill="rgb(80, 12, 152)" stroke="rgb(80, 12, 152)" stroke-width="0.6"/><path d="M561.0,82.4 L618.8,58.5 L626.1,95.3 L581.9,113.6Z" fill="rgb(87, 30, 198)" stroke="rgb(87, 30, 198)" stroke-width="0.6"/><path d="M581.9,113.6 L626.1,95.3 L637.1,150.5 L613.2,160.4Z" fill="rgb(100, 62, 234)" stroke="rgb(100, 62, 234)" stroke-width="0.6"/><path d="M613.2,160.4 L637.1,150.5 L650.0,215.5 L650.0,215.5Z" fill="rgb(118, 105, 253)" stroke="rgb(118, 105, 253)" stroke-width="0.6"/><path d="M616.2,45.5 L683.8,45.5 L681.2,58.5 L618.8,58.5Z" fill="rgb(127, 2, 152)" stroke="rgb(127, 2, 152)" stroke-width="0.6"/><path d="M618.8,58.5 L681.2,58.5 L673.9,95.3 L626.1,95.3Z" fill="rgb(127, 21, 198)" stroke="rgb(127, 21, 198)" stroke-width="0.6"/><path d="M626.1,95.3 L673.9,95.3 L662.9,150.5 L637.1,150.5Z" fill="rgb(127, 57, 234)" stroke="rgb(127, 57, 234)" stroke-width="0.6"/><path d="M637.1,150.5 L662.9,150.5 L650.0,215.5 L650.0,215.5Z" fill="rgb(128, 103, 253)" stroke="rgb(128, 103, 253)" stroke-width="0.6"/><path d="M683.8,45.5 L746.3,71.4 L739.0,82.4 L681.2,58.5Z" fill="rgb(175, 12, 152)" stroke="rgb(175, 12, 152)" stroke-width="0.6"/><path d="M681.2,58.5 L739.0,82.4 L718.1,113.6 L673.9,95.3Z" fill="rgb(168, 30, 198)" stroke="rgb(168, 30, 198)" stroke-width="0.6"/><path d="M673.9,95.3 L718.1,113.6 L686.8,160.4 L662.9,150.5Z" fill="rgb(155, 62, 234)" stroke="rgb(155, 62, 234)" stroke-width="0.6"/><path d="M662.9,150.5 L686.8,160.4 L650.0,215.5 L650.0,215.5Z" fill="rgb(137, 105, 253)" stroke="rgb(137, 105, 253)" stroke-width="0.6"/><path d="M746.3,71.4 L794.1,119.2 L783.1,126.5 L739.0,82.4Z" fill="rgb(208, 48, 176)" stroke="rgb(208, 48, 176)" stroke-width="0.6"/><path d="M739.0,82.4 L783.1,126.5 L751.9,147.4 L718.1,113.6Z" fill="rgb(202, 53, 198)" stroke="rgb(202, 53, 198)" stroke-width="0.6"/><path d="M718.1,113.6 L751.9,147.4 L705.1,178.7 L686.8,160.4Z" fill="rgb(178, 77, 234)" stroke="rgb(178, 77, 234)" stroke-width="0.6"/><path d="M686.8,160.4 L705.1,178.7 L650.0,215.5 L650.0,215.5Z" fill="rgb(145, 110, 253)" stroke="rgb(145, 110, 253)" stroke-width="0.6"/><path d="M794.1,119.2 L820.0,181.7 L807.0,184.3 L783.1,126.5Z" fill="rgb(240, 96, 184)" stroke="rgb(240, 96, 184)" stroke-width="0.6"/><path d="M783.1,126.5 L807.0,184.3 L770.2,191.6 L751.9,147.4Z" fill="rgb(224, 96, 216)" stroke="rgb(224, 96, 216)" stroke-width="0.6"/><path d="M751.9,147.4 L770.2,191.6 L715.0,202.6 L705.1,178.7Z" fill="rgb(193, 100, 234)" stroke="rgb(193, 100, 234)" stroke-width="0.6"/><path d="M705.1,178.7 L715.0,202.6 L650.0,215.5 L650.0,215.5Z" fill="rgb(150, 118, 253)" stroke="rgb(150, 118, 253)" stroke-width="0.6"/>
<path d="M155.3,464.8 L216.9,526.4 L94.0,649.0 L32.8,587.3Z" fill="#5e5eee"/>
<path d="M278.0,465.5 L400.3,587.3 L339.0,648.6 L216.9,526.4Z" fill="#d65eee"/>
<path d="M32.8,709.8 L94.0,649.0 L216.9,771.4 L155.3,833.0Z" fill="#5edcee"/>
<path d="M339.0,648.6 L400.3,709.8 L278.1,833.0 L216.9,771.4Z" fill="#9a9aec"/>
</svg>
<div class="a" style="left:563px;top:476px;width:174px;height:86.5px;background:#ab4bef"></div>
<div class="a" style="left:476px;top:562.5px;width:87px;height:173.5px;background:#4badef"></div>
<div class="a" style="left:737px;top:562.5px;width:86.5px;height:173.5px;background:#ef7fef"></div>
<div class="a" style="left:563px;top:736px;width:174px;height:86.5px;background:#7fefef"></div>
</div>
</div>
<div class="a" style="left:1626px;top:127px;width:14px;height:947px;background:#333"></div>
<div class="a" style="left:116px;top:1062px;width:1524px;height:12px;background:#333"></div>
<div class="a" style="left:96px;top:107px;width:1542px;height:20px;background:#393939"></div>
<div class="a" style="left:96px;top:127px;width:20px;height:946px;background:#393939"></div>
<div class="t" style="left:101px;top:114.5px;font-size:10px;color:#bbb">px</div>
<svg class="a" style="left:96px;top:107px" width="1542" height="20"><path d="M25.5,18V20M30.5,16V20M36.5,18V20M41.5,12V20M46.5,18V20M52.5,16V20M57.5,18V20M62.5,16V20M67.5,18V20M73.5,16V20M78.5,18V20M83.5,16V20M89.5,18V20M94.5,12V20M99.5,18V20M104.5,16V20M110.5,18V20M115.5,16V20M120.5,18V20M126.5,16V20M131.5,18V20M136.5,16V20M141.5,18V20M147.5,12V20M152.5,18V20M157.5,16V20M163.5,18V20M168.5,16V20M173.5,18V20M178.5,16V20M184.5,18V20M189.5,16V20M194.5,18V20M199.5,12V20M205.5,18V20M210.5,16V20M215.5,18V20M221.5,16V20M226.5,18V20M231.5,16V20M236.5,18V20M242.5,16V20M247.5,18V20M252.5,12V20M258.5,18V20M263.5,16V20M268.5,18V20M273.5,16V20M279.5,18V20M284.5,16V20M289.5,18V20M295.5,16V20M300.5,18V20M305.5,12V20M310.5,18V20M316.5,16V20M321.5,18V20M326.5,16V20M332.5,18V20M337.5,16V20M342.5,18V20M347.5,16V20M353.5,18V20M358.5,12V20M363.5,18V20M369.5,16V20M374.5,18V20M379.5,16V20M384.5,18V20M390.5,16V20M395.5,18V20M400.5,16V20M406.5,18V20M411.5,12V20M416.5,18V20M421.5,16V20M427.5,18V20M432.5,16V20M437.5,18V20M443.5,16V20M448.5,18V20M453.5,16V20M458.5,18V20M464.5,12V20M469.5,18V20M474.5,16V20M480.5,18V20M485.5,16V20M490.5,18V20M495.5,16V20M501.5,18V20M506.5,16V20M511.5,18V20M517.5,12V20M522.5,18V20M527.5,16V20M532.5,18V20M538.5,16V20M543.5,18V20M548.5,16V20M553.5,18V20M559.5,16V20M564.5,18V20M569.5,12V20M575.5,18V20M580.5,16V20M585.5,18V20M590.5,16V20M596.5,18V20M601.5,16V20M606.5,18V20M612.5,16V20M617.5,18V20M622.5,12V20M627.5,18V20M633.5,16V20M638.5,18V20M643.5,16V20M649.5,18V20M654.5,16V20M659.5,18V20M664.5,16V20M670.5,18V20M675.5,12V20M680.5,18V20M686.5,16V20M691.5,18V20M696.5,16V20M701.5,18V20M707.5,16V20M712.5,18V20M717.5,16V20M723.5,18V20M728.5,12V20M733.5,18V20M738.5,16V20M744.5,18V20M749.5,16V20M754.5,18V20M760.5,16V20M765.5,18V20M770.5,16V20M775.5,18V20M781.5,12V20M786.5,18V20M791.5,16V20M797.5,18V20M802.5,16V20M807.5,18V20M812.5,16V20M818.5,18V20M823.5,16V20M828.5,18V20M834.5,12V20M839.5,18V20M844.5,16V20M849.5,18V20M855.5,16V20M860.5,18V20M865.5,16V20M870.5,18V20M876.5,16V20M881.5,18V20M886.5,12V20M892.5,18V20M897.5,16V20M902.5,18V20M907.5,16V20M913.5,18V20M918.5,16V20M923.5,18V20M929.5,16V20M934.5,18V20M939.5,12V20M944.5,18V20M950.5,16V20M955.5,18V20M960.5,16V20M966.5,18V20M971.5,16V20M976.5,18V20M981.5,16V20M987.5,18V20M992.5,12V20M997.5,18V20M1003.5,16V20M1008.5,18V20M1013.5,16V20M1018.5,18V20M1024.5,16V20M1029.5,18V20M1034.5,16V20M1040.5,18V20M1045.5,12V20M1050.5,18V20M1055.5,16V20M1061.5,18V20M1066.5,16V20M1071.5,18V20M1077.5,16V20M1082.5,18V20M1087.5,16V20M1092.5,18V20M1098.5,12V20M1103.5,18V20M1108.5,16V20M1114.5,18V20M1119.5,16V20M1124.5,18V20M1129.5,16V20M1135.5,18V20M1140.5,16V20M1145.5,18V20M1151.5,12V20M1156.5,18V20M1161.5,16V20M1166.5,18V20M1172.5,16V20M1177.5,18V20M1182.5,16V20M1188.5,18V20M1193.5,16V20M1198.5,18V20M1203.5,12V20M1209.5,18V20M1214.5,16V20M1219.5,18V20M1224.5,16V20M1230.5,18V20M1235.5,16V20M1240.5,18V20M1246.5,16V20M1251.5,18V20M1256.5,12V20M1261.5,18V20M1267.5,16V20M1272.5,18V20M1277.5,16V20M1283.5,18V20M1288.5,16V20M1293.5,18V20M1298.5,16V20M1304.5,18V20M1309.5,12V20M1314.5,18V20M1320.5,16V20M1325.5,18V20M1330.5,16V20M1335.5,18V20M1341.5,16V20M1346.5,18V20M1351.5,16V20M1357.5,18V20M1362.5,12V20M1367.5,18V20M1372.5,16V20M1378.5,18V20M1383.5,16V20M1388.5,18V20M1394.5,16V20M1399.5,18V20M1404.5,16V20M1409.5,18V20M1415.5,12V20M1420.5,18V20M1425.5,16V20M1431.5,18V20M1436.5,16V20M1441.5,18V20M1446.5,16V20M1452.5,18V20M1457.5,16V20M1462.5,18V20M1468.5,12V20M1473.5,18V20M1478.5,16V20M1483.5,18V20M1489.5,16V20M1494.5,18V20M1499.5,16V20M1505.5,18V20M1510.5,16V20M1515.5,18V20M1520.5,12V20M1526.5,18V20M1531.5,16V20M1536.5,18V20" stroke="#d4d4d4" stroke-width="1"/><path d="M174.5,0V20" stroke="#f4f4f4" stroke-width="1"/></svg>
<div class="t" style="left:106.99000000000001px;top:110px;width:60px;text-align:center;font-size:10px;color:#c8c8c8">-3000</div>
<div class="t" style="left:159.825px;top:110px;width:60px;text-align:center;font-size:10px;color:#c8c8c8">-2500</div>
<div class="t" style="left:212.66px;top:110px;width:60px;text-align:center;font-size:10px;color:#c8c8c8">-2000</div>
<div class="t" style="left:265.495px;top:110px;width:60px;text-align:center;font-size:10px;color:#c8c8c8">-1500</div>
<div class="t" style="left:318.33px;top:110px;width:60px;text-align:center;font-size:10px;color:#c8c8c8">-1000</div>
<div class="t" style="left:371.165px;top:110px;width:60px;text-align:center;font-size:10px;color:#c8c8c8">-500</div>
<div class="t" style="left:424.0px;top:110px;width:60px;text-align:center;font-size:10px;color:#c8c8c8">0</div>
<div class="t" style="left:476.835px;top:110px;width:60px;text-align:center;font-size:10px;color:#c8c8c8">500</div>
<div class="t" style="left:529.67px;top:110px;width:60px;text-align:center;font-size:10px;color:#c8c8c8">1000</div>
<div class="t" style="left:582.505px;top:110px;width:60px;text-align:center;font-size:10px;color:#c8c8c8">1500</div>
<div class="t" style="left:635.34px;top:110px;width:60px;text-align:center;font-size:10px;color:#c8c8c8">2000</div>
<div class="t" style="left:688.175px;top:110px;width:60px;text-align:center;font-size:10px;color:#c8c8c8">2500</div>
<div class="t" style="left:741.01px;top:110px;width:60px;text-align:center;font-size:10px;color:#c8c8c8">3000</div>
<div class="t" style="left:793.845px;top:110px;width:60px;text-align:center;font-size:10px;color:#c8c8c8">3500</div>
<div class="t" style="left:846.6800000000001px;top:110px;width:60px;text-align:center;font-size:10px;color:#c8c8c8">4000</div>
<div class="t" style="left:899.515px;top:110px;width:60px;text-align:center;font-size:10px;color:#c8c8c8">4500</div>
<div class="t" style="left:952.35px;top:110px;width:60px;text-align:center;font-size:10px;color:#c8c8c8">5000</div>
<div class="t" style="left:1005.185px;top:110px;width:60px;text-align:center;font-size:10px;color:#c8c8c8">5500</div>
<div class="t" style="left:1058.02px;top:110px;width:60px;text-align:center;font-size:10px;color:#c8c8c8">6000</div>
<div class="t" style="left:1110.855px;top:110px;width:60px;text-align:center;font-size:10px;color:#c8c8c8">6500</div>
<div class="t" style="left:1163.69px;top:110px;width:60px;text-align:center;font-size:10px;color:#c8c8c8">7000</div>
<div class="t" style="left:1216.525px;top:110px;width:60px;text-align:center;font-size:10px;color:#c8c8c8">7500</div>
<div class="t" style="left:1269.3600000000001px;top:110px;width:60px;text-align:center;font-size:10px;color:#c8c8c8">8000</div>
<div class="t" style="left:1322.1950000000002px;top:110px;width:60px;text-align:center;font-size:10px;color:#c8c8c8">8500</div>
<div class="t" style="left:1375.03px;top:110px;width:60px;text-align:center;font-size:10px;color:#c8c8c8">9000</div>
<div class="t" style="left:1427.865px;top:110px;width:60px;text-align:center;font-size:10px;color:#c8c8c8">9500</div>
<div class="t" style="left:1480.7px;top:110px;width:60px;text-align:center;font-size:10px;color:#c8c8c8">10000</div>
<div class="t" style="left:1533.535px;top:110px;width:60px;text-align:center;font-size:10px;color:#c8c8c8">10500</div>
<div class="t" style="left:1586.37px;top:110px;width:60px;text-align:center;font-size:10px;color:#c8c8c8">11000</div>
<svg class="a" style="left:96px;top:127px" width="20" height="946"><path d="M16,4.5H20M18,10.5H20M16,15.5H20M18,20.5H20M16,25.5H20M18,31.5H20M12,36.5H20M18,41.5H20M16,47.5H20M18,52.5H20M16,57.5H20M18,62.5H20M16,68.5H20M18,73.5H20M16,78.5H20M18,84.5H20M12,89.5H20M18,94.5H20M16,99.5H20M18,105.5H20M16,110.5H20M18,115.5H20M16,121.5H20M18,126.5H20M16,131.5H20M18,136.5H20M12,142.5H20M18,147.5H20M16,152.5H20M18,158.5H20M16,163.5H20M18,168.5H20M16,173.5H20M18,179.5H20M16,184.5H20M18,189.5H20M12,195.5H20M18,200.5H20M16,205.5H20M18,210.5H20M16,216.5H20M18,221.5H20M16,226.5H20M18,231.5H20M16,237.5H20M18,242.5H20M12,247.5H20M18,253.5H20M16,258.5H20M18,263.5H20M16,268.5H20M18,274.5H20M16,279.5H20M18,284.5H20M16,290.5H20M18,295.5H20M12,300.5H20M18,305.5H20M16,311.5H20M18,316.5H20M16,321.5H20M18,327.5H20M16,332.5H20M18,337.5H20M16,342.5H20M18,348.5H20M12,353.5H20M18,358.5H20M16,364.5H20M18,369.5H20M16,374.5H20M18,379.5H20M16,385.5H20M18,390.5H20M16,395.5H20M18,401.5H20M12,406.5H20M18,411.5H20M16,416.5H20M18,422.5H20M16,427.5H20M18,432.5H20M16,438.5H20M18,443.5H20M16,448.5H20M18,453.5H20M12,459.5H20M18,464.5H20M16,469.5H20M18,475.5H20M16,480.5H20M18,485.5H20M16,490.5H20M18,496.5H20M16,501.5H20M18,506.5H20M12,512.5H20M18,517.5H20M16,522.5H20M18,527.5H20M16,533.5H20M18,538.5H20M16,543.5H20M18,548.5H20M16,554.5H20M18,559.5H20M12,564.5H20M18,570.5H20M16,575.5H20M18,580.5H20M16,585.5H20M18,591.5H20M16,596.5H20M18,601.5H20M16,607.5H20M18,612.5H20M12,617.5H20M18,622.5H20M16,628.5H20M18,633.5H20M16,638.5H20M18,644.5H20M16,649.5H20M18,654.5H20M16,659.5H20M18,665.5H20M12,670.5H20M18,675.5H20M16,681.5H20M18,686.5H20M16,691.5H20M18,696.5H20M16,702.5H20M18,707.5H20M16,712.5H20M18,718.5H20M12,723.5H20M18,728.5H20M16,733.5H20M18,739.5H20M16,744.5H20M18,749.5H20M16,755.5H20M18,760.5H20M16,765.5H20M18,770.5H20M12,776.5H20M18,781.5H20M16,786.5H20M18,792.5H20M16,797.5H20M18,802.5H20M16,807.5H20M18,813.5H20M16,818.5H20M18,823.5H20M12,829.5H20M18,834.5H20M16,839.5H20M18,844.5H20M16,850.5H20M18,855.5H20M16,860.5H20M18,866.5H20M16,871.5H20M18,876.5H20M12,881.5H20M18,887.5H20M16,892.5H20M18,897.5H20M16,902.5H20M18,908.5H20M16,913.5H20M18,918.5H20M16,924.5H20M18,929.5H20M12,934.5H20M18,939.5H20M16,945.5H20" stroke="#d4d4d4" stroke-width="1"/></svg>
<div class="t" style="left:73px;top:157.5px;width:60px;text-align:center;font-size:10px;color:#c8c8c8;transform:rotate(-90deg)">0</div>
<div class="t" style="left:73px;top:210.335px;width:60px;text-align:center;font-size:10px;color:#c8c8c8;transform:rotate(-90deg)">500</div>
<div class="t" style="left:73px;top:263.17px;width:60px;text-align:center;font-size:10px;color:#c8c8c8;transform:rotate(-90deg)">1000</div>
<div class="t" style="left:73px;top:316.005px;width:60px;text-align:center;font-size:10px;color:#c8c8c8;transform:rotate(-90deg)">1500</div>
<div class="t" style="left:73px;top:368.84000000000003px;width:60px;text-align:center;font-size:10px;color:#c8c8c8;transform:rotate(-90deg)">2000</div>
<div class="t" style="left:73px;top:421.675px;width:60px;text-align:center;font-size:10px;color:#c8c8c8;transform:rotate(-90deg)">2500</div>
<div class="t" style="left:73px;top:474.51px;width:60px;text-align:center;font-size:10px;color:#c8c8c8;transform:rotate(-90deg)">3000</div>
<div class="t" style="left:73px;top:527.345px;width:60px;text-align:center;font-size:10px;color:#c8c8c8;transform:rotate(-90deg)">3500</div>
<div class="t" style="left:73px;top:580.1800000000001px;width:60px;text-align:center;font-size:10px;color:#c8c8c8;transform:rotate(-90deg)">4000</div>
<div class="t" style="left:73px;top:633.015px;width:60px;text-align:center;font-size:10px;color:#c8c8c8;transform:rotate(-90deg)">4500</div>
<div class="t" style="left:73px;top:685.85px;width:60px;text-align:center;font-size:10px;color:#c8c8c8;transform:rotate(-90deg)">5000</div>
<div class="t" style="left:73px;top:738.685px;width:60px;text-align:center;font-size:10px;color:#c8c8c8;transform:rotate(-90deg)">5500</div>
<div class="t" style="left:73px;top:791.52px;width:60px;text-align:center;font-size:10px;color:#c8c8c8;transform:rotate(-90deg)">6000</div>
<div class="t" style="left:73px;top:844.355px;width:60px;text-align:center;font-size:10px;color:#c8c8c8;transform:rotate(-90deg)">6500</div>
<div class="t" style="left:73px;top:897.19px;width:60px;text-align:center;font-size:10px;color:#c8c8c8;transform:rotate(-90deg)">7000</div>
<div class="t" style="left:73px;top:950.025px;width:60px;text-align:center;font-size:10px;color:#c8c8c8;transform:rotate(-90deg)">7500</div>
<div class="t" style="left:73px;top:1002.86px;width:60px;text-align:center;font-size:10px;color:#c8c8c8;transform:rotate(-90deg)">8000</div>
<div class="t" style="left:73px;top:1055.6950000000002px;width:60px;text-align:center;font-size:10px;color:#c8c8c8;transform:rotate(-90deg)">8500</div>
<div class="a" style="left:1640px;top:107px;width:335px;height:22px;background:#2d2d2d"></div>
<div class="a" style="left:1640px;top:129px;width:335px;height:211px;background:#404040"></div>
<div class="a" style="left:1659px;top:109px;width:38px;height:20px;background:#404040"></div>
<svg class="a" style="left:1645px;top:112px" width="10" height="14"><path d="M3.5,2V12M6.5,2V12" stroke="#555" stroke-width="1"/></svg>
<div class="t" style="left:1662px;top:113.5px;font-size:10.8px;color:#e8e8e8;">Colour</div>
<div class="t" style="left:1702px;top:113.5px;font-size:10.8px;color:#8a8a8a;">Stroke</div>
<div class="t" style="left:1742px;top:113.5px;font-size:10.8px;color:#8a8a8a;">Swatches</div>
<div class="t" style="left:1797px;top:113.5px;font-size:10.8px;color:#8a8a8a;">Brushes</div>
<div class="t" style="left:1845px;top:113.5px;font-size:10.8px;color:#8a8a8a;">Appearance</div>
<div class="a" style="left:1738px;top:114.5px;width:1px;height:10px;background:#4a4a4a"></div>
<div class="a" style="left:1792.5px;top:114.5px;width:1px;height:10px;background:#4a4a4a"></div>
<div class="a" style="left:1840.5px;top:114.5px;width:1px;height:10px;background:#4a4a4a"></div>
<svg class="a" style="left:1958px;top:112px" width="16" height="12"><path d="M1,1.5H11M1,4H11M1,6.5H11M1,9H11" stroke="#ccc" stroke-width="1"/><path d="M11.5,8.5L15.5,8.5L13.5,11Z" fill="#ccc"/></svg>
<svg class="a" style="left:1640px;top:128px" width="100" height="52"><defs><radialGradient id="rg" cx="0.5" cy="0.5" r="0.5"><stop offset="0.5" stop-color="#1a1a1a"/><stop offset="0.75" stop-color="#000"/><stop offset="1" stop-color="#000"/></radialGradient></defs><circle cx="22.4" cy="22.1" r="13.2" fill="#000" stroke="#555" stroke-width="0.8"/><circle cx="22.4" cy="22.1" r="6.4" fill="#404040" stroke="#5a5a5a" stroke-width="0.8"/><circle cx="33" cy="32.7" r="12.6" fill="#ebebeb" stroke="#404040" stroke-width="1.2"/><circle cx="33" cy="32.7" r="13.4" fill="none" stroke="#5e5e5e" stroke-width="0.8"/><circle cx="13.3" cy="42.3" r="5" fill="#fff" stroke="#000" stroke-width="1"/><path d="M10,45.8L16.8,38.8" stroke="#ff1a1a" stroke-width="1.2"/><path d="M38,10.5 C41.5,10.5 45.5,13 45.5,18.5" stroke="#d0d0d0" stroke-width="1.3" fill="none"/><path d="M39.2,8 L36.5,10.5 L39.5,13 M43,17 L45.5,19.5 L47.8,16.8" stroke="#d0d0d0" stroke-width="1.3" fill="none"/><path d="M57.5,24.5 L66,16 L68.5,18.5 L60,27Z" fill="#a8a8a8" stroke="#222" stroke-width="0.6"/><path d="M57,25 L56.5,25.5" stroke="#ccc" stroke-width="1"/><path d="M64.5,15.5 L67,13.5 C66,12 67,10 69,10 C71.5,10 73,12 72.5,14 C72,15.5 70.5,15.5 70,15.5 L69,18Z" fill="#d9a441" stroke="#6a4a10" stroke-width="0.5"/><circle cx="82.4" cy="17" r="7.2" fill="#000"/><circle cx="82.4" cy="17" r="7.8" fill="none" stroke="#5a5a5a" stroke-width="0.8"/></svg>
<div class="a" style="left:1849px;top:142px;width:20px;height:21.5px;background:#383838"></div>
<svg class="a" style="left:1853px;top:145px" width="12" height="16"><path d="M3,7V4.5C3,2.5 4.3,1.5 6,1.5C7.7,1.5 9,2.5 9,4.5V7" stroke="#999" stroke-width="1.3" fill="none"/><rect x="1.5" y="7" width="9" height="7.5" rx="1" fill="#999"/></svg>
<div class="a" style="left:1873px;top:143.5px;width:92px;height:19.0px;background:#3a3a3a;border:1px solid #262626;border-radius:3px;box-shadow:0 1px 0 rgba(255,255,255,0.05)"></div>
<div class="t" style="left:1878px;top:147.4px;font-size:10.8px;color:#e0e0e0;">HSL</div>
<svg class="a" style="left:1953px;top:147.0px" width="6" height="12"><path d="M0.8,4.6L3,1.6L5.2,4.6Z M0.8,7.4L3,10.4L5.2,7.4Z" fill="#ddd"/></svg>
<div class="t" style="left:1647px;top:186.4px;font-size:10.8px;color:#aaa;">H</div>
<div class="a" style="left:1661px;top:187.9px;width:267px;height:9px;border-radius:4.5px;background:linear-gradient(90deg,#f00,#ff0 17%,#0f0 33%,#0ff 50%,#00f 67%,#f0f 83%,#f00);box-shadow:0 0 0 1px rgba(0,0,0,0.35)"></div>
<svg class="a" style="left:1659px;top:185.4px" width="14" height="14"><circle cx="7" cy="7" r="5.6" fill="#e02010" stroke="#eee" stroke-width="1.6"/><circle cx="7" cy="7" r="6.6" fill="none" stroke="#222" stroke-width="0.7"/><circle cx="7" cy="7" r="3.4" fill="none" stroke="#333" stroke-width="0.9"/></svg>
<div class="t" style="left:1647px;top:207.3px;font-size:10.8px;color:#aaa;">S</div>
<div class="a" style="left:1661px;top:208.8px;width:267px;height:9px;border-radius:4.5px;background:linear-gradient(90deg,#ebebeb,#fcd8d8);box-shadow:0 0 0 1px rgba(0,0,0,0.35)"></div>
<svg class="a" style="left:1659px;top:206.3px" width="14" height="14"><circle cx="7" cy="7" r="5.6" fill="#bbb" stroke="#eee" stroke-width="1.6"/><circle cx="7" cy="7" r="6.6" fill="none" stroke="#222" stroke-width="0.7"/><circle cx="7" cy="7" r="3.4" fill="none" stroke="#333" stroke-width="0.9"/></svg>
<div class="t" style="left:1647px;top:228.5px;font-size:10.8px;color:#aaa;">L</div>
<div class="a" style="left:1661px;top:230.0px;width:267px;height:9px;border-radius:4.5px;background:linear-gradient(90deg,#000,#fff);box-shadow:0 0 0 1px rgba(0,0,0,0.35)"></div>
<svg class="a" style="left:1896px;top:227.5px" width="14" height="14"><circle cx="7" cy="7" r="5.6" fill="#bbb" stroke="#eee" stroke-width="1.6"/><circle cx="7" cy="7" r="6.6" fill="none" stroke="#222" stroke-width="0.7"/><circle cx="7" cy="7" r="3.4" fill="none" stroke="#333" stroke-width="0.9"/></svg>
<div class="a" style="left:1933.5px;top:182px;width:35px;height:18.5px;background:#2e2e2e;border-radius:2px;box-shadow:inset 0 0 0 1px #262626"></div>
<div class="t" style="left:1937px;top:185.8px;font-size:10.8px;color:#e0e0e0;">0</div>
<div class="a" style="left:1933.5px;top:203px;width:35px;height:18.5px;background:#2e2e2e;border-radius:2px;box-shadow:inset 0 0 0 1px #262626"></div>
<div class="t" style="left:1937px;top:206.8px;font-size:10.8px;color:#e0e0e0;">0</div>
<div class="a" style="left:1933.5px;top:224px;width:35px;height:18.5px;background:#2e2e2e;border-radius:2px;box-shadow:inset 0 0 0 1px #262626"></div>
<div class="t" style="left:1937px;top:227.8px;font-size:10.8px;color:#e0e0e0;">92</div>
<div class="a" style="left:1648px;top:249.5px;width:320px;height:46px;background:linear-gradient(180deg,#fff 0%,#bdbdbd 40%,#6a6a6a 70%,#000 100%);box-shadow:0 0 0 1px #222"></div>
<div class="t" style="left:1648px;top:300.5px;font-size:10.8px;color:#aaa;">Opacity</div>
<div class="a" style="left:1649px;top:316.5px;width:13px;height:13px;border-radius:7px;background:#eee;border:1px solid #333"></div>
<div class="a" style="left:1669px;top:318.5px;width:230px;height:8px;border-radius:4px;background:linear-gradient(90deg,rgba(255,255,255,0.5),rgba(0,0,0,0.85)),repeating-conic-gradient(#cfcfcf 0% 25%,#888 0% 50%) 0 0/6px 6px;box-shadow:0 0 0 1px rgba(0,0,0,0.4)"></div>
<div class="a" style="left:1888.5px;top:316.5px;width:12px;height:12px;border-radius:6px;background:#333;border:2px solid #e8e8e8;box-shadow:0 0 0 1px #111"></div>
<div class="a" style="left:1910px;top:312.5px;width:60px;height:19.5px;background:#2e2e2e;border-radius:2px;box-shadow:inset 0 0 0 1px #262626"></div>
<div class="a" style="left:1954px;top:313px;width:1px;height:19px;background:#3d3d3d"></div>
<div class="t" style="left:1914px;top:317px;font-size:10.8px;color:#e0e0e0;">100 %</div>
<svg class="a" style="left:1957px;top:318px" width="10" height="8"><path d="M1,1.5L9,1.5L5,7Z" fill="#ccc"/></svg>
<div class="a" style="left:1640px;top:340px;width:335px;height:1px;background:#2a2a2a"></div>
<div class="a" style="left:1640px;top:341px;width:335px;height:22px;background:#2d2d2d"></div>
<div class="a" style="left:1640px;top:363px;width:335px;height:29px;background:#404040"></div>
<div class="a" style="left:1659px;top:343px;width:38px;height:20px;background:#404040"></div>
<svg class="a" style="left:1645px;top:346px" width="10" height="14"><path d="M3.5,2V12M6.5,2V12" stroke="#555" stroke-width="1"/></svg>
<div class="t" style="left:1662px;top:347px;font-size:10.8px;color:#e8e8e8;">Layers</div>
<div class="t" style="left:1702px;top:347px;font-size:10.8px;color:#8a8a8a;">Effects</div>
<div class="t" style="left:1744px;top:347px;font-size:10.8px;color:#8a8a8a;">Character</div>
<div class="t" style="left:1800px;top:347px;font-size:10.8px;color:#8a8a8a;">Paragraph</div>
<div class="t" style="left:1858px;top:347px;font-size:10.8px;color:#8a8a8a;">Transform</div>
<div class="t" style="left:1915px;top:347px;font-size:10.8px;color:#8a8a8a;">Styles</div>
<div class="a" style="left:1740px;top:348px;width:1px;height:10px;background:#4a4a4a"></div>
<div class="a" style="left:1796px;top:348px;width:1px;height:10px;background:#4a4a4a"></div>
<div class="a" style="left:1854px;top:348px;width:1px;height:10px;background:#4a4a4a"></div>
<div class="a" style="left:1911px;top:348px;width:1px;height:10px;background:#4a4a4a"></div>
<svg class="a" style="left:1958px;top:346px" width="16" height="12"><path d="M1,1.5H11M1,4H11M1,6.5H11M1,9H11" stroke="#ccc" stroke-width="1"/><path d="M11.5,8.5L15.5,8.5L13.5,11Z" fill="#ccc"/></svg>
<div class="t" style="left:1645px;top:372.5px;font-size:10.8px;color:#cfcfcf;">Opacity:</div>
<div class="a" style="left:1700.5px;top:368px;width:48px;height:20.5px;background:#2e2e2e;border-radius:3px;box-shadow:inset 0 0 0 1px #262626"></div>
<div class="t" style="left:1704px;top:373.5px;font-size:10.8px;color:#8a8a8a;">100 %</div>
<svg class="a" style="left:1738px;top:375px" width="8" height="7"><path d="M0.5,1L7.5,1L4,6Z" fill="#999"/></svg>
<div class="a" style="left:1751px;top:368px;width:180.5px;height:20.5px;background:#3a3a3a;border:1px solid #262626;border-radius:3px;box-shadow:0 1px 0 rgba(255,255,255,0.05)"></div>
<div class="t" style="left:1756px;top:372.65px;font-size:10.8px;color:#8a8a8a;">Normal</div>
<svg class="a" style="left:1919.5px;top:372.25px" width="6" height="12"><path d="M0.8,4.6L3,1.6L5.2,4.6Z M0.8,7.4L3,10.4L5.2,7.4Z" fill="#ddd"/></svg>
<svg class="a" style="left:1934px;top:370px" width="16" height="16"><circle cx="8" cy="8" r="4.5" fill="none" stroke="#aaa" stroke-width="2.6"/><path d="M8,1.5V14.5M1.5,8H14.5M3.4,3.4L12.6,12.6M12.6,3.4L3.4,12.6" stroke="#aaa" stroke-width="2.2"/><circle cx="8" cy="8" r="2" fill="#404040"/></svg>
<svg class="a" style="left:1955px;top:370px" width="12" height="16"><path d="M3,7V4.5C3,2.5 4.3,1.5 6,1.5C7.7,1.5 9,2.5 9,4.5V7" stroke="#999" stroke-width="1.3" fill="none"/><rect x="1.5" y="7" width="9" height="7.5" rx="1" fill="#999"/></svg>
<div class="a" style="left:1640px;top:392px;width:321px;height:659px;background:#2f2f2f"></div>
<div class="a" style="left:1961px;top:392px;width:14px;height:659px;background:#353535"></div>
<div class="a" style="left:1640px;top:489px;width:321px;height:1px;background:#272727"></div>
<svg class="a" style="left:1643px;top:410px" width="16" height="16"><circle cx="8" cy="8" r="7" fill="#262626"/><path d="M4.5,5.5L11.5,5.5L8,11Z" fill="#aaa"/></svg>
<div class="a" style="left:1661px;top:394.5px;width:47px;height:46px;background:#8080ff;border:1px solid #000;overflow:hidden"><div class="a" style="left:2.2px;top:2.1px;width:18.4px;height:18.4px;border-radius:50%;background:radial-gradient(circle at 14.5px 14.5px,rgba(140,140,255,0.5),rgba(140,140,255,0) 14px),conic-gradient(from 0deg at 14.5px 14.5px,#e050d8,#f08898 90deg,#d8e880 160deg,#80f0a0 220deg,#30c0d0 270deg,#5050d0 315deg,#b020c8 345deg,#e050d8)"></div><div class="a" style="left:24.3px;top:2.1px;width:18.4px;height:18.4px;border-radius:50%;background:radial-gradient(circle at 50% 50%,rgba(128,128,255,0.9) 0,rgba(128,128,255,0.4) 5px,rgba(128,128,255,0) 9px),conic-gradient(from 0deg,#a010b0,#ff60a0 90deg,#e0f080 150deg,#80ff98 180deg,#20c0a0 240deg,#2060c0 300deg,#a010b0)"></div><svg class="a" style="left:0;top:0" width="46" height="46" viewBox="0 0 46 46"><path d="M8.3,25.7L11.6,29L8.4,32.2L5.2,29Z" fill="#5e5eee"/><path d="M14.8,25.7L18.1,29L14.9,32.2L11.6,29Z" fill="#d65eee"/><path d="M5.2,35.4L8.4,32.2L11.6,35.4L8.3,38.7Z" fill="#5edcee"/><path d="M14.9,32.2L18.1,35.4L14.8,38.7L11.6,35.4Z" fill="#9a9aec"/><rect x="30" y="25.3" width="9.2" height="4.6" fill="#ab4bef"/><rect x="25.4" y="29.9" width="4.6" height="9.2" fill="#4badef"/><rect x="39.2" y="29.9" width="4.6" height="9.2" fill="#ef7fef"/><rect x="30" y="39.1" width="9.2" height="4.6" fill="#7fefef"/></svg></div>
<div class="t" style="left:1713.5px;top:411.3px;font-size:10.5px;color:#f0f0f0;font-weight:bold;">Background</div>
<div class="t" style="left:1778px;top:411.3px;font-size:10.8px;color:#8a8a8a;">(Pixel)</div>
<svg class="a" style="left:1921px;top:409px" width="12" height="16"><path d="M3,7V4.5C3,2.5 4.3,1.5 6,1.5C7.7,1.5 9,2.5 9,4.5V7" stroke="#999" stroke-width="1.3" fill="none"/><rect x="1.5" y="7" width="9" height="7.5" rx="1" fill="#999"/></svg>
<div class="a" style="left:1940px;top:409.5px;width:14.5px;height:14.5px;background:#2a2a2a;border-radius:3px;box-shadow:inset 0 0 0 1px #1e1e1e,0 1px 0 rgba(255,255,255,0.06)"></div>
<svg class="a" style="left:1940px;top:409.5px" width="15" height="15"><path d="M4,8L6.5,11.5L11,3" stroke="#eee" stroke-width="1.3" fill="none"/></svg>
<div class="a" style="left:1681px;top:442.5px;width:47px;height:46px;background:#fff;border:1px solid #000"></div>
<svg class="a" style="left:1711px;top:472px" width="16" height="16"><circle cx="7.7" cy="7.7" r="6.3" fill="#fff" stroke="#222" stroke-width="2"/><path d="M12,3.4 A6,6 0 0 1 3.4,12Z" fill="#fff"/><path d="M3.4,12 A6,6 0 0 1 12,3.4Z" fill="#222"/></svg>
<div class="t" style="left:1733.5px;top:460.3px;font-size:10.8px;color:#9a9a9a;">(HSL Shift Adjustment)</div>
<div class="a" style="left:1940px;top:458px;width:14.5px;height:14.5px;background:#2a2a2a;border-radius:3px;box-shadow:inset 0 0 0 1px #1e1e1e,0 1px 0 rgba(255,255,255,0.06)"></div>
<svg class="a" style="left:1940px;top:458px" width="15" height="15"><path d="M4,8L6.5,11.5L11,3" stroke="#eee" stroke-width="1.3" fill="none"/></svg>
<div class="a" style="left:1640px;top:1051px;width:335px;height:23px;background:#3f3f3f"></div>
<div class="a" style="left:1644.5px;top:1052px;width:21px;height:21px;background:#333"></div>
<svg class="a" style="left:1646px;top:1054px" width="18" height="16"><path d="M1,2.5L17,2.5L17,4L9,8L1,4Z" fill="#bbb"/><path d="M1,7L9,11L17,7M1,10.5L9,14.5L17,10.5" stroke="#bbb" stroke-width="1.8" fill="none"/></svg>
<svg class="a" style="left:1794px;top:1056px" width="14" height="13"><rect x="0" y="0" width="14" height="12.5" fill="#aaa"/><circle cx="7" cy="6.25" r="4" fill="#333"/></svg>
<svg class="a" style="left:1818px;top:1056px" width="14" height="14"><circle cx="7" cy="7" r="6" fill="#aaa"/><path d="M9.5,1.5 L4.5,12.5 A6,6 0 0 0 9.5,1.5Z" fill="#3f3f3f"/><circle cx="7" cy="7" r="6" fill="none" stroke="#aaa" stroke-width="1"/></svg>
<div class="t" style="left:1839px;top:1055px;font-family:'Liberation Serif',serif;font-style:italic;font-size:14px;color:#aaa">fx</div>
<svg class="a" style="left:1911px;top:1056px" width="12" height="14"><path d="M1,0.5H7L11,4.5V13.5H1Z M7,0.5V4.5H11" stroke="#aaa" stroke-width="1" fill="none"/></svg>
<svg class="a" style="left:1935px;top:1058px" width="10" height="10"><rect x="0.0" y="0.0" width="2.5" height="2.5" fill="#ddd"/><rect x="0.0" y="2.5" width="2.5" height="2.5" fill="#333"/><rect x="0.0" y="5.0" width="2.5" height="2.5" fill="#ddd"/><rect x="0.0" y="7.5" width="2.5" height="2.5" fill="#333"/><rect x="2.5" y="0.0" width="2.5" height="2.5" fill="#333"/><rect x="2.5" y="2.5" width="2.5" height="2.5" fill="#ddd"/><rect x="2.5" y="5.0" width="2.5" height="2.5" fill="#333"/><rect x="2.5" y="7.5" width="2.5" height="2.5" fill="#ddd"/><rect x="5.0" y="0.0" width="2.5" height="2.5" fill="#ddd"/><rect x="5.0" y="2.5" width="2.5" height="2.5" fill="#333"/><rect x="5.0" y="5.0" width="2.5" height="2.5" fill="#ddd"/><rect x="5.0" y="7.5" width="2.5" height="2.5" fill="#333"/><rect x="7.5" y="0.0" width="2.5" height="2.5" fill="#333"/><rect x="7.5" y="2.5" width="2.5" height="2.5" fill="#ddd"/><rect x="7.5" y="5.0" width="2.5" height="2.5" fill="#333"/><rect x="7.5" y="7.5" width="2.5" height="2.5" fill="#ddd"/></svg>
<svg class="a" style="left:1956px;top:1055px" width="12" height="15"><path d="M1,3H11M4.5,3V1.5H7.5V3" stroke="#aaa" stroke-width="1.2" fill="none"/><path d="M2,4.5H10L9.3,14H2.7Z" fill="#aaa"/><path d="M4.3,6V12.5M6,6V12.5M7.7,6V12.5" stroke="#3f3f3f" stroke-width="0.8"/></svg>
<div class="a" style="left:56px;top:1074px;width:1584px;height:20px;background:#333"></div>
<div class="t" style="left:76px;top:1078.8px;font-size:11px;color:#bdbdbd"><b style="color:#f0f0f0">Drag</b> to marquee select. <b style="color:#f0f0f0">Click</b> an object to select it.</div>
<div class="a" style="left:1640px;top:1074px;width:335px;height:20px;background:#333"></div>
<div class="a" style="left:790px;top:100px;width:452px;height:442px;box-shadow:0 5px 16px rgba(0,0,0,0.2),0 0 6px rgba(0,0,0,0.15)"></div>
<div class="a" style="left:790px;top:100px;width:452px;height:442px;background:#404040;border:1px solid #080808;border-top:none"></div>
<div class="a" style="left:791px;top:100px;width:450px;height:441px;border:1px solid #5c5c5c;border-top:none"></div>
<div class="t" style="left:751.8px;top:129.74400000000003px;width:200px;text-align:right;font-size:10.7px;color:#c8c8c8">Type:</div>
<div class="a" style="left:959.2px;top:127.4px;width:148.5px;height:19.5px;background:#393939;border:1px solid #232323;border-radius:3px;box-shadow:0 1px 0 rgba(255,255,255,0.05)"></div>
<div class="t" style="left:964.2px;top:131.95800000000003px;font-size:10.7px;color:#ececec;">Print</div>
<svg class="a" style="left:1096.2px;top:131.15px" width="6" height="12"><path d="M0.8,4.6L3,1.6L5.2,4.6Z M0.8,7.4L3,10.4L5.2,7.4Z" fill="#e0e0e0"/></svg>
<div class="t" style="left:751.8px;top:155.794px;width:200px;text-align:right;font-size:10.7px;color:#c8c8c8">Page Preset:</div>
<div class="a" style="left:959.2px;top:153.7px;width:246.79999999999995px;height:19.0px;background:#393939;border:1px solid #232323;border-radius:3px;box-shadow:0 1px 0 rgba(255,255,255,0.05)"></div>
<div class="t" style="left:964.2px;top:158.008px;font-size:10.7px;color:#ececec;">&lt;Custom&gt;</div>
<svg class="a" style="left:1194.5px;top:157.2px" width="6" height="12"><path d="M0.8,4.6L3,1.6L5.2,4.6Z M0.8,7.4L3,10.4L5.2,7.4Z" fill="#e0e0e0"/></svg>
<div class="t" style="left:751.8px;top:181.64400000000003px;width:200px;text-align:right;font-size:10.7px;color:#c8c8c8">Document Units:</div>
<div class="a" style="left:959.2px;top:179.5px;width:148.5px;height:19.099999999999994px;background:#393939;border:1px solid #232323;border-radius:3px;box-shadow:0 1px 0 rgba(255,255,255,0.05)"></div>
<div class="t" style="left:964.2px;top:183.85800000000003px;font-size:10.7px;color:#ececec;">Pixels</div>
<svg class="a" style="left:1096.2px;top:183.05px" width="6" height="12"><path d="M0.8,4.6L3,1.6L5.2,4.6Z M0.8,7.4L3,10.4L5.2,7.4Z" fill="#e0e0e0"/></svg>
<div class="t" style="left:751.8px;top:207.49400000000003px;width:200px;text-align:right;font-size:10.7px;color:#c8c8c8">Image Placement Policy:</div>
<div class="a" style="left:959.2px;top:205.3px;width:148.5px;height:19.19999999999999px;background:#393939;border:1px solid #232323;border-radius:3px;box-shadow:0 1px 0 rgba(255,255,255,0.05)"></div>
<div class="t" style="left:964.2px;top:209.70800000000003px;font-size:10.7px;color:#ececec;">Prefer Embedded</div>
<svg class="a" style="left:1096.2px;top:208.9px" width="6" height="12"><path d="M0.8,4.6L3,1.6L5.2,4.6Z M0.8,7.4L3,10.4L5.2,7.4Z" fill="#e0e0e0"/></svg>
<svg class="a" style="left:1214px;top:157px" width="16" height="12"><path d="M1,1.5H10M1,4H10M1,6.5H10M1,9H10" stroke="#ddd" stroke-width="1"/><path d="M10.5,8.5L14.5,8.5L12.5,11Z" fill="#ddd"/></svg>
<div class="a" style="left:792px;top:235px;width:448px;height:24px;background:#2a2a2a"></div>
<div class="a" style="left:972px;top:237px;width:54px;height:22px;background:#474747"></div>
<div class="t" style="left:903px;top:242px;font-size:10.7px;color:#8e8e8e;">Dimensions</div>
<div class="t" style="left:983px;top:242px;font-size:10.7px;color:#eeeeee;">Colour</div>
<div class="t" style="left:1039px;top:242px;font-size:10.7px;color:#8e8e8e;">Margins</div>
<div class="a" style="left:1088px;top:241px;width:1px;height:12px;background:#111"></div>
<div class="t" style="left:1100.5px;top:242px;font-size:10.7px;color:#8e8e8e;">Bleed</div>
<div class="a" style="left:795px;top:259px;width:443px;height:247px;background:#474747;border:1px solid #555;border-top:none;border-radius:0 0 4px 4px"></div>
<div class="t" style="left:751.8px;top:282.644px;width:200px;text-align:right;font-size:10.7px;color:#c8c8c8">Colour Format:</div>
<div class="a" style="left:959.3px;top:280.5px;width:148.4000000000001px;height:19.100000000000023px;background:#393939;border:1px solid #232323;border-radius:3px;box-shadow:0 1px 0 rgba(255,255,255,0.05)"></div>
<div class="t" style="left:964.3px;top:284.858px;font-size:10.7px;color:#ececec;">RGB/8</div>
<svg class="a" style="left:1096.2px;top:284.05px" width="6" height="12"><path d="M0.8,4.6L3,1.6L5.2,4.6Z M0.8,7.4L3,10.4L5.2,7.4Z" fill="#e0e0e0"/></svg>
<div class="t" style="left:751.8px;top:309.544px;width:200px;text-align:right;font-size:10.7px;color:#c8c8c8">Colour Profile:</div>
<div class="a" style="left:959.3px;top:307.4px;width:258.70000000000005px;height:19.100000000000023px;background:#393939;border:1px solid #232323;border-radius:3px;box-shadow:0 1px 0 rgba(255,255,255,0.05)"></div>
<div class="t" style="left:964.3px;top:311.758px;font-size:10.7px;color:#ececec;">sRGB IEC61966-2.1</div>
<svg class="a" style="left:1206.5px;top:310.95px" width="6" height="12"><path d="M0.8,4.6L3,1.6L5.2,4.6Z M0.8,7.4L3,10.4L5.2,7.4Z" fill="#e0e0e0"/></svg>
<div class="a" style="left:960px;top:333.3px;width:97px;height:20.5px;background:#2a2a2a;border:1px solid #222;border-radius:3px;overflow:hidden"><div class="a" style="left:0;top:0;width:44px;height:19px;background:#3b3b3b"></div><div class="a" style="left:44px;top:0;width:1px;height:19px;background:#262626"></div></div>
<div class="t" style="left:966.5px;top:337.5px;font-size:10.7px;color:#e8e8e8;">Assign</div>
<div class="t" style="left:1010px;top:337.5px;font-size:10.7px;color:#f0f0f0;">Convert</div>
<div class="a" style="left:959.5px;top:363.7px;width:14.5px;height:14px;background:#353535;border:1px solid #262626;border-radius:3px"></div>
<svg class="a" style="left:959.5px;top:363.5px" width="15" height="15"><path d="M4,8L6.5,11.5L11,3" stroke="#f0f0f0" stroke-width="1.3" fill="none"/></svg>
<div class="t" style="left:977.5px;top:365.3px;font-size:10.7px;color:#e8e8e8;">Transparent background</div>
<div class="a" style="left:1071.6px;top:513.6px;width:73.20000000000005px;height:20.100000000000023px;background:#3a3a3a;border:1px solid #242424;border-radius:3px;box-shadow:0 1px 0 rgba(255,255,255,0.05)"></div>
<div class="t" style="left:1071.6px;top:517.6580000000001px;width:73.20000000000005px;text-align:center;font-size:10.7px;color:#e8e8e8">Cancel</div>
<div class="a" style="left:1151.5px;top:513.6px;width:73.20000000000005px;height:20.100000000000023px;background:#3a3a3a;border:1px solid #242424;border-radius:3px;box-shadow:0 1px 0 rgba(255,255,255,0.05)"></div>
<div class="t" style="left:1151.5px;top:517.6580000000001px;width:73.20000000000005px;text-align:center;font-size:10.7px;color:#e8e8e8">OK</div>
<div id="winb"></div>
</body></html>
